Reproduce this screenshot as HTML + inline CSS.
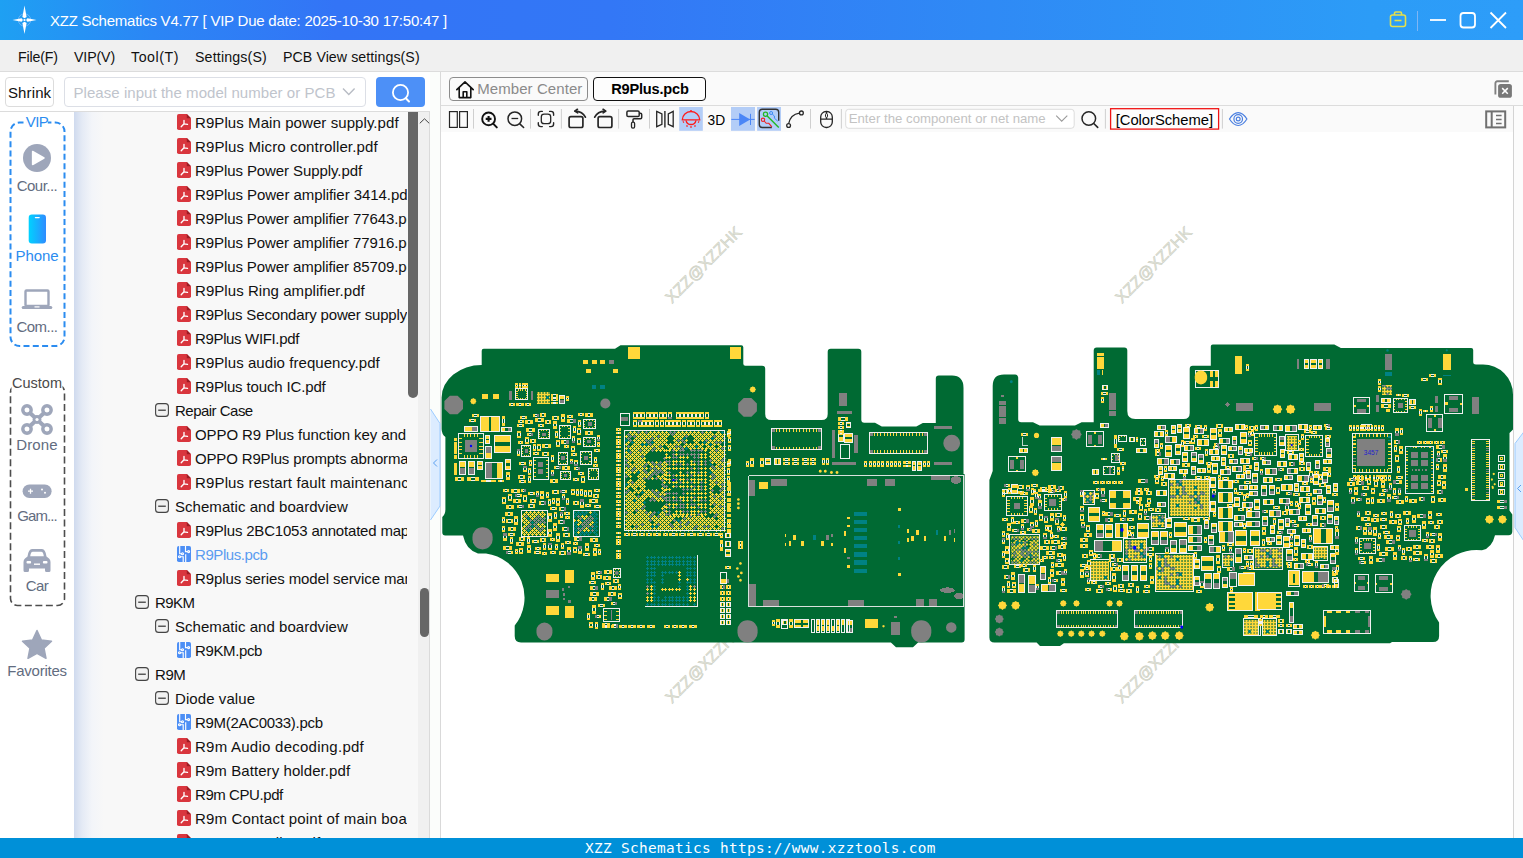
<!DOCTYPE html><html><head><meta charset="utf-8"><title>XZZ Schematics</title><style>
*{box-sizing:border-box;margin:0;padding:0}
html,body{width:1523px;height:858px;overflow:hidden;background:#fff}
body{font-family:"Liberation Sans",sans-serif;font-size:15px;color:#000;position:relative}
.abs{position:absolute}
.t{position:absolute;white-space:pre;line-height:20px;height:20px}
#titlebar{left:0;top:0;width:1523px;height:40px;background:linear-gradient(90deg,#1ea0f3 0%,#2b86f5 10%,#3374f6 22%,#3377f6 40%,#2f8af5 65%,#2c9cf7 90%,#2d9df9 100%)}
#menubar{left:0;top:40px;width:1523px;height:32px;background:#f0f0f0;border-bottom:1px solid #dcdcdc}
#menubar .t{top:7px;color:#111}
#searchrow{left:0;top:72px;width:430px;height:40px;background:#fff;border-bottom:1px solid #dcdcdc}
#sidebar{left:0;top:112px;width:74px;height:726px;background:#fff}
#tree{left:74px;top:112px;width:334px;height:726px;overflow:hidden;background:linear-gradient(90deg,#cfdaee 0px,#e4eaf5 8px,#f3f5f9 18px,#f8f8f8 30px,#f8f8f8 100%)}
#tree .r{position:absolute;left:0;height:24px;width:600px;white-space:pre;line-height:24px;font-size:15px;color:#111}
#tree .r span{position:absolute;top:1px}
#scroll1{left:408px;top:112px;width:10px;height:726px;background:#f8f8f8}
#scroll2{left:418px;top:112px;width:12px;height:726px;background:#f0f0f0;border-right:1px solid #dadada}
#divider{left:430px;top:72px;width:11px;height:766px;background:#fbfdfb;border-right:1px solid #d9d9d9}
#tabrow{left:441px;top:72px;width:1082px;height:34px;background:#fafafa;border-bottom:1px solid #dcdcdc}
#toolbar{left:441px;top:106px;width:1073px;height:26px;background:#fafafa}
#canvas{left:441px;top:132px;width:1073px;height:706px;background:#fff;overflow:hidden}
#rstrip{left:1513px;top:106px;width:10px;height:732px;background:#fcfcfc;border-left:1px solid #d4d4d4}
#status{left:0;top:838px;width:1523px;height:20px;background:#0090d8}
#status .t{left:585px;top:-0.2px;font:14.4px/20px "DejaVu Sans Mono","Liberation Mono",monospace;color:#fff;letter-spacing:.33px}
.side{position:absolute;left:0;width:74px;text-align:center;font-size:15px;color:#626c80;line-height:20px;height:20px;white-space:pre}
</style></head><body><div id="titlebar" class="abs">
<svg class="abs" style="left:10px;top:4px" width="30" height="32" viewBox="0 0 30 32">
<circle cx="14.5" cy="16" r="6.2" fill="none" stroke="#9cc6fb" stroke-width="0.8" opacity=".7"/>
<path d="M14.5 1.5 L16.6 13 L14.5 14.2 L12.4 13 Z M14.5 30 L12.4 19 L14.5 17.8 L16.6 19 Z M2.5 16 L11.6 14.3 L12.9 16 L11.6 17.7 Z M26.5 16 L17.4 17.7 L16.1 16 L17.4 14.3 Z" fill="#fff"/>
<circle cx="14.5" cy="16" r="1.1" fill="#fff"/>
</svg>
<div class="t" style="left:50px;top:10.5px;color:#fff;font-size:15px;letter-spacing:-0.238px">XZZ Schematics V4.77 [ VIP Due date: 2025-10-30 17:50:47 ]</div>
<svg class="abs" style="left:1385px;top:8px" width="130" height="26" viewBox="0 0 130 26">
<g fill="none" stroke="#e6e04a" stroke-width="1.6" stroke-linejoin="round"><rect x="5.5" y="7" width="15" height="11.5" rx="2"/><path d="M9.5 7V5.2Q9.5 4 10.7 4H15.3Q16.5 4 16.5 5.2V7"/><path d="M9.5 12.5H16.5"/></g>
<path d="M32.5 3V23" stroke="#7fb6f5" stroke-width="1"/>
<g fill="none" stroke="#fff" stroke-width="1.8"><path d="M45 12H61"/><rect x="75.5" y="5" width="14.5" height="14.5" rx="3"/><path d="M105.5 4.5L121 20M121 4.5L105.5 20"/></g>
</svg>
</div>
<div id="menubar" class="abs">
<div class="t" style="left:18px;top:7px;font-size:14.2px;letter-spacing:-0.174px">File(F)</div>
<div class="t" style="left:74px;top:7px;font-size:14.2px;letter-spacing:-0.136px">VIP(V)</div>
<div class="t" style="left:131px;top:7px;font-size:14.2px;letter-spacing:0.545px">Tool(T)</div>
<div class="t" style="left:195px;top:7px;font-size:14.2px;letter-spacing:0.16px">Settings(S)</div>
<div class="t" style="left:283px;top:7px;font-size:14.2px;letter-spacing:0.066px">PCB View settings(S)</div>
</div>
<div id="searchrow" class="abs">
<div class="abs" style="left:5px;top:5px;width:49px;height:30px;border:1px solid #dcdcdc;border-radius:4px;background:#fff"></div>
<div class="t" style="left:8px;top:10.5px;font-size:15px;color:#111;letter-spacing:0.113px">Shrink</div>
<div class="abs" style="left:64px;top:5px;width:302px;height:30px;border:1px solid #dcdfe6;border-radius:4px;background:#fff"></div>
<div class="t" style="left:73.5px;top:10.5px;font-size:15px;color:#c0c4cc;letter-spacing:0.051px">Please input the model number or PCB</div>
<svg class="abs" style="left:341px;top:14px" width="16" height="12" viewBox="0 0 16 12"><path d="M2 2.5L7.8 8.5L13.6 2.5" fill="none" stroke="#b8bcc4" stroke-width="1.4"/></svg>
<div class="abs" style="left:376px;top:5px;width:49px;height:30px;border-radius:4px;background:#4d90f7"></div>
<svg class="abs" style="left:388px;top:9px" width="26" height="24" viewBox="0 0 26 24"><circle cx="12.5" cy="11.5" r="7.6" fill="none" stroke="#fff" stroke-width="1.8"/><path d="M17.8 17.2L21 20.5" stroke="#fff" stroke-width="2" stroke-linecap="round"/></svg>
</div>
<div id="sidebar" class="abs">
<svg class="abs" style="left:0;top:0" width="74" height="726" viewBox="0 112 74 726">
<defs><linearGradient id="ph" x1="0" y1="0" x2="1" y2="0"><stop offset="0" stop-color="#00d2ff"/><stop offset="1" stop-color="#2f8cff"/></linearGradient></defs>
<rect x="10.5" y="122.500" width="54" height="223.500" rx="9" fill="none" stroke="#2b8cf0" stroke-width="2" stroke-dasharray="6 3.300" stroke-dashoffset="2"/>
<rect x="26.300" y="114" width="21.500" height="16" fill="#fff"/>
<circle cx="37" cy="158" r="14" fill="#9ea6ba"/><path d="M32.6 151.5L44 158L32.6 164.5Z" fill="#fff" stroke="#fff" stroke-width="1.5" stroke-linejoin="round"/>
<rect x="28.7" y="214.5" width="17.3" height="29" rx="3.2" fill="url(#ph)"/><rect x="34.8" y="217" width="5" height="1.2" rx=".6" fill="#fff"/>
<g fill="none" stroke="#9ea6ba" stroke-width="2.4"><rect x="25.5" y="290.5" width="23" height="15.5" rx="1"/></g><rect x="21.7" y="306" width="30.6" height="3" rx="1.5" fill="#9ea6ba"/><rect x="34.5" y="306.3" width="5" height="1.2" fill="#fff"/>
<rect x="10.500" y="385" width="54" height="220.5" rx="7" fill="none" stroke="#4d4d4d" stroke-width="1.6" stroke-dasharray="7 3.5"/>
<rect x="11.5" y="372" width="51" height="19" fill="#fff"/>
<g fill="none" stroke="#9ea6ba" stroke-width="3.4"><circle cx="27" cy="410" r="4.2"/><circle cx="47" cy="410" r="4.2"/><circle cx="27" cy="429" r="4.2"/><circle cx="47" cy="429" r="4.2"/><path d="M29.5 412.5L44.5 426.5M44.5 412.5L29.5 426.5" stroke-width="4"/></g><circle cx="37" cy="419.5" r="4.4" fill="#9ea6ba"/><circle cx="37" cy="419.5" r="1.6" fill="#fff"/>
<rect x="22.6" y="484.5" width="29" height="13.5" rx="6.7" fill="#9ea6ba"/><path d="M28 491.2h5M30.5 488.7v5" stroke="#fff" stroke-width="1.3"/><circle cx="42" cy="489.6" r="1" fill="#fff"/><circle cx="45" cy="492.8" r="1" fill="#fff"/>
<path d="M27.5 556.5Q28.5 549 32 549H42Q45.500 549 46.500 556.5L49 558.5Q50.500 559.5 50.500 562V570.500Q50.500 572 49 572H46.500Q45 572 45 570.500V568.500H29V570.500Q29 572 27.500 572H25Q23.500 572 23.500 570.500V562Q23.500 559.500 25 558.500Z" fill="#9ea6ba"/><path d="M30.200 556.200Q30.800 551.800 32.800 551.800H41.200Q43.200 551.800 43.800 556.200Z" fill="#fff"/><rect x="26.500" y="561" width="4.6" height="2.600" rx="1" fill="#fff"/><rect x="42.900" y="561" width="4.600" height="2.600" rx="1" fill="#fff"/><rect x="34" y="563.5" width="6" height="1.400" fill="#fff"/>
<path d="M37 630.500L41.400 640L51.500 641.200L44 648.200L46 658.300L37 653.300L28 658.300L30 648.200L22.500 641.200L32.600 640Z" fill="#9ea6ba" stroke="#9ea6ba" stroke-width="1.500" stroke-linejoin="round"/>
</svg>
<div class="side" style="top:0.29999999999999716px;color:#2b8cf0;font-size:15px;letter-spacing:-0.626px">VIP</div>
<div class="side" style="top:63.69999999999999px;color:#626c80;font-size:15px;letter-spacing:-0.527px">Cour...</div>
<div class="side" style="top:134px;color:#2b8cf0;font-size:15px;letter-spacing:-0.075px">Phone</div>
<div class="side" style="top:204.5px;color:#626c80;font-size:15px;letter-spacing:-0.529px">Com...</div>
<div class="side" style="top:261px;color:#4a4a4a;font-size:14.5px">Custom</div>
<div class="side" style="top:323px;color:#626c80;font-size:15px;letter-spacing:0.149px">Drone</div>
<div class="side" style="top:394px;color:#626c80;font-size:15px;letter-spacing:-0.918px">Gam...</div>
<div class="side" style="top:464px;color:#626c80;font-size:15px;letter-spacing:-0.557px">Car</div>
<div class="side" style="top:549px;color:#626c80;font-size:15px;letter-spacing:-0.243px">Favorites</div>
</div>
<div id="tree" class="abs"><div class="abs" style="left:0;top:0;width:332.5px;height:726px;overflow:hidden">
<div class="r" style="top:-2px"><svg class="abs" style="left:103px;top:4px" width="14" height="16" viewBox="0 0 14 16"><path d="M1.800 0H9.800L14 4.200V14.200Q14 16 12.200 16H1.800Q0 16 0 14.200V1.800Q0 0 1.800 0Z" fill="#d9363e"/><path d="M9.800 0L14 4.200H9.800Z" fill="#9c1c24"/><path d="M7 9.800V6.300M7 9.800L4.200 12.700M7 9.800L10.500 10.400" fill="none" stroke="#fff" stroke-width="1.350" stroke-linecap="round"/></svg><span style="left:121px;letter-spacing:0.079px">R9Plus Main power supply.pdf</span></div>
<div class="r" style="top:22px"><svg class="abs" style="left:103px;top:4px" width="14" height="16" viewBox="0 0 14 16"><path d="M1.800 0H9.800L14 4.200V14.200Q14 16 12.200 16H1.800Q0 16 0 14.200V1.800Q0 0 1.800 0Z" fill="#d9363e"/><path d="M9.800 0L14 4.200H9.800Z" fill="#9c1c24"/><path d="M7 9.800V6.300M7 9.800L4.200 12.700M7 9.800L10.500 10.400" fill="none" stroke="#fff" stroke-width="1.350" stroke-linecap="round"/></svg><span style="left:121px;letter-spacing:0.128px">R9Plus Micro controller.pdf</span></div>
<div class="r" style="top:46px"><svg class="abs" style="left:103px;top:4px" width="14" height="16" viewBox="0 0 14 16"><path d="M1.800 0H9.800L14 4.200V14.200Q14 16 12.200 16H1.800Q0 16 0 14.200V1.800Q0 0 1.800 0Z" fill="#d9363e"/><path d="M9.800 0L14 4.200H9.800Z" fill="#9c1c24"/><path d="M7 9.800V6.300M7 9.800L4.200 12.700M7 9.800L10.500 10.400" fill="none" stroke="#fff" stroke-width="1.350" stroke-linecap="round"/></svg><span style="left:121px;letter-spacing:-0.086px">R9Plus Power Supply.pdf</span></div>
<div class="r" style="top:70px"><svg class="abs" style="left:103px;top:4px" width="14" height="16" viewBox="0 0 14 16"><path d="M1.800 0H9.800L14 4.200V14.200Q14 16 12.200 16H1.800Q0 16 0 14.200V1.800Q0 0 1.800 0Z" fill="#d9363e"/><path d="M9.800 0L14 4.200H9.800Z" fill="#9c1c24"/><path d="M7 9.800V6.300M7 9.800L4.200 12.700M7 9.800L10.500 10.400" fill="none" stroke="#fff" stroke-width="1.350" stroke-linecap="round"/></svg><span style="left:121px;letter-spacing:-0.059px">R9Plus Power amplifier 3414.pdf</span></div>
<div class="r" style="top:94px"><svg class="abs" style="left:103px;top:4px" width="14" height="16" viewBox="0 0 14 16"><path d="M1.800 0H9.800L14 4.200V14.200Q14 16 12.200 16H1.800Q0 16 0 14.200V1.800Q0 0 1.800 0Z" fill="#d9363e"/><path d="M9.800 0L14 4.200H9.800Z" fill="#9c1c24"/><path d="M7 9.800V6.300M7 9.800L4.200 12.700M7 9.800L10.500 10.400" fill="none" stroke="#fff" stroke-width="1.350" stroke-linecap="round"/></svg><span style="left:121px;letter-spacing:-0.093px">R9Plus Power amplifier 77643.pdf</span></div>
<div class="r" style="top:118px"><svg class="abs" style="left:103px;top:4px" width="14" height="16" viewBox="0 0 14 16"><path d="M1.800 0H9.800L14 4.200V14.200Q14 16 12.200 16H1.800Q0 16 0 14.200V1.800Q0 0 1.800 0Z" fill="#d9363e"/><path d="M9.800 0L14 4.200H9.800Z" fill="#9c1c24"/><path d="M7 9.800V6.300M7 9.800L4.200 12.700M7 9.800L10.500 10.400" fill="none" stroke="#fff" stroke-width="1.350" stroke-linecap="round"/></svg><span style="left:121px;letter-spacing:-0.093px">R9Plus Power amplifier 77916.pdf</span></div>
<div class="r" style="top:142px"><svg class="abs" style="left:103px;top:4px" width="14" height="16" viewBox="0 0 14 16"><path d="M1.800 0H9.800L14 4.200V14.200Q14 16 12.200 16H1.800Q0 16 0 14.200V1.800Q0 0 1.800 0Z" fill="#d9363e"/><path d="M9.800 0L14 4.200H9.800Z" fill="#9c1c24"/><path d="M7 9.800V6.300M7 9.800L4.200 12.700M7 9.800L10.500 10.400" fill="none" stroke="#fff" stroke-width="1.350" stroke-linecap="round"/></svg><span style="left:121px;letter-spacing:-0.093px">R9Plus Power amplifier 85709.pdf</span></div>
<div class="r" style="top:166px"><svg class="abs" style="left:103px;top:4px" width="14" height="16" viewBox="0 0 14 16"><path d="M1.800 0H9.800L14 4.200V14.200Q14 16 12.200 16H1.800Q0 16 0 14.200V1.800Q0 0 1.800 0Z" fill="#d9363e"/><path d="M9.800 0L14 4.200H9.800Z" fill="#9c1c24"/><path d="M7 9.800V6.300M7 9.800L4.200 12.700M7 9.800L10.500 10.400" fill="none" stroke="#fff" stroke-width="1.350" stroke-linecap="round"/></svg><span style="left:121px;letter-spacing:0.055px">R9Plus Ring amplifier.pdf</span></div>
<div class="r" style="top:190px"><svg class="abs" style="left:103px;top:4px" width="14" height="16" viewBox="0 0 14 16"><path d="M1.800 0H9.800L14 4.200V14.200Q14 16 12.200 16H1.800Q0 16 0 14.200V1.800Q0 0 1.800 0Z" fill="#d9363e"/><path d="M9.800 0L14 4.200H9.800Z" fill="#9c1c24"/><path d="M7 9.800V6.300M7 9.800L4.200 12.700M7 9.800L10.500 10.400" fill="none" stroke="#fff" stroke-width="1.350" stroke-linecap="round"/></svg><span style="left:121px;letter-spacing:-0.165px">R9Plus Secondary power supply.pdf</span></div>
<div class="r" style="top:214px"><svg class="abs" style="left:103px;top:4px" width="14" height="16" viewBox="0 0 14 16"><path d="M1.800 0H9.800L14 4.200V14.200Q14 16 12.200 16H1.800Q0 16 0 14.200V1.800Q0 0 1.800 0Z" fill="#d9363e"/><path d="M9.800 0L14 4.200H9.800Z" fill="#9c1c24"/><path d="M7 9.800V6.300M7 9.800L4.200 12.700M7 9.800L10.500 10.400" fill="none" stroke="#fff" stroke-width="1.350" stroke-linecap="round"/></svg><span style="left:121px;letter-spacing:-0.347px">R9Plus WIFI.pdf</span></div>
<div class="r" style="top:238px"><svg class="abs" style="left:103px;top:4px" width="14" height="16" viewBox="0 0 14 16"><path d="M1.800 0H9.800L14 4.200V14.200Q14 16 12.200 16H1.800Q0 16 0 14.200V1.800Q0 0 1.800 0Z" fill="#d9363e"/><path d="M9.800 0L14 4.200H9.800Z" fill="#9c1c24"/><path d="M7 9.800V6.300M7 9.800L4.200 12.700M7 9.800L10.500 10.400" fill="none" stroke="#fff" stroke-width="1.350" stroke-linecap="round"/></svg><span style="left:121px;letter-spacing:0.062px">R9Plus audio frequency.pdf</span></div>
<div class="r" style="top:262px"><svg class="abs" style="left:103px;top:4px" width="14" height="16" viewBox="0 0 14 16"><path d="M1.800 0H9.800L14 4.200V14.200Q14 16 12.200 16H1.800Q0 16 0 14.200V1.800Q0 0 1.800 0Z" fill="#d9363e"/><path d="M9.800 0L14 4.200H9.800Z" fill="#9c1c24"/><path d="M7 9.800V6.300M7 9.800L4.200 12.700M7 9.800L10.500 10.400" fill="none" stroke="#fff" stroke-width="1.350" stroke-linecap="round"/></svg><span style="left:121px;letter-spacing:-0.148px">R9Plus touch IC.pdf</span></div>
<div class="r" style="top:286px"><svg class="abs" style="left:81px;top:5px" width="14" height="14" viewBox="0 0 14 14"><rect x=".6" y=".6" width="12.800" height="12.800" rx="3" fill="#f1f1f1" stroke="#444" stroke-width="1.100"/><path d="M3.200 7.200H10.800" stroke="#333" stroke-width="1.200"/></svg><span style="left:101px;letter-spacing:-0.516px">Repair Case</span></div>
<div class="r" style="top:310px"><svg class="abs" style="left:103px;top:4px" width="14" height="16" viewBox="0 0 14 16"><path d="M1.800 0H9.800L14 4.200V14.200Q14 16 12.200 16H1.800Q0 16 0 14.200V1.800Q0 0 1.800 0Z" fill="#d9363e"/><path d="M9.800 0L14 4.200H9.800Z" fill="#9c1c24"/><path d="M7 9.800V6.300M7 9.800L4.200 12.700M7 9.800L10.500 10.400" fill="none" stroke="#fff" stroke-width="1.350" stroke-linecap="round"/></svg><span style="left:121px;letter-spacing:-0.084px">OPPO R9 Plus function key and touch failure.pdf</span></div>
<div class="r" style="top:334px"><svg class="abs" style="left:103px;top:4px" width="14" height="16" viewBox="0 0 14 16"><path d="M1.800 0H9.800L14 4.200V14.200Q14 16 12.200 16H1.800Q0 16 0 14.200V1.800Q0 0 1.800 0Z" fill="#d9363e"/><path d="M9.800 0L14 4.200H9.800Z" fill="#9c1c24"/><path d="M7 9.800V6.300M7 9.800L4.200 12.700M7 9.800L10.500 10.400" fill="none" stroke="#fff" stroke-width="1.350" stroke-linecap="round"/></svg><span style="left:121px;letter-spacing:-0.152px">OPPO R9Plus prompts abnormal charging.pdf</span></div>
<div class="r" style="top:358px"><svg class="abs" style="left:103px;top:4px" width="14" height="16" viewBox="0 0 14 16"><path d="M1.800 0H9.800L14 4.200V14.200Q14 16 12.200 16H1.800Q0 16 0 14.200V1.800Q0 0 1.800 0Z" fill="#d9363e"/><path d="M9.800 0L14 4.200H9.800Z" fill="#9c1c24"/><path d="M7 9.800V6.300M7 9.800L4.200 12.700M7 9.800L10.500 10.400" fill="none" stroke="#fff" stroke-width="1.350" stroke-linecap="round"/></svg><span style="left:121px;letter-spacing:0.153px">R9Plus restart fault maintenance.pdf</span></div>
<div class="r" style="top:382px"><svg class="abs" style="left:81px;top:5px" width="14" height="14" viewBox="0 0 14 14"><rect x=".6" y=".6" width="12.800" height="12.800" rx="3" fill="#f1f1f1" stroke="#444" stroke-width="1.100"/><path d="M3.200 7.200H10.800" stroke="#333" stroke-width="1.200"/></svg><span style="left:101px;letter-spacing:0.045px">Schematic and boardview</span></div>
<div class="r" style="top:406px"><svg class="abs" style="left:103px;top:4px" width="14" height="16" viewBox="0 0 14 16"><path d="M1.800 0H9.800L14 4.200V14.200Q14 16 12.200 16H1.800Q0 16 0 14.200V1.800Q0 0 1.800 0Z" fill="#d9363e"/><path d="M9.800 0L14 4.200H9.800Z" fill="#9c1c24"/><path d="M7 9.800V6.300M7 9.800L4.200 12.700M7 9.800L10.500 10.400" fill="none" stroke="#fff" stroke-width="1.350" stroke-linecap="round"/></svg><span style="left:121px;letter-spacing:-0.19px">R9Plus 2BC1053 annotated map.pdf</span></div>
<div class="r" style="top:430px"><svg class="abs" style="left:103px;top:4px" width="14" height="16" viewBox="0 0 14 16"><rect x="0" y="0" width="14" height="16" rx="1.800" fill="#4d8ff5"/><g fill="none" stroke="#fff" stroke-width="1.150"><path d="M2.700 0V7.700H4.500M8.500 0V5.600H10.600M3.500 10.700H6.200V16M8.700 8.300V16"/><circle cx="5.500" cy="7.700" r="1"/><circle cx="11.600" cy="5.600" r="1"/><circle cx="2.500" cy="10.700" r="1"/></g></svg><span style="left:121px;color:#5b9cf0;letter-spacing:-0.431px">R9Plus.pcb</span></div>
<div class="r" style="top:454px"><svg class="abs" style="left:103px;top:4px" width="14" height="16" viewBox="0 0 14 16"><path d="M1.800 0H9.800L14 4.200V14.200Q14 16 12.200 16H1.800Q0 16 0 14.200V1.800Q0 0 1.800 0Z" fill="#d9363e"/><path d="M9.800 0L14 4.200H9.800Z" fill="#9c1c24"/><path d="M7 9.800V6.300M7 9.800L4.200 12.700M7 9.800L10.500 10.400" fill="none" stroke="#fff" stroke-width="1.350" stroke-linecap="round"/></svg><span style="left:121px;letter-spacing:-0.099px">R9plus series model service manual.pdf</span></div>
<div class="r" style="top:478px"><svg class="abs" style="left:61px;top:5px" width="14" height="14" viewBox="0 0 14 14"><rect x=".6" y=".6" width="12.800" height="12.800" rx="3" fill="#f1f1f1" stroke="#444" stroke-width="1.100"/><path d="M3.200 7.200H10.800" stroke="#333" stroke-width="1.200"/></svg><span style="left:81px;letter-spacing:-0.544px">R9KM</span></div>
<div class="r" style="top:502px"><svg class="abs" style="left:81px;top:5px" width="14" height="14" viewBox="0 0 14 14"><rect x=".6" y=".6" width="12.800" height="12.800" rx="3" fill="#f1f1f1" stroke="#444" stroke-width="1.100"/><path d="M3.200 7.200H10.800" stroke="#333" stroke-width="1.200"/></svg><span style="left:101px;letter-spacing:0.045px">Schematic and boardview</span></div>
<div class="r" style="top:526px"><svg class="abs" style="left:103px;top:4px" width="14" height="16" viewBox="0 0 14 16"><rect x="0" y="0" width="14" height="16" rx="1.800" fill="#4d8ff5"/><g fill="none" stroke="#fff" stroke-width="1.150"><path d="M2.700 0V7.700H4.500M8.500 0V5.600H10.600M3.500 10.700H6.200V16M8.700 8.300V16"/><circle cx="5.500" cy="7.700" r="1"/><circle cx="11.600" cy="5.600" r="1"/><circle cx="2.500" cy="10.700" r="1"/></g></svg><span style="left:121px;letter-spacing:-0.366px">R9KM.pcb</span></div>
<div class="r" style="top:550px"><svg class="abs" style="left:61px;top:5px" width="14" height="14" viewBox="0 0 14 14"><rect x=".6" y=".6" width="12.800" height="12.800" rx="3" fill="#f1f1f1" stroke="#444" stroke-width="1.100"/><path d="M3.200 7.200H10.800" stroke="#333" stroke-width="1.200"/></svg><span style="left:81px;letter-spacing:-0.424px">R9M</span></div>
<div class="r" style="top:574px"><svg class="abs" style="left:81px;top:5px" width="14" height="14" viewBox="0 0 14 14"><rect x=".6" y=".6" width="12.800" height="12.800" rx="3" fill="#f1f1f1" stroke="#444" stroke-width="1.100"/><path d="M3.200 7.200H10.800" stroke="#333" stroke-width="1.200"/></svg><span style="left:101px;letter-spacing:0.08px">Diode value</span></div>
<div class="r" style="top:598px"><svg class="abs" style="left:103px;top:4px" width="14" height="16" viewBox="0 0 14 16"><rect x="0" y="0" width="14" height="16" rx="1.800" fill="#4d8ff5"/><g fill="none" stroke="#fff" stroke-width="1.150"><path d="M2.700 0V7.700H4.500M8.500 0V5.600H10.600M3.500 10.700H6.200V16M8.700 8.300V16"/><circle cx="5.500" cy="7.700" r="1"/><circle cx="11.600" cy="5.600" r="1"/><circle cx="2.500" cy="10.700" r="1"/></g></svg><span style="left:121px;letter-spacing:-0.304px">R9M(2AC0033).pcb</span></div>
<div class="r" style="top:622px"><svg class="abs" style="left:103px;top:4px" width="14" height="16" viewBox="0 0 14 16"><path d="M1.800 0H9.800L14 4.200V14.200Q14 16 12.200 16H1.800Q0 16 0 14.200V1.800Q0 0 1.800 0Z" fill="#d9363e"/><path d="M9.800 0L14 4.200H9.800Z" fill="#9c1c24"/><path d="M7 9.800V6.300M7 9.800L4.200 12.700M7 9.800L10.500 10.400" fill="none" stroke="#fff" stroke-width="1.350" stroke-linecap="round"/></svg><span style="left:121px;letter-spacing:0.252px">R9m Audio decoding.pdf</span></div>
<div class="r" style="top:646px"><svg class="abs" style="left:103px;top:4px" width="14" height="16" viewBox="0 0 14 16"><path d="M1.800 0H9.800L14 4.200V14.200Q14 16 12.200 16H1.800Q0 16 0 14.200V1.800Q0 0 1.800 0Z" fill="#d9363e"/><path d="M9.800 0L14 4.200H9.800Z" fill="#9c1c24"/><path d="M7 9.800V6.300M7 9.800L4.200 12.700M7 9.800L10.500 10.400" fill="none" stroke="#fff" stroke-width="1.350" stroke-linecap="round"/></svg><span style="left:121px;letter-spacing:0.081px">R9m Battery holder.pdf</span></div>
<div class="r" style="top:670px"><svg class="abs" style="left:103px;top:4px" width="14" height="16" viewBox="0 0 14 16"><path d="M1.800 0H9.800L14 4.200V14.200Q14 16 12.200 16H1.800Q0 16 0 14.200V1.800Q0 0 1.800 0Z" fill="#d9363e"/><path d="M9.800 0L14 4.200H9.800Z" fill="#9c1c24"/><path d="M7 9.800V6.300M7 9.800L4.200 12.700M7 9.800L10.500 10.400" fill="none" stroke="#fff" stroke-width="1.350" stroke-linecap="round"/></svg><span style="left:121px;letter-spacing:-0.43px">R9m CPU.pdf</span></div>
<div class="r" style="top:694px"><svg class="abs" style="left:103px;top:4px" width="14" height="16" viewBox="0 0 14 16"><path d="M1.800 0H9.800L14 4.200V14.200Q14 16 12.200 16H1.800Q0 16 0 14.200V1.800Q0 0 1.800 0Z" fill="#d9363e"/><path d="M9.800 0L14 4.200H9.800Z" fill="#9c1c24"/><path d="M7 9.800V6.300M7 9.800L4.200 12.700M7 9.800L10.500 10.400" fill="none" stroke="#fff" stroke-width="1.350" stroke-linecap="round"/></svg><span style="left:121px;letter-spacing:0.177px">R9m Contact point of main board.pdf</span></div>
<div class="r" style="top:718px"><svg class="abs" style="left:103px;top:4px" width="14" height="16" viewBox="0 0 14 16"><path d="M1.800 0H9.800L14 4.200V14.200Q14 16 12.200 16H1.800Q0 16 0 14.200V1.800Q0 0 1.800 0Z" fill="#d9363e"/><path d="M9.800 0L14 4.200H9.800Z" fill="#9c1c24"/><path d="M7 9.800V6.300M7 9.800L4.200 12.700M7 9.800L10.500 10.400" fill="none" stroke="#fff" stroke-width="1.350" stroke-linecap="round"/></svg><span style="left:121px">R9m Controller.pdf</span></div>
</div></div>
<div id="scroll1" class="abs"><div class="abs" style="left:0;top:0;width:9.5px;height:286px;background:#666;border-radius:0 0 5px 5px"></div></div>
<div id="scroll2" class="abs"><svg class="abs" style="left:0;top:2px" width="12" height="14" viewBox="0 0 12 14"><path d="M1.800 9.300L6.500 4.800L11.200 9.300" fill="none" stroke="#444" stroke-width="1"/></svg><div class="abs" style="left:1.5px;top:476px;width:9.5px;height:48.5px;background:#666;border-radius:5px"></div></div>
<div id="divider" class="abs"><svg class="abs" style="left:0;top:335px" width="11" height="114" viewBox="430 407 11 114"><path d="M430.500 409L440 423.500V506L430.500 520" fill="#dcecff" stroke="#9cccff" stroke-width="1"/><path d="M437 459.500L433.500 463L437 466.500" fill="none" stroke="#5aa0f0" stroke-width="1"/></svg></div>
<div id="tabrow" class="abs">
<div class="abs" style="left:8px;top:5px;width:139px;height:24px;border:1px solid #8c8c8c;border-radius:4px;background:#fafafa"></div>
<svg class="abs" style="left:13px;top:7px" width="22" height="20" viewBox="0 0 22 20"><path d="M2.800 10.600L11 2.800L19.200 10.600M5.200 8.800V18.600H16.800V8.800M9.200 18.600V12.800H12.800V18.600" fill="none" stroke="#111" stroke-width="1.600" stroke-linejoin="round" stroke-linecap="round"/></svg>
<div class="t" style="left:36.2px;top:7px;font-size:15px;color:#8a8a8a;letter-spacing:0.077px">Member Center</div>
<div class="abs" style="left:152px;top:5px;width:113px;height:24px;border:1.500px solid #111;border-radius:4px;background:#fdfdfd"></div>
<div class="t" style="left:170.2px;top:7px;font-size:14.6px;font-weight:bold;color:#000;letter-spacing:-0.201px">R9Plus.pcb</div>
<svg class="abs" style="left:1052px;top:8px" width="20" height="20" viewBox="0 0 20 20"><path d="M2.400 14.400V3.300Q2.400 1.300 4.400 1.300H15.800" fill="none" stroke="#808080" stroke-width="1.900"/><rect x="5.100" y="4" width="13.800" height="13.800" rx="2.600" fill="#787878"/><path d="M9.200 8.100L14.800 13.700M14.800 8.100L9.200 13.700" stroke="#fff" stroke-width="1.500"/></svg>
</div>
<div id="toolbar" class="abs">
<svg class="abs" style="left:0;top:0" width="1073" height="26" viewBox="441 106 1073 26"><rect x="679.2" y="107" width="23.6" height="23.8" fill="#b3cdf7"/><rect x="731" y="107" width="24.0" height="23.8" fill="#b3cdf7"/><rect x="757.1" y="107" width="23.9" height="23.8" fill="#b3cdf7"/><path d="M473.5 109V128.6M530.5 109V128.6M561.4 109V128.6M618.6 109V128.6M649.5 109V128.6M810.5 109V128.6M841.4 109V128.6M1105.4 109V128.6M1222.4 109V128.6" stroke="#cfcfcf" stroke-width="1" fill="none"/><g fill="none" stroke="#262626" stroke-width="1.2"><rect x="449.5" y="111.6" width="7.8" height="15.8"/><rect x="459.6" y="111.6" width="7.8" height="15.800"/></g><g fill="none" stroke="#111" stroke-linecap="round"><circle cx="488.6" cy="118.9" r="6.4" stroke-width="1.9"/><path d="M493.400 123.900L496.800 127.400" stroke-width="2"/><path d="M485.700 118.900H491.500M488.600 116V121.800" stroke-width="2.100" stroke-linecap="butt"/></g><g fill="none" stroke="#262626" stroke-linecap="round"><circle cx="514.800" cy="118.700" r="6.800" stroke-width="1.500"/><path d="M519.800 123.900L523.600 127.500" stroke-width="1.600"/><path d="M511.500 118.500H518.200" stroke-width="1.300" stroke-linecap="butt"/></g><g fill="none" stroke="#262626" stroke-width="1.400" stroke-linecap="round"><path d="M538.300 115.200V114Q538.300 111.400 541 111.400H542.300M549.600 111.400H551Q553.600 111.400 553.600 114V115.200M553.600 122.800V124Q553.600 126.600 551 126.600H549.600M542.300 126.600H541Q538.300 126.600 538.300 124V122.800"/><rect x="541.300" y="114.200" width="9.400" height="9.500" rx="2.800" stroke-width="1.300"/></g><g fill="none" stroke="#262626" stroke-width="1.700" stroke-linejoin="round" stroke-linecap="round"><rect x="569.100" y="116.700" width="13.800" height="10.800" rx="1.800"/><path d="M585.400 117.200Q582.500 111.400 575.200 111.100"/><path d="M577.400 109.300L574.800 111.100L577.700 112.900"/></g><g fill="none" stroke="#262626" stroke-width="1.700" stroke-linejoin="round" stroke-linecap="round"><rect x="598.100" y="116.700" width="13.800" height="10.800" rx="1.800"/><path d="M594.700 117.200Q597.600 111.400 605 111.100"/><path d="M603.100 109.300L605.800 111.100L603.100 112.900"/></g><g fill="none" stroke="#262626" stroke-width="1.500" stroke-linejoin="round"><rect x="626.900" y="110.900" width="12.300" height="5.700" rx="1.300"/><path d="M639.300 113.300H640.500Q641.700 113.300 641.700 114.500V117.600Q641.700 118.800 640.500 118.800H634Q633 118.800 633 119.800V122"/><rect x="631.500" y="122.200" width="3.100" height="5.900" rx="1.400" stroke-width="1.300"/></g><g fill="none" stroke="#262626" stroke-width="1.300" stroke-linejoin="miter"><path d="M656.700 111.400L661.900 113.800V124.300L656.700 126.700Z"/><path d="M673.200 111.400L668.300 113.800V124.300L673.200 126.700Z"/><path d="M664.900 110.900V127.600" stroke-width="1.400"/></g><g fill="none" stroke="#ff1a1a" stroke-width="1.300"><circle cx="691" cy="110.900" r="0.900" fill="#ff1a1a" stroke="none"/><path d="M682.300 119.800A8.700 8.300 0 0 1 699.700 119.800Z"/><path d="M686 120.300Q686.800 124.400 691 124.500Q695.200 124.400 696 120.300"/><path d="M683 122.400L683.800 121.600M699 122.400L698.200 121.600M686.500 126.600L687.500 125.500M695.500 126.600L694.500 125.500M691 126.300V127.800" stroke-width="1.500"/></g><g stroke="#4a86f7" fill="none" stroke-width="1"><path d="M731.300 119.400H754.700"/><path d="M750.500 113.800V125"/><path d="M739.200 113.100V125.900L750.200 119.500Z" fill="#4a86f7" stroke="none"/></g><g fill="none" stroke-width="1.300"><path d="M771.800 127.500H762.300Q759.300 127.500 759.300 124.500V112.200Q759.300 109.200 762.300 109.200H775.700Q778.700 109.200 778.700 112.200V120.700" stroke="#333" stroke-width="1.400"/><path d="M767.200 116L778.800 127.600" stroke="#22b822" stroke-width="1.400"/><circle cx="765.500" cy="114.300" r="2.100" stroke="#22b822"/><circle cx="771.100" cy="113" r="1.500" stroke="#3b8bf5" stroke-width="1"/><path d="M772.200 114L774.400 116V118.200L777.800 121.200" stroke="#3b8bf5" stroke-width="1"/><circle cx="763" cy="119.800" r="1.700" stroke="#ee2222" stroke-width="1.100"/><path d="M764.200 121L766.200 123.300H768.800L771.900 126.900" stroke="#ee2222" stroke-width="1.100"/></g><g fill="none" stroke="#262626" stroke-width="1.300"><circle cx="788.600" cy="125.500" r="1.900"/><circle cx="801.400" cy="112.900" r="1.900"/><path d="M788.700 123.500Q790.300 114.500 799.500 113.100"/></g><g fill="none" stroke="#262626" stroke-width="1.300"><rect x="820.700" y="111.500" width="11.600" height="16" rx="5.500"/><path d="M820.700 119.100H832.300M826.500 111.500V119"/><rect x="825.500" y="113.600" width="2" height="3.800" rx="1" fill="#fafafa" stroke-width="1"/></g><rect x="845.700" y="109.300" width="228.500" height="19" rx="3" fill="#fff" stroke="#dcdcdc" stroke-width="1"/><text x="848.700" y="123.300" font-family="Liberation Sans, sans-serif" font-size="13.200" fill="#c3c3c3" textLength="197" lengthAdjust="spacing">Enter the component or net name</text><path d="M1056.200 115.700L1061.700 121.200L1067.300 115.700" fill="none" stroke="#9a9a9a" stroke-width="1.100"/><g fill="none" stroke="#262626" stroke-linecap="round"><circle cx="1088.800" cy="118.500" r="6.800" stroke-width="1.500"/><path d="M1094 123.700L1097.700 127.400" stroke-width="1.600"/></g><rect x="1110.600" y="108.700" width="108" height="20.400" fill="#fdfdfd" stroke="#f01414" stroke-width="1.300"/><text x="1115.700" y="125" font-family="Liberation Sans, sans-serif" font-size="14.800" fill="#000" textLength="97.300" lengthAdjust="spacing">[ColorScheme]</text><g fill="none" stroke="#4a7fe0" stroke-width="1.200"><path d="M1229.500 119Q1233.500 112.600 1238.200 112.600Q1242.900 112.600 1246.900 119Q1242.900 125.500 1238.200 125.500Q1233.500 125.500 1229.500 119Z"/><circle cx="1238.200" cy="119" r="4.300"/><circle cx="1238.200" cy="119" r="1.900"/></g><text x="707.600" y="125" font-family="Liberation Sans, sans-serif" font-size="14.800" fill="#000" textLength="17.600" lengthAdjust="spacingAndGlyphs">3D</text><g fill="none" stroke="#707070"><rect x="1486.200" y="111.400" width="19" height="16" stroke-width="2"/><path d="M1491.700 111V128" stroke-width="2"/><path d="M1496 115.500H1501.600M1496 119.500H1501.600M1496 123.500H1501.600" stroke-width="1.300"/></g></svg>
</div>
<div id="canvas" class="abs"><svg class="abs" style="left:0;top:0" width="1073" height="706" viewBox="441 132 1073 706"><defs><pattern id="pDense" width="18" height="18" patternUnits="userSpaceOnUse"><path fill="#ffd83a" d="M0.9 -0.5L2.3 0.9L0.9 2.3L-0.5 0.9zM2.7 1.3L4.1 2.7L2.7 4.1L1.3 2.7zM0.9 3.1L2.3 4.5L0.9 5.9L-0.5 4.5zM2.7 4.9L4.1 6.3L2.7 7.7L1.3 6.3zM0.9 6.7L2.3 8.1L0.9 9.5L-0.5 8.1zM2.7 8.5L4.1 9.9L2.7 11.3L1.3 9.9zM0.9 10.3L2.3 11.7L0.9 13.1L-0.5 11.7zM0.9 13.9L2.3 15.3L0.9 16.7L-0.5 15.3zM2.7 15.7L4.1 17.1L2.7 18.5L1.3 17.1zM6.3 1.3L7.7 2.7L6.3 4.1L4.9 2.7zM6.3 4.9L7.7 6.3L6.3 7.7L4.9 6.3zM4.5 6.7L5.9 8.1L4.5 9.5L3.1 8.1zM6.3 8.5L7.7 9.9L6.3 11.3L4.9 9.9zM4.5 10.3L5.9 11.7L4.5 13.1L3.1 11.7zM4.5 13.9L5.9 15.3L4.5 16.7L3.1 15.3zM8.1 -0.5L9.5 0.9L8.1 2.3L6.7 0.9zM9.9 1.3L11.3 2.7L9.9 4.1L8.5 2.7zM9.9 4.9L11.3 6.3L9.9 7.7L8.5 6.3zM8.1 6.7L9.5 8.1L8.1 9.5L6.7 8.1zM9.9 8.5L11.3 9.9L9.9 11.3L8.5 9.9zM9.9 12.1L11.3 13.5L9.9 14.9L8.5 13.5zM8.1 13.9L9.5 15.3L8.1 16.7L6.7 15.3zM11.7 -0.5L13.1 0.9L11.7 2.3L10.3 0.9zM11.7 3.1L13.1 4.5L11.7 5.9L10.3 4.5zM11.7 6.7L13.1 8.1L11.7 9.5L10.3 8.1zM13.5 12.1L14.9 13.5L13.5 14.9L12.1 13.5zM11.7 13.9L13.1 15.3L11.7 16.7L10.3 15.3zM13.5 15.7L14.9 17.1L13.5 18.5L12.1 17.1zM17.1 1.3L18.5 2.7L17.1 4.1L15.7 2.7zM15.3 3.1L16.7 4.5L15.3 5.9L13.9 4.5zM17.1 4.9L18.5 6.3L17.1 7.7L15.7 6.3zM15.3 6.7L16.7 8.1L15.3 9.5L13.9 8.1zM17.1 8.5L18.5 9.9L17.1 11.3L15.7 9.9zM15.3 10.3L16.7 11.7L15.3 13.1L13.9 11.7zM17.1 12.1L18.5 13.5L17.1 14.9L15.7 13.5zM15.3 13.9L16.7 15.3L15.3 16.7L13.9 15.3z"/><path fill="#8a8a86" d="M2.7 12.1L4.1 13.5L2.7 14.9L1.3 13.5zM4.5 3.1L5.9 4.5L4.5 5.9L3.1 4.5zM6.3 12.1L7.7 13.5L6.3 14.9L4.9 13.5zM6.3 15.7L7.7 17.1L6.3 18.5L4.9 17.1zM8.1 3.1L9.5 4.5L8.1 5.9L6.7 4.5zM8.1 10.3L9.5 11.7L8.1 13.1L6.7 11.7zM9.9 15.7L11.3 17.1L9.9 18.5L8.5 17.1zM13.5 4.9L14.9 6.3L13.5 7.7L12.1 6.3zM11.7 10.3L13.1 11.7L11.7 13.1L10.3 11.7zM17.1 15.7L18.5 17.1L17.1 18.5L15.7 17.1z"/><path fill="#008284" d="M13.5 1.3L14.9 2.7L13.5 4.1L12.1 2.7zM13.5 8.5L14.9 9.9L13.5 11.3L12.1 9.9z"/></pattern><pattern id="pDenseY" width="18" height="18" patternUnits="userSpaceOnUse"><path fill="#ffd83a" d="M0.9 -0.6L2.4 0.9L0.9 2.4L-0.6 0.9zM0.9 3L2.4 4.5L0.9 6L-0.6 4.5zM0.9 6.6L2.4 8.1L0.9 9.6L-0.6 8.1zM2.7 8.4L4.2 9.9L2.7 11.4L1.2 9.9zM0.9 10.2L2.4 11.7L0.9 13.2L-0.6 11.7zM0.9 13.8L2.4 15.3L0.9 16.8L-0.6 15.3zM2.7 15.6L4.2 17.1L2.7 18.6L1.2 17.1zM4.5 -0.6L6 0.9L4.5 2.4L3 0.9zM6.3 1.2L7.8 2.7L6.3 4.2L4.8 2.7zM4.5 3L6 4.5L4.5 6L3 4.5zM6.3 4.8L7.8 6.3L6.3 7.8L4.8 6.3zM4.5 6.6L6 8.1L4.5 9.6L3 8.1zM6.3 8.4L7.8 9.9L6.3 11.4L4.8 9.9zM4.5 10.2L6 11.7L4.5 13.2L3 11.7zM4.5 13.8L6 15.3L4.5 16.8L3 15.3zM6.3 15.6L7.8 17.1L6.3 18.6L4.8 17.1zM8.1 -0.6L9.6 0.9L8.1 2.4L6.6 0.9zM9.9 1.2L11.4 2.7L9.9 4.2L8.4 2.7zM8.1 3L9.6 4.5L8.1 6L6.6 4.5zM9.9 4.8L11.4 6.3L9.9 7.8L8.4 6.3zM8.1 6.6L9.6 8.1L8.1 9.6L6.6 8.1zM9.9 8.4L11.4 9.9L9.9 11.4L8.4 9.9zM8.1 10.2L9.6 11.7L8.1 13.2L6.6 11.7zM9.9 12L11.4 13.5L9.9 15L8.4 13.5zM8.1 13.8L9.6 15.3L8.1 16.8L6.6 15.3zM9.9 15.6L11.4 17.1L9.9 18.6L8.4 17.1zM11.7 -0.6L13.2 0.9L11.7 2.4L10.2 0.9zM11.7 3L13.2 4.5L11.7 6L10.2 4.5zM11.7 6.6L13.2 8.1L11.7 9.6L10.2 8.1zM13.5 8.4L15 9.9L13.5 11.4L12 9.9zM11.7 10.2L13.2 11.7L11.7 13.2L10.2 11.7zM13.5 12L15 13.5L13.5 15L12 13.5zM11.7 13.8L13.2 15.3L11.7 16.8L10.2 15.3zM13.5 15.6L15 17.1L13.5 18.6L12 17.1zM15.3 -0.6L16.8 0.9L15.3 2.4L13.8 0.9zM17.1 1.2L18.6 2.7L17.1 4.2L15.6 2.7zM15.3 3L16.8 4.5L15.3 6L13.8 4.5zM17.1 4.8L18.6 6.3L17.1 7.8L15.6 6.3zM15.3 6.6L16.8 8.1L15.3 9.6L13.8 8.1zM15.3 10.2L16.8 11.7L15.3 13.2L13.8 11.7zM17.1 12L18.6 13.5L17.1 15L15.6 13.5zM15.3 13.8L16.8 15.3L15.3 16.8L13.8 15.3zM17.1 15.6L18.6 17.1L17.1 18.6L15.6 17.1z"/><path fill="#8a8a86" d="M2.7 1.2L4.2 2.7L2.7 4.2L1.2 2.7zM2.7 12L4.2 13.5L2.7 15L1.2 13.5zM17.1 8.4L18.6 9.9L17.1 11.4L15.6 9.9z"/></pattern><pattern id="pSparse" width="21.3" height="21.3" patternUnits="userSpaceOnUse"><path fill="#ffd83a" d="M1.8 0.3L3.3 1.8L1.8 3.3L0.3 1.8zM1.8 3.8L3.3 5.3L1.8 6.8L0.3 5.3zM1.8 7.4L3.3 8.9L1.8 10.4L0.3 8.9zM1.8 10.9L3.3 12.4L1.8 13.9L0.3 12.4zM1.8 18L3.3 19.5L1.8 21L0.3 19.5zM5.3 0.3L6.8 1.8L5.3 3.3L3.8 1.8zM5.3 7.4L6.8 8.9L5.3 10.4L3.8 8.9zM5.3 10.9L6.8 12.4L5.3 13.9L3.8 12.4zM5.3 18L6.8 19.5L5.3 21L3.8 19.5zM8.9 0.3L10.4 1.8L8.9 3.3L7.4 1.8zM8.9 3.8L10.4 5.3L8.9 6.8L7.4 5.3zM8.9 7.4L10.4 8.9L8.9 10.4L7.4 8.9zM8.9 10.9L10.4 12.4L8.9 13.9L7.4 12.4zM8.9 14.5L10.4 16L8.9 17.5L7.4 16zM8.9 18L10.4 19.5L8.9 21L7.4 19.5zM12.4 0.3L13.9 1.8L12.4 3.3L10.9 1.8zM12.4 3.8L13.9 5.3L12.4 6.8L10.9 5.3zM12.4 7.4L13.9 8.9L12.4 10.4L10.9 8.9zM12.4 10.9L13.9 12.4L12.4 13.9L10.9 12.4zM12.4 14.5L13.9 16L12.4 17.5L10.9 16zM12.4 18L13.9 19.5L12.4 21L10.9 19.5zM16 7.4L17.5 8.9L16 10.4L14.5 8.9zM16 10.9L17.5 12.4L16 13.9L14.5 12.4zM16 14.5L17.5 16L16 17.5L14.5 16zM19.5 0.3L21 1.8L19.5 3.3L18 1.8zM19.5 3.8L21 5.3L19.5 6.8L18 5.3zM19.5 7.4L21 8.9L19.5 10.4L18 8.9zM19.5 10.9L21 12.4L19.5 13.9L18 12.4zM19.5 14.5L21 16L19.5 17.5L18 16zM19.5 18L21 19.5L19.5 21L18 19.5z"/><path fill="#8a8a86" d="M1.8 14.5L3.3 16L1.8 17.5L0.3 16zM5.3 3.8L6.8 5.3L5.3 6.8L3.8 5.3zM16 0.3L17.5 1.8L16 3.3L14.5 1.8zM16 3.8L17.5 5.3L16 6.8L14.5 5.3zM16 18L17.5 19.5L16 21L14.5 19.5z"/></pattern><pattern id="pTeal" width="18" height="18" patternUnits="userSpaceOnUse"><path fill="#008284" d="M0.9 -0.1L1.9 0.9L0.9 1.9L-0.1 0.9zM2.7 1.7L3.7 2.7L2.7 3.7L1.7 2.7zM0.9 3.5L1.9 4.5L0.9 5.5L-0.1 4.5zM2.7 5.3L3.7 6.3L2.7 7.3L1.7 6.3zM0.9 7.1L1.9 8.1L0.9 9.1L-0.1 8.1zM2.7 8.9L3.7 9.9L2.7 10.9L1.7 9.9zM0.9 10.7L1.9 11.7L0.9 12.7L-0.1 11.7zM2.7 12.5L3.7 13.5L2.7 14.5L1.7 13.5zM0.9 14.3L1.9 15.3L0.9 16.3L-0.1 15.3zM2.7 16.1L3.7 17.1L2.7 18.1L1.7 17.1zM4.5 -0.1L5.5 0.9L4.5 1.9L3.5 0.9zM6.3 1.7L7.3 2.7L6.3 3.7L5.3 2.7zM4.5 3.5L5.5 4.5L4.5 5.5L3.5 4.5zM6.3 5.3L7.3 6.3L6.3 7.3L5.3 6.3zM4.5 7.1L5.5 8.1L4.5 9.1L3.5 8.1zM6.3 8.9L7.3 9.9L6.3 10.9L5.3 9.9zM4.5 10.7L5.5 11.7L4.5 12.7L3.5 11.7zM6.3 12.5L7.3 13.5L6.3 14.5L5.3 13.5zM4.5 14.3L5.5 15.3L4.5 16.3L3.5 15.3zM6.3 16.1L7.3 17.1L6.3 18.1L5.3 17.1zM8.1 -0.1L9.1 0.9L8.1 1.9L7.1 0.9zM9.9 1.7L10.9 2.7L9.9 3.7L8.9 2.7zM8.1 3.5L9.1 4.5L8.1 5.5L7.1 4.5zM9.9 5.3L10.9 6.3L9.9 7.3L8.9 6.3zM8.1 7.1L9.1 8.1L8.1 9.1L7.1 8.1zM9.9 8.9L10.9 9.9L9.9 10.9L8.9 9.9zM8.1 10.7L9.1 11.7L8.1 12.7L7.1 11.7zM9.9 12.5L10.9 13.5L9.9 14.5L8.9 13.5zM8.1 14.3L9.1 15.3L8.1 16.3L7.1 15.3zM9.9 16.1L10.9 17.1L9.9 18.1L8.9 17.1zM11.7 -0.1L12.7 0.9L11.7 1.9L10.7 0.9zM13.5 1.7L14.5 2.7L13.5 3.7L12.5 2.7zM11.7 3.5L12.7 4.5L11.7 5.5L10.7 4.5zM13.5 5.3L14.5 6.3L13.5 7.3L12.5 6.3zM11.7 7.1L12.7 8.1L11.7 9.1L10.7 8.1zM13.5 8.9L14.5 9.9L13.5 10.9L12.5 9.9zM11.7 10.7L12.7 11.7L11.7 12.7L10.7 11.7zM13.5 12.5L14.5 13.5L13.5 14.5L12.5 13.5zM11.7 14.3L12.7 15.3L11.7 16.3L10.7 15.3zM13.5 16.1L14.5 17.1L13.5 18.1L12.5 17.1zM15.3 -0.1L16.3 0.9L15.3 1.9L14.3 0.9zM17.1 1.7L18.1 2.7L17.1 3.7L16.1 2.7zM15.3 3.5L16.3 4.5L15.3 5.5L14.3 4.5zM17.1 5.3L18.1 6.3L17.1 7.3L16.1 6.3zM15.3 7.1L16.3 8.1L15.3 9.1L14.3 8.1zM17.1 8.9L18.1 9.9L17.1 10.9L16.1 9.9zM15.3 10.7L16.3 11.7L15.3 12.7L14.3 11.7zM17.1 12.5L18.1 13.5L17.1 14.5L16.1 13.5zM15.3 14.3L16.3 15.3L15.3 16.3L14.3 15.3z"/><path fill="#ffd83a" d="M17.1 16.1L18.1 17.1L17.1 18.1L16.1 17.1z"/></pattern><pattern id="pMix" width="18" height="18" patternUnits="userSpaceOnUse"><path fill="#8a8a86" d="M0.9 -0.6L2.4 0.9L0.9 2.4L-0.6 0.9zM0.9 10.2L2.4 11.7L0.9 13.2L-0.6 11.7zM2.7 12L4.2 13.5L2.7 15L1.2 13.5zM0.9 13.8L2.4 15.3L0.9 16.8L-0.6 15.3zM4.5 10.2L6 11.7L4.5 13.2L3 11.7zM6.3 15.6L7.8 17.1L6.3 18.6L4.8 17.1zM9.9 8.4L11.4 9.9L9.9 11.4L8.4 9.9zM8.1 13.8L9.6 15.3L8.1 16.8L6.6 15.3zM13.5 8.4L15 9.9L13.5 11.4L12 9.9zM13.5 12L15 13.5L13.5 15L12 13.5zM17.1 1.2L18.6 2.7L17.1 4.2L15.6 2.7zM17.1 4.8L18.6 6.3L17.1 7.8L15.6 6.3zM17.1 8.4L18.6 9.9L17.1 11.4L15.6 9.9zM15.3 10.2L16.8 11.7L15.3 13.2L13.8 11.7zM15.3 13.8L16.8 15.3L15.3 16.8L13.8 15.3zM17.1 15.6L18.6 17.1L17.1 18.6L15.6 17.1z"/><path fill="#ffd83a" d="M0.9 3L2.4 4.5L0.9 6L-0.6 4.5zM2.7 8.4L4.2 9.9L2.7 11.4L1.2 9.9zM2.7 15.6L4.2 17.1L2.7 18.6L1.2 17.1zM4.5 -0.6L6 0.9L4.5 2.4L3 0.9zM6.3 1.2L7.8 2.7L6.3 4.2L4.8 2.7zM4.5 3L6 4.5L4.5 6L3 4.5zM6.3 4.8L7.8 6.3L6.3 7.8L4.8 6.3zM4.5 6.6L6 8.1L4.5 9.6L3 8.1zM6.3 8.4L7.8 9.9L6.3 11.4L4.8 9.9zM6.3 12L7.8 13.5L6.3 15L4.8 13.5zM9.9 4.8L11.4 6.3L9.9 7.8L8.4 6.3zM8.1 6.6L9.6 8.1L8.1 9.6L6.6 8.1zM8.1 10.2L9.6 11.7L8.1 13.2L6.6 11.7zM9.9 12L11.4 13.5L9.9 15L8.4 13.5zM9.9 15.6L11.4 17.1L9.9 18.6L8.4 17.1zM11.7 -0.6L13.2 0.9L11.7 2.4L10.2 0.9zM11.7 3L13.2 4.5L11.7 6L10.2 4.5zM13.5 4.8L15 6.3L13.5 7.8L12 6.3zM11.7 6.6L13.2 8.1L11.7 9.6L10.2 8.1zM11.7 10.2L13.2 11.7L11.7 13.2L10.2 11.7zM11.7 13.8L13.2 15.3L11.7 16.8L10.2 15.3zM13.5 15.6L15 17.1L13.5 18.6L12 17.1zM15.3 -0.6L16.8 0.9L15.3 2.4L13.8 0.9zM15.3 3L16.8 4.5L15.3 6L13.8 4.5zM17.1 12L18.6 13.5L17.1 15L15.6 13.5z"/><path fill="#008284" d="M0.9 6.6L2.4 8.1L0.9 9.6L-0.6 8.1zM4.5 13.8L6 15.3L4.5 16.8L3 15.3zM8.1 -0.6L9.6 0.9L8.1 2.4L6.6 0.9zM9.9 1.2L11.4 2.7L9.9 4.2L8.4 2.7zM8.1 3L9.6 4.5L8.1 6L6.6 4.5zM13.5 1.2L15 2.7L13.5 4.2L12 2.7zM15.3 6.6L16.8 8.1L15.3 9.6L13.8 8.1z"/></pattern><pattern id="pGrid" width="18" height="18" patternUnits="userSpaceOnUse"><path fill="#ffd83a" d="M0 0.8h3v1.5h-3zM0.8 0h1.5v3h-1.5zM0 3.8h3v1.5h-3zM0.8 3h1.5v3h-1.5zM0 6.8h3v1.5h-3zM0.8 6h1.5v3h-1.5zM0 9.8h3v1.5h-3zM0.8 9h1.5v3h-1.5zM0 12.8h3v1.5h-3zM0.8 12h1.5v3h-1.5zM0 15.8h3v1.5h-3zM0.8 15h1.5v3h-1.5zM3 0.8h3v1.5h-3zM3.8 0h1.5v3h-1.5zM3 3.8h3v1.5h-3zM3.8 3h1.5v3h-1.5zM3 6.8h3v1.5h-3zM3.8 6h1.5v3h-1.5zM3 9.8h3v1.5h-3zM3.8 9h1.5v3h-1.5zM3 12.8h3v1.5h-3zM3.8 12h1.5v3h-1.5zM3 15.8h3v1.5h-3zM3.8 15h1.5v3h-1.5zM6 3.8h3v1.5h-3zM6.8 3h1.5v3h-1.5zM6 6.8h3v1.5h-3zM6.8 6h1.5v3h-1.5zM6 9.8h3v1.5h-3zM6.8 9h1.5v3h-1.5zM6 12.8h3v1.5h-3zM6.8 12h1.5v3h-1.5zM6 15.8h3v1.5h-3zM6.8 15h1.5v3h-1.5zM9 0.8h3v1.5h-3zM9.8 0h1.5v3h-1.5zM9 3.8h3v1.5h-3zM9.8 3h1.5v3h-1.5zM9 6.8h3v1.5h-3zM9.8 6h1.5v3h-1.5zM9 9.8h3v1.5h-3zM9.8 9h1.5v3h-1.5zM9 12.8h3v1.5h-3zM9.8 12h1.5v3h-1.5zM9 15.8h3v1.5h-3zM9.8 15h1.5v3h-1.5zM12 0.8h3v1.5h-3zM12.8 0h1.5v3h-1.5zM12 3.8h3v1.5h-3zM12.8 3h1.5v3h-1.5zM12 6.8h3v1.5h-3zM12.8 6h1.5v3h-1.5zM12 9.8h3v1.5h-3zM12.8 9h1.5v3h-1.5zM12 12.8h3v1.5h-3zM12.8 12h1.5v3h-1.5zM12 15.8h3v1.5h-3zM12.8 15h1.5v3h-1.5zM15 0.8h3v1.5h-3zM15.8 0h1.5v3h-1.5zM15 3.8h3v1.5h-3zM15.8 3h1.5v3h-1.5zM15 6.8h3v1.5h-3zM15.8 6h1.5v3h-1.5zM15 9.8h3v1.5h-3zM15.8 9h1.5v3h-1.5zM15 12.8h3v1.5h-3zM15.8 12h1.5v3h-1.5zM15 15.8h3v1.5h-3zM15.8 15h1.5v3h-1.5z"/><path fill="#008284" d="M6 0.8h3v1.5h-3zM6.8 0h1.5v3h-1.5z"/></pattern><pattern id="pGridM" width="18" height="18" patternUnits="userSpaceOnUse"><path fill="#ffd83a" d="M0 0.8h3v1.5h-3zM0.8 0h1.5v3h-1.5zM0 3.8h3v1.5h-3zM0.8 3h1.5v3h-1.5zM0 6.8h3v1.5h-3zM0.8 6h1.5v3h-1.5zM0 12.8h3v1.5h-3zM0.8 12h1.5v3h-1.5zM3 0.8h3v1.5h-3zM3.8 0h1.5v3h-1.5zM3 3.8h3v1.5h-3zM3.8 3h1.5v3h-1.5zM3 6.8h3v1.5h-3zM3.8 6h1.5v3h-1.5zM3 12.8h3v1.5h-3zM3.8 12h1.5v3h-1.5zM3 15.8h3v1.5h-3zM3.8 15h1.5v3h-1.5zM6 0.8h3v1.5h-3zM6.8 0h1.5v3h-1.5zM6 9.8h3v1.5h-3zM6.8 9h1.5v3h-1.5zM9 0.8h3v1.5h-3zM9.8 0h1.5v3h-1.5zM9 3.8h3v1.5h-3zM9.8 3h1.5v3h-1.5zM9 6.8h3v1.5h-3zM9.8 6h1.5v3h-1.5zM12 9.8h3v1.5h-3zM12.8 9h1.5v3h-1.5zM12 12.8h3v1.5h-3zM12.8 12h1.5v3h-1.5zM12 15.8h3v1.5h-3zM12.8 15h1.5v3h-1.5zM15 0.8h3v1.5h-3zM15.8 0h1.5v3h-1.5zM15 3.8h3v1.5h-3zM15.8 3h1.5v3h-1.5zM15 9.8h3v1.5h-3zM15.8 9h1.5v3h-1.5zM15 12.8h3v1.5h-3zM15.8 12h1.5v3h-1.5zM15 15.8h3v1.5h-3zM15.8 15h1.5v3h-1.5z"/><path fill="#8a8a86" d="M0 9.8h3v1.5h-3zM0.8 9h1.5v3h-1.5zM0 15.8h3v1.5h-3zM0.8 15h1.5v3h-1.5zM3 9.8h3v1.5h-3zM3.8 9h1.5v3h-1.5zM6 15.8h3v1.5h-3zM6.8 15h1.5v3h-1.5zM9 9.8h3v1.5h-3zM9.8 9h1.5v3h-1.5zM9 12.8h3v1.5h-3zM9.8 12h1.5v3h-1.5zM12 0.8h3v1.5h-3zM12.8 0h1.5v3h-1.5zM12 3.8h3v1.5h-3zM12.8 3h1.5v3h-1.5zM12 6.8h3v1.5h-3zM12.8 6h1.5v3h-1.5zM15 6.8h3v1.5h-3zM15.8 6h1.5v3h-1.5z"/><path fill="#008284" d="M6 3.8h3v1.5h-3zM6.8 3h1.5v3h-1.5zM6 6.8h3v1.5h-3zM6.8 6h1.5v3h-1.5zM6 12.8h3v1.5h-3zM6.8 12h1.5v3h-1.5zM9 15.8h3v1.5h-3zM9.8 15h1.5v3h-1.5z"/></pattern></defs><text transform="translate(672 304) rotate(-45)" font-family="Liberation Sans, sans-serif" font-size="16" fill="#e4e6da" stroke="#c9ccc0" stroke-width=".5" textLength="100" lengthAdjust="spacing">XZZ@XZZHK</text><text transform="translate(1122 304) rotate(-45)" font-family="Liberation Sans, sans-serif" font-size="16" fill="#e4e6da" stroke="#c9ccc0" stroke-width=".5" textLength="100" lengthAdjust="spacing">XZZ@XZZHK</text><text transform="translate(672 704) rotate(-45)" font-family="Liberation Sans, sans-serif" font-size="16" fill="#e4e6da" stroke="#c9ccc0" stroke-width=".5" textLength="100" lengthAdjust="spacing">XZZ@XZZHK</text><text transform="translate(1122 704) rotate(-45)" font-family="Liberation Sans, sans-serif" font-size="16" fill="#e4e6da" stroke="#c9ccc0" stroke-width=".5" textLength="100" lengthAdjust="spacing">XZZ@XZZHK</text><path d="M483.7 348.700H615L620.500 345.300H741.300Q743.300 345.300 743.300 347.300V363.800Q743.300 365.800 745.300 365.800H762.200Q765.200 365.800 765.200 368.800V414Q765.200 420 771.200 420H821.700Q827.700 420 827.700 414V351.700Q827.700 348.700 830.700 348.700H858.300Q861.300 348.700 861.300 351.700V419.700Q861.300 422.700 864.300 422.700H875L881.800 426.400H916.300L922.800 423H935.800V378.500Q935.800 375.500 938.800 375.500H952Q963.500 375.500 963.500 388V474H964.600V639.500Q964.600 642.500 961.600 642.500H918.100L913 647.200H896L890.900 642.500H521Q514.700 642.500 514.700 636V625.500A44.500 44.500 0 0 0 486 553.500H478Q466 550 463 535.600H445.300Q442.300 535.600 442.300 532.600V517Q445.400 514 445.400 509.400V437Q441.600 434 441.600 429V397.500A40 32.500 0 0 1 481.700 365V350.700Q481.700 348.700 483.700 348.700Z" fill="#006a33"/><path d="M992.700 386Q992.700 374.600 1004 374.600H1015.200Q1018.200 374.600 1018.200 377.600V419.300Q1018.200 422.300 1021.200 422.300H1033L1039.700 425.500H1075L1081.600 422.300H1093.700V350.600Q1093.700 347.600 1096.700 347.600H1124.300Q1127.300 347.600 1127.300 350.600V411Q1127.300 419 1135.300 419H1183.700Q1189.700 419 1189.700 413V368.800Q1189.700 365.800 1192.700 365.800H1210.800V346.400Q1210.800 344.400 1212.800 344.400H1334.300L1340.900 348.100H1471.200Q1473.200 348.100 1473.200 350.100V362Q1473.200 364.500 1476 364.500H1483A30 30 0 0 1 1513 394.500V429.400L1509.500 433V510.500L1512.300 514.500V531.500Q1512.300 535.200 1508.500 535.200H1495Q1492 548 1482 550.300A46 46 0 0 0 1439.100 622.600V636Q1439.100 642 1433 642H1392L1390 643.200H1063.900L1060 646.100H1040L1036.600 642.600H994.400Q989.400 642.600 989.400 637.600V480L992.700 471Z" fill="#006a33"/><g shape-rendering="crispEdges"><rect x="537.2" y="391.9" width="12.5" height="12.1" fill="url(#pGrid)"/><path fill="#8a8a86" d="M628 433h1v1h1v1h-1v1h-1v-1h-1v-1h1zM628 437h1v1h1v1h-1v1h-1v-1h-1v-1h1zM628 445h1v1h1v1h-1v1h-1v-1h-1v-1h1zM626 459h1v1h1v1h-1v1h-1v-1h-1v-1h1zM626 463h1v1h1v1h-1v1h-1v-1h-1v-1h1zM628 465h1v1h1v1h-1v1h-1v-1h-1v-1h1zM626 475h1v1h1v1h-1v1h-1v-1h-1v-1h1zM628 489h1v1h1v1h-1v1h-1v-1h-1v-1h1zM626 491h1v1h1v1h-1v1h-1v-1h-1v-1h1zM626 511h1v1h1v1h-1v1h-1v-1h-1v-1h1zM630 435h1v1h1v1h-1v1h-1v-1h-1v-1h1zM630 439h1v1h1v1h-1v1h-1v-1h-1v-1h1zM630 451h1v1h1v1h-1v1h-1v-1h-1v-1h1zM632 469h1v1h1v1h-1v1h-1v-1h-1v-1h1zM632 481h1v1h1v1h-1v1h-1v-1h-1v-1h1zM634 435h1v1h1v1h-1v1h-1v-1h-1v-1h1zM634 467h1v1h1v1h-1v1h-1v-1h-1v-1h1zM636 509h1v1h1v1h-1v1h-1v-1h-1v-1h1zM636 525h1v1h1v1h-1v1h-1v-1h-1v-1h1zM638 431h1v1h1v1h-1v1h-1v-1h-1v-1h1zM640 449h1v1h1v1h-1v1h-1v-1h-1v-1h1zM638 495h1v1h1v1h-1v1h-1v-1h-1v-1h1zM642 455h1v1h1v1h-1v1h-1v-1h-1v-1h1zM644 465h1v1h1v1h-1v1h-1v-1h-1v-1h1zM644 469h1v1h1v1h-1v1h-1v-1h-1v-1h1zM644 477h1v1h1v1h-1v1h-1v-1h-1v-1h1zM644 505h1v1h1v1h-1v1h-1v-1h-1v-1h1zM642 507h1v1h1v1h-1v1h-1v-1h-1v-1h1zM642 523h1v1h1v1h-1v1h-1v-1h-1v-1h1zM646 431h1v1h1v1h-1v1h-1v-1h-1v-1h1zM646 439h1v1h1v1h-1v1h-1v-1h-1v-1h1zM648 441h1v1h1v1h-1v1h-1v-1h-1v-1h1zM646 463h1v1h1v1h-1v1h-1v-1h-1v-1h1zM646 471h1v1h1v1h-1v1h-1v-1h-1v-1h1zM648 477h1v1h1v1h-1v1h-1v-1h-1v-1h1zM646 511h1v1h1v1h-1v1h-1v-1h-1v-1h1zM652 437h1v1h1v1h-1v1h-1v-1h-1v-1h1zM650 439h1v1h1v1h-1v1h-1v-1h-1v-1h1zM650 443h1v1h1v1h-1v1h-1v-1h-1v-1h1zM652 449h1v1h1v1h-1v1h-1v-1h-1v-1h1zM652 461h1v1h1v1h-1v1h-1v-1h-1v-1h1zM650 467h1v1h1v1h-1v1h-1v-1h-1v-1h1zM652 473h1v1h1v1h-1v1h-1v-1h-1v-1h1zM650 475h1v1h1v1h-1v1h-1v-1h-1v-1h1zM652 489h1v1h1v1h-1v1h-1v-1h-1v-1h1zM652 497h1v1h1v1h-1v1h-1v-1h-1v-1h1zM650 499h1v1h1v1h-1v1h-1v-1h-1v-1h1zM652 513h1v1h1v1h-1v1h-1v-1h-1v-1h1zM650 515h1v1h1v1h-1v1h-1v-1h-1v-1h1zM650 519h1v1h1v1h-1v1h-1v-1h-1v-1h1zM652 529h1v1h1v1h-1v1h-1v-1h-1v-1h1zM654 447h1v1h1v1h-1v1h-1v-1h-1v-1h1zM654 463h1v1h1v1h-1v1h-1v-1h-1v-1h1zM654 467h1v1h1v1h-1v1h-1v-1h-1v-1h1zM656 469h1v1h1v1h-1v1h-1v-1h-1v-1h1zM654 471h1v1h1v1h-1v1h-1v-1h-1v-1h1zM656 473h1v1h1v1h-1v1h-1v-1h-1v-1h1zM656 477h1v1h1v1h-1v1h-1v-1h-1v-1h1zM654 491h1v1h1v1h-1v1h-1v-1h-1v-1h1zM656 493h1v1h1v1h-1v1h-1v-1h-1v-1h1zM654 499h1v1h1v1h-1v1h-1v-1h-1v-1h1zM654 511h1v1h1v1h-1v1h-1v-1h-1v-1h1zM658 435h1v1h1v1h-1v1h-1v-1h-1v-1h1zM660 445h1v1h1v1h-1v1h-1v-1h-1v-1h1zM660 461h1v1h1v1h-1v1h-1v-1h-1v-1h1zM658 463h1v1h1v1h-1v1h-1v-1h-1v-1h1zM660 465h1v1h1v1h-1v1h-1v-1h-1v-1h1zM660 469h1v1h1v1h-1v1h-1v-1h-1v-1h1zM658 471h1v1h1v1h-1v1h-1v-1h-1v-1h1zM658 491h1v1h1v1h-1v1h-1v-1h-1v-1h1zM658 495h1v1h1v1h-1v1h-1v-1h-1v-1h1zM658 515h1v1h1v1h-1v1h-1v-1h-1v-1h1zM658 523h1v1h1v1h-1v1h-1v-1h-1v-1h1zM664 457h1v1h1v1h-1v1h-1v-1h-1v-1h1zM662 471h1v1h1v1h-1v1h-1v-1h-1v-1h1zM662 479h1v1h1v1h-1v1h-1v-1h-1v-1h1zM662 483h1v1h1v1h-1v1h-1v-1h-1v-1h1zM664 485h1v1h1v1h-1v1h-1v-1h-1v-1h1zM662 495h1v1h1v1h-1v1h-1v-1h-1v-1h1zM664 497h1v1h1v1h-1v1h-1v-1h-1v-1h1zM664 509h1v1h1v1h-1v1h-1v-1h-1v-1h1zM670 431h1v1h1v1h-1v1h-1v-1h-1v-1h1zM672 433h1v1h1v1h-1v1h-1v-1h-1v-1h1zM670 523h1v1h1v1h-1v1h-1v-1h-1v-1h1zM672 525h1v1h1v1h-1v1h-1v-1h-1v-1h1zM674 431h1v1h1v1h-1v1h-1v-1h-1v-1h1zM676 445h1v1h1v1h-1v1h-1v-1h-1v-1h1zM674 519h1v1h1v1h-1v1h-1v-1h-1v-1h1zM678 439h1v1h1v1h-1v1h-1v-1h-1v-1h1zM680 445h1v1h1v1h-1v1h-1v-1h-1v-1h1zM680 521h1v1h1v1h-1v1h-1v-1h-1v-1h1zM680 525h1v1h1v1h-1v1h-1v-1h-1v-1h1zM682 439h1v1h1v1h-1v1h-1v-1h-1v-1h1zM684 441h1v1h1v1h-1v1h-1v-1h-1v-1h1zM682 447h1v1h1v1h-1v1h-1v-1h-1v-1h1zM684 517h1v1h1v1h-1v1h-1v-1h-1v-1h1zM684 529h1v1h1v1h-1v1h-1v-1h-1v-1h1zM686 435h1v1h1v1h-1v1h-1v-1h-1v-1h1zM688 521h1v1h1v1h-1v1h-1v-1h-1v-1h1zM686 523h1v1h1v1h-1v1h-1v-1h-1v-1h1zM690 515h1v1h1v1h-1v1h-1v-1h-1v-1h1zM696 525h1v1h1v1h-1v1h-1v-1h-1v-1h1zM694 527h1v1h1v1h-1v1h-1v-1h-1v-1h1zM702 431h1v1h1v1h-1v1h-1v-1h-1v-1h1zM704 525h1v1h1v1h-1v1h-1v-1h-1v-1h1zM706 439h1v1h1v1h-1v1h-1v-1h-1v-1h1zM708 525h1v1h1v1h-1v1h-1v-1h-1v-1h1zM710 459h1v1h1v1h-1v1h-1v-1h-1v-1h1zM712 465h1v1h1v1h-1v1h-1v-1h-1v-1h1zM712 473h1v1h1v1h-1v1h-1v-1h-1v-1h1zM712 477h1v1h1v1h-1v1h-1v-1h-1v-1h1zM712 489h1v1h1v1h-1v1h-1v-1h-1v-1h1zM714 435h1v1h1v1h-1v1h-1v-1h-1v-1h1zM716 441h1v1h1v1h-1v1h-1v-1h-1v-1h1zM716 449h1v1h1v1h-1v1h-1v-1h-1v-1h1zM714 467h1v1h1v1h-1v1h-1v-1h-1v-1h1zM714 475h1v1h1v1h-1v1h-1v-1h-1v-1h1zM716 481h1v1h1v1h-1v1h-1v-1h-1v-1h1zM714 495h1v1h1v1h-1v1h-1v-1h-1v-1h1zM714 503h1v1h1v1h-1v1h-1v-1h-1v-1h1zM716 513h1v1h1v1h-1v1h-1v-1h-1v-1h1zM714 515h1v1h1v1h-1v1h-1v-1h-1v-1h1zM720 441h1v1h1v1h-1v1h-1v-1h-1v-1h1zM720 465h1v1h1v1h-1v1h-1v-1h-1v-1h1zM720 489h1v1h1v1h-1v1h-1v-1h-1v-1h1zM720 497h1v1h1v1h-1v1h-1v-1h-1v-1h1zM720 505h1v1h1v1h-1v1h-1v-1h-1v-1h1zM724 437h1v1h1v1h-1v1h-1v-1h-1v-1h1zM722 447h1v1h1v1h-1v1h-1v-1h-1v-1h1zM724 457h1v1h1v1h-1v1h-1v-1h-1v-1h1zM722 459h1v1h1v1h-1v1h-1v-1h-1v-1h1zM722 483h1v1h1v1h-1v1h-1v-1h-1v-1h1zM722 487h1v1h1v1h-1v1h-1v-1h-1v-1h1zM724 493h1v1h1v1h-1v1h-1v-1h-1v-1h1zM724 505h1v1h1v1h-1v1h-1v-1h-1v-1h1zM724 513h1v1h1v1h-1v1h-1v-1h-1v-1h1zM722 527h1v1h1v1h-1v1h-1v-1h-1v-1h1z"/><path fill="#ffd83a" d="M626 435h1v1h1v1h-1v1h-1v-1h-1v-1h1zM628 441h1v1h1v1h-1v1h-1v-1h-1v-1h1zM626 443h1v1h1v1h-1v1h-1v-1h-1v-1h1zM626 447h1v1h1v1h-1v1h-1v-1h-1v-1h1zM626 451h1v1h1v1h-1v1h-1v-1h-1v-1h1zM628 453h1v1h1v1h-1v1h-1v-1h-1v-1h1zM626 455h1v1h1v1h-1v1h-1v-1h-1v-1h1zM628 457h1v1h1v1h-1v1h-1v-1h-1v-1h1zM628 461h1v1h1v1h-1v1h-1v-1h-1v-1h1zM626 467h1v1h1v1h-1v1h-1v-1h-1v-1h1zM628 469h1v1h1v1h-1v1h-1v-1h-1v-1h1zM626 471h1v1h1v1h-1v1h-1v-1h-1v-1h1zM628 473h1v1h1v1h-1v1h-1v-1h-1v-1h1zM628 481h1v1h1v1h-1v1h-1v-1h-1v-1h1zM628 485h1v1h1v1h-1v1h-1v-1h-1v-1h1zM626 487h1v1h1v1h-1v1h-1v-1h-1v-1h1zM628 493h1v1h1v1h-1v1h-1v-1h-1v-1h1zM626 495h1v1h1v1h-1v1h-1v-1h-1v-1h1zM628 497h1v1h1v1h-1v1h-1v-1h-1v-1h1zM626 499h1v1h1v1h-1v1h-1v-1h-1v-1h1zM628 501h1v1h1v1h-1v1h-1v-1h-1v-1h1zM626 503h1v1h1v1h-1v1h-1v-1h-1v-1h1zM628 505h1v1h1v1h-1v1h-1v-1h-1v-1h1zM626 507h1v1h1v1h-1v1h-1v-1h-1v-1h1zM628 509h1v1h1v1h-1v1h-1v-1h-1v-1h1zM628 513h1v1h1v1h-1v1h-1v-1h-1v-1h1zM626 515h1v1h1v1h-1v1h-1v-1h-1v-1h1zM628 517h1v1h1v1h-1v1h-1v-1h-1v-1h1zM626 519h1v1h1v1h-1v1h-1v-1h-1v-1h1zM628 521h1v1h1v1h-1v1h-1v-1h-1v-1h1zM626 523h1v1h1v1h-1v1h-1v-1h-1v-1h1zM628 525h1v1h1v1h-1v1h-1v-1h-1v-1h1zM626 527h1v1h1v1h-1v1h-1v-1h-1v-1h1zM628 529h1v1h1v1h-1v1h-1v-1h-1v-1h1zM630 431h1v1h1v1h-1v1h-1v-1h-1v-1h1zM632 433h1v1h1v1h-1v1h-1v-1h-1v-1h1zM632 445h1v1h1v1h-1v1h-1v-1h-1v-1h1zM630 447h1v1h1v1h-1v1h-1v-1h-1v-1h1zM632 449h1v1h1v1h-1v1h-1v-1h-1v-1h1zM632 453h1v1h1v1h-1v1h-1v-1h-1v-1h1zM630 455h1v1h1v1h-1v1h-1v-1h-1v-1h1zM632 457h1v1h1v1h-1v1h-1v-1h-1v-1h1zM630 459h1v1h1v1h-1v1h-1v-1h-1v-1h1zM630 463h1v1h1v1h-1v1h-1v-1h-1v-1h1zM632 465h1v1h1v1h-1v1h-1v-1h-1v-1h1zM630 467h1v1h1v1h-1v1h-1v-1h-1v-1h1zM630 471h1v1h1v1h-1v1h-1v-1h-1v-1h1zM630 475h1v1h1v1h-1v1h-1v-1h-1v-1h1zM630 479h1v1h1v1h-1v1h-1v-1h-1v-1h1zM630 483h1v1h1v1h-1v1h-1v-1h-1v-1h1zM632 485h1v1h1v1h-1v1h-1v-1h-1v-1h1zM630 491h1v1h1v1h-1v1h-1v-1h-1v-1h1zM632 493h1v1h1v1h-1v1h-1v-1h-1v-1h1zM630 495h1v1h1v1h-1v1h-1v-1h-1v-1h1zM632 497h1v1h1v1h-1v1h-1v-1h-1v-1h1zM630 499h1v1h1v1h-1v1h-1v-1h-1v-1h1zM632 501h1v1h1v1h-1v1h-1v-1h-1v-1h1zM630 503h1v1h1v1h-1v1h-1v-1h-1v-1h1zM632 505h1v1h1v1h-1v1h-1v-1h-1v-1h1zM630 507h1v1h1v1h-1v1h-1v-1h-1v-1h1zM632 509h1v1h1v1h-1v1h-1v-1h-1v-1h1zM630 511h1v1h1v1h-1v1h-1v-1h-1v-1h1zM632 513h1v1h1v1h-1v1h-1v-1h-1v-1h1zM630 515h1v1h1v1h-1v1h-1v-1h-1v-1h1zM632 517h1v1h1v1h-1v1h-1v-1h-1v-1h1zM630 519h1v1h1v1h-1v1h-1v-1h-1v-1h1zM632 521h1v1h1v1h-1v1h-1v-1h-1v-1h1zM630 523h1v1h1v1h-1v1h-1v-1h-1v-1h1zM630 527h1v1h1v1h-1v1h-1v-1h-1v-1h1zM632 529h1v1h1v1h-1v1h-1v-1h-1v-1h1zM634 431h1v1h1v1h-1v1h-1v-1h-1v-1h1zM636 433h1v1h1v1h-1v1h-1v-1h-1v-1h1zM636 437h1v1h1v1h-1v1h-1v-1h-1v-1h1zM634 439h1v1h1v1h-1v1h-1v-1h-1v-1h1zM636 441h1v1h1v1h-1v1h-1v-1h-1v-1h1zM634 443h1v1h1v1h-1v1h-1v-1h-1v-1h1zM636 445h1v1h1v1h-1v1h-1v-1h-1v-1h1zM634 447h1v1h1v1h-1v1h-1v-1h-1v-1h1zM636 449h1v1h1v1h-1v1h-1v-1h-1v-1h1zM634 451h1v1h1v1h-1v1h-1v-1h-1v-1h1zM636 453h1v1h1v1h-1v1h-1v-1h-1v-1h1zM634 455h1v1h1v1h-1v1h-1v-1h-1v-1h1zM636 457h1v1h1v1h-1v1h-1v-1h-1v-1h1zM634 459h1v1h1v1h-1v1h-1v-1h-1v-1h1zM636 461h1v1h1v1h-1v1h-1v-1h-1v-1h1zM634 463h1v1h1v1h-1v1h-1v-1h-1v-1h1zM636 465h1v1h1v1h-1v1h-1v-1h-1v-1h1zM636 469h1v1h1v1h-1v1h-1v-1h-1v-1h1zM634 471h1v1h1v1h-1v1h-1v-1h-1v-1h1zM636 481h1v1h1v1h-1v1h-1v-1h-1v-1h1zM634 483h1v1h1v1h-1v1h-1v-1h-1v-1h1zM636 485h1v1h1v1h-1v1h-1v-1h-1v-1h1zM634 487h1v1h1v1h-1v1h-1v-1h-1v-1h1zM636 489h1v1h1v1h-1v1h-1v-1h-1v-1h1zM634 491h1v1h1v1h-1v1h-1v-1h-1v-1h1zM634 495h1v1h1v1h-1v1h-1v-1h-1v-1h1zM636 497h1v1h1v1h-1v1h-1v-1h-1v-1h1zM636 501h1v1h1v1h-1v1h-1v-1h-1v-1h1zM634 503h1v1h1v1h-1v1h-1v-1h-1v-1h1zM636 505h1v1h1v1h-1v1h-1v-1h-1v-1h1zM634 507h1v1h1v1h-1v1h-1v-1h-1v-1h1zM636 513h1v1h1v1h-1v1h-1v-1h-1v-1h1zM634 515h1v1h1v1h-1v1h-1v-1h-1v-1h1zM636 517h1v1h1v1h-1v1h-1v-1h-1v-1h1zM634 519h1v1h1v1h-1v1h-1v-1h-1v-1h1zM636 521h1v1h1v1h-1v1h-1v-1h-1v-1h1zM634 523h1v1h1v1h-1v1h-1v-1h-1v-1h1zM634 527h1v1h1v1h-1v1h-1v-1h-1v-1h1zM636 529h1v1h1v1h-1v1h-1v-1h-1v-1h1zM640 433h1v1h1v1h-1v1h-1v-1h-1v-1h1zM638 435h1v1h1v1h-1v1h-1v-1h-1v-1h1zM640 437h1v1h1v1h-1v1h-1v-1h-1v-1h1zM638 439h1v1h1v1h-1v1h-1v-1h-1v-1h1zM640 441h1v1h1v1h-1v1h-1v-1h-1v-1h1zM638 443h1v1h1v1h-1v1h-1v-1h-1v-1h1zM640 445h1v1h1v1h-1v1h-1v-1h-1v-1h1zM638 447h1v1h1v1h-1v1h-1v-1h-1v-1h1zM638 451h1v1h1v1h-1v1h-1v-1h-1v-1h1zM640 453h1v1h1v1h-1v1h-1v-1h-1v-1h1zM638 455h1v1h1v1h-1v1h-1v-1h-1v-1h1zM640 457h1v1h1v1h-1v1h-1v-1h-1v-1h1zM638 459h1v1h1v1h-1v1h-1v-1h-1v-1h1zM640 461h1v1h1v1h-1v1h-1v-1h-1v-1h1zM638 463h1v1h1v1h-1v1h-1v-1h-1v-1h1zM640 465h1v1h1v1h-1v1h-1v-1h-1v-1h1zM638 467h1v1h1v1h-1v1h-1v-1h-1v-1h1zM640 469h1v1h1v1h-1v1h-1v-1h-1v-1h1zM640 473h1v1h1v1h-1v1h-1v-1h-1v-1h1zM638 475h1v1h1v1h-1v1h-1v-1h-1v-1h1zM640 477h1v1h1v1h-1v1h-1v-1h-1v-1h1zM638 479h1v1h1v1h-1v1h-1v-1h-1v-1h1zM640 481h1v1h1v1h-1v1h-1v-1h-1v-1h1zM638 483h1v1h1v1h-1v1h-1v-1h-1v-1h1zM640 485h1v1h1v1h-1v1h-1v-1h-1v-1h1zM640 489h1v1h1v1h-1v1h-1v-1h-1v-1h1zM638 491h1v1h1v1h-1v1h-1v-1h-1v-1h1zM640 497h1v1h1v1h-1v1h-1v-1h-1v-1h1zM638 499h1v1h1v1h-1v1h-1v-1h-1v-1h1zM640 501h1v1h1v1h-1v1h-1v-1h-1v-1h1zM638 503h1v1h1v1h-1v1h-1v-1h-1v-1h1zM640 505h1v1h1v1h-1v1h-1v-1h-1v-1h1zM638 507h1v1h1v1h-1v1h-1v-1h-1v-1h1zM640 509h1v1h1v1h-1v1h-1v-1h-1v-1h1zM638 511h1v1h1v1h-1v1h-1v-1h-1v-1h1zM640 513h1v1h1v1h-1v1h-1v-1h-1v-1h1zM638 515h1v1h1v1h-1v1h-1v-1h-1v-1h1zM640 517h1v1h1v1h-1v1h-1v-1h-1v-1h1zM638 519h1v1h1v1h-1v1h-1v-1h-1v-1h1zM640 521h1v1h1v1h-1v1h-1v-1h-1v-1h1zM638 523h1v1h1v1h-1v1h-1v-1h-1v-1h1zM640 525h1v1h1v1h-1v1h-1v-1h-1v-1h1zM638 527h1v1h1v1h-1v1h-1v-1h-1v-1h1zM640 529h1v1h1v1h-1v1h-1v-1h-1v-1h1zM642 431h1v1h1v1h-1v1h-1v-1h-1v-1h1zM644 433h1v1h1v1h-1v1h-1v-1h-1v-1h1zM642 435h1v1h1v1h-1v1h-1v-1h-1v-1h1zM644 437h1v1h1v1h-1v1h-1v-1h-1v-1h1zM642 439h1v1h1v1h-1v1h-1v-1h-1v-1h1zM644 441h1v1h1v1h-1v1h-1v-1h-1v-1h1zM644 445h1v1h1v1h-1v1h-1v-1h-1v-1h1zM642 447h1v1h1v1h-1v1h-1v-1h-1v-1h1zM644 449h1v1h1v1h-1v1h-1v-1h-1v-1h1zM642 451h1v1h1v1h-1v1h-1v-1h-1v-1h1zM644 453h1v1h1v1h-1v1h-1v-1h-1v-1h1zM644 457h1v1h1v1h-1v1h-1v-1h-1v-1h1zM642 459h1v1h1v1h-1v1h-1v-1h-1v-1h1zM644 461h1v1h1v1h-1v1h-1v-1h-1v-1h1zM642 463h1v1h1v1h-1v1h-1v-1h-1v-1h1zM642 467h1v1h1v1h-1v1h-1v-1h-1v-1h1zM642 471h1v1h1v1h-1v1h-1v-1h-1v-1h1zM644 473h1v1h1v1h-1v1h-1v-1h-1v-1h1zM642 475h1v1h1v1h-1v1h-1v-1h-1v-1h1zM642 479h1v1h1v1h-1v1h-1v-1h-1v-1h1zM644 481h1v1h1v1h-1v1h-1v-1h-1v-1h1zM642 483h1v1h1v1h-1v1h-1v-1h-1v-1h1zM644 485h1v1h1v1h-1v1h-1v-1h-1v-1h1zM642 487h1v1h1v1h-1v1h-1v-1h-1v-1h1zM644 489h1v1h1v1h-1v1h-1v-1h-1v-1h1zM644 493h1v1h1v1h-1v1h-1v-1h-1v-1h1zM642 495h1v1h1v1h-1v1h-1v-1h-1v-1h1zM644 497h1v1h1v1h-1v1h-1v-1h-1v-1h1zM642 499h1v1h1v1h-1v1h-1v-1h-1v-1h1zM642 503h1v1h1v1h-1v1h-1v-1h-1v-1h1zM644 509h1v1h1v1h-1v1h-1v-1h-1v-1h1zM642 511h1v1h1v1h-1v1h-1v-1h-1v-1h1zM644 513h1v1h1v1h-1v1h-1v-1h-1v-1h1zM642 515h1v1h1v1h-1v1h-1v-1h-1v-1h1zM644 517h1v1h1v1h-1v1h-1v-1h-1v-1h1zM642 519h1v1h1v1h-1v1h-1v-1h-1v-1h1zM644 521h1v1h1v1h-1v1h-1v-1h-1v-1h1zM644 525h1v1h1v1h-1v1h-1v-1h-1v-1h1zM642 527h1v1h1v1h-1v1h-1v-1h-1v-1h1zM644 529h1v1h1v1h-1v1h-1v-1h-1v-1h1zM648 433h1v1h1v1h-1v1h-1v-1h-1v-1h1zM646 435h1v1h1v1h-1v1h-1v-1h-1v-1h1zM648 437h1v1h1v1h-1v1h-1v-1h-1v-1h1zM648 445h1v1h1v1h-1v1h-1v-1h-1v-1h1zM646 447h1v1h1v1h-1v1h-1v-1h-1v-1h1zM648 449h1v1h1v1h-1v1h-1v-1h-1v-1h1zM646 451h1v1h1v1h-1v1h-1v-1h-1v-1h1zM648 461h1v1h1v1h-1v1h-1v-1h-1v-1h1zM646 467h1v1h1v1h-1v1h-1v-1h-1v-1h1zM648 473h1v1h1v1h-1v1h-1v-1h-1v-1h1zM646 475h1v1h1v1h-1v1h-1v-1h-1v-1h1zM648 489h1v1h1v1h-1v1h-1v-1h-1v-1h1zM646 491h1v1h1v1h-1v1h-1v-1h-1v-1h1zM648 493h1v1h1v1h-1v1h-1v-1h-1v-1h1zM646 495h1v1h1v1h-1v1h-1v-1h-1v-1h1zM648 513h1v1h1v1h-1v1h-1v-1h-1v-1h1zM646 515h1v1h1v1h-1v1h-1v-1h-1v-1h1zM648 517h1v1h1v1h-1v1h-1v-1h-1v-1h1zM646 519h1v1h1v1h-1v1h-1v-1h-1v-1h1zM648 521h1v1h1v1h-1v1h-1v-1h-1v-1h1zM646 523h1v1h1v1h-1v1h-1v-1h-1v-1h1zM648 525h1v1h1v1h-1v1h-1v-1h-1v-1h1zM646 527h1v1h1v1h-1v1h-1v-1h-1v-1h1zM648 529h1v1h1v1h-1v1h-1v-1h-1v-1h1zM650 431h1v1h1v1h-1v1h-1v-1h-1v-1h1zM652 433h1v1h1v1h-1v1h-1v-1h-1v-1h1zM650 435h1v1h1v1h-1v1h-1v-1h-1v-1h1zM652 445h1v1h1v1h-1v1h-1v-1h-1v-1h1zM650 447h1v1h1v1h-1v1h-1v-1h-1v-1h1zM650 463h1v1h1v1h-1v1h-1v-1h-1v-1h1zM652 465h1v1h1v1h-1v1h-1v-1h-1v-1h1zM652 469h1v1h1v1h-1v1h-1v-1h-1v-1h1zM650 471h1v1h1v1h-1v1h-1v-1h-1v-1h1zM652 477h1v1h1v1h-1v1h-1v-1h-1v-1h1zM650 491h1v1h1v1h-1v1h-1v-1h-1v-1h1zM652 493h1v1h1v1h-1v1h-1v-1h-1v-1h1zM650 495h1v1h1v1h-1v1h-1v-1h-1v-1h1zM650 511h1v1h1v1h-1v1h-1v-1h-1v-1h1zM652 517h1v1h1v1h-1v1h-1v-1h-1v-1h1zM650 523h1v1h1v1h-1v1h-1v-1h-1v-1h1zM650 527h1v1h1v1h-1v1h-1v-1h-1v-1h1zM654 431h1v1h1v1h-1v1h-1v-1h-1v-1h1zM656 433h1v1h1v1h-1v1h-1v-1h-1v-1h1zM654 435h1v1h1v1h-1v1h-1v-1h-1v-1h1zM656 437h1v1h1v1h-1v1h-1v-1h-1v-1h1zM654 439h1v1h1v1h-1v1h-1v-1h-1v-1h1zM656 441h1v1h1v1h-1v1h-1v-1h-1v-1h1zM654 443h1v1h1v1h-1v1h-1v-1h-1v-1h1zM656 445h1v1h1v1h-1v1h-1v-1h-1v-1h1zM656 449h1v1h1v1h-1v1h-1v-1h-1v-1h1zM656 461h1v1h1v1h-1v1h-1v-1h-1v-1h1zM656 465h1v1h1v1h-1v1h-1v-1h-1v-1h1zM656 489h1v1h1v1h-1v1h-1v-1h-1v-1h1zM654 495h1v1h1v1h-1v1h-1v-1h-1v-1h1zM656 497h1v1h1v1h-1v1h-1v-1h-1v-1h1zM654 515h1v1h1v1h-1v1h-1v-1h-1v-1h1zM656 517h1v1h1v1h-1v1h-1v-1h-1v-1h1zM654 519h1v1h1v1h-1v1h-1v-1h-1v-1h1zM656 521h1v1h1v1h-1v1h-1v-1h-1v-1h1zM654 523h1v1h1v1h-1v1h-1v-1h-1v-1h1zM654 527h1v1h1v1h-1v1h-1v-1h-1v-1h1zM656 529h1v1h1v1h-1v1h-1v-1h-1v-1h1zM658 431h1v1h1v1h-1v1h-1v-1h-1v-1h1zM660 433h1v1h1v1h-1v1h-1v-1h-1v-1h1zM660 437h1v1h1v1h-1v1h-1v-1h-1v-1h1zM658 439h1v1h1v1h-1v1h-1v-1h-1v-1h1zM660 441h1v1h1v1h-1v1h-1v-1h-1v-1h1zM658 443h1v1h1v1h-1v1h-1v-1h-1v-1h1zM658 447h1v1h1v1h-1v1h-1v-1h-1v-1h1zM660 449h1v1h1v1h-1v1h-1v-1h-1v-1h1zM658 467h1v1h1v1h-1v1h-1v-1h-1v-1h1zM658 475h1v1h1v1h-1v1h-1v-1h-1v-1h1zM660 477h1v1h1v1h-1v1h-1v-1h-1v-1h1zM660 493h1v1h1v1h-1v1h-1v-1h-1v-1h1zM660 497h1v1h1v1h-1v1h-1v-1h-1v-1h1zM658 499h1v1h1v1h-1v1h-1v-1h-1v-1h1zM660 513h1v1h1v1h-1v1h-1v-1h-1v-1h1zM660 517h1v1h1v1h-1v1h-1v-1h-1v-1h1zM658 519h1v1h1v1h-1v1h-1v-1h-1v-1h1zM660 521h1v1h1v1h-1v1h-1v-1h-1v-1h1zM660 525h1v1h1v1h-1v1h-1v-1h-1v-1h1zM658 527h1v1h1v1h-1v1h-1v-1h-1v-1h1zM660 529h1v1h1v1h-1v1h-1v-1h-1v-1h1zM662 431h1v1h1v1h-1v1h-1v-1h-1v-1h1zM664 433h1v1h1v1h-1v1h-1v-1h-1v-1h1zM662 435h1v1h1v1h-1v1h-1v-1h-1v-1h1zM664 437h1v1h1v1h-1v1h-1v-1h-1v-1h1zM662 439h1v1h1v1h-1v1h-1v-1h-1v-1h1zM664 441h1v1h1v1h-1v1h-1v-1h-1v-1h1zM662 443h1v1h1v1h-1v1h-1v-1h-1v-1h1zM662 447h1v1h1v1h-1v1h-1v-1h-1v-1h1zM664 449h1v1h1v1h-1v1h-1v-1h-1v-1h1zM664 461h1v1h1v1h-1v1h-1v-1h-1v-1h1zM662 463h1v1h1v1h-1v1h-1v-1h-1v-1h1zM664 465h1v1h1v1h-1v1h-1v-1h-1v-1h1zM662 467h1v1h1v1h-1v1h-1v-1h-1v-1h1zM664 469h1v1h1v1h-1v1h-1v-1h-1v-1h1zM664 473h1v1h1v1h-1v1h-1v-1h-1v-1h1zM662 475h1v1h1v1h-1v1h-1v-1h-1v-1h1zM664 477h1v1h1v1h-1v1h-1v-1h-1v-1h1zM664 481h1v1h1v1h-1v1h-1v-1h-1v-1h1zM662 487h1v1h1v1h-1v1h-1v-1h-1v-1h1zM664 489h1v1h1v1h-1v1h-1v-1h-1v-1h1zM662 491h1v1h1v1h-1v1h-1v-1h-1v-1h1zM664 493h1v1h1v1h-1v1h-1v-1h-1v-1h1zM662 499h1v1h1v1h-1v1h-1v-1h-1v-1h1zM664 505h1v1h1v1h-1v1h-1v-1h-1v-1h1zM662 507h1v1h1v1h-1v1h-1v-1h-1v-1h1zM662 511h1v1h1v1h-1v1h-1v-1h-1v-1h1zM664 513h1v1h1v1h-1v1h-1v-1h-1v-1h1zM662 515h1v1h1v1h-1v1h-1v-1h-1v-1h1zM664 517h1v1h1v1h-1v1h-1v-1h-1v-1h1zM662 519h1v1h1v1h-1v1h-1v-1h-1v-1h1zM664 521h1v1h1v1h-1v1h-1v-1h-1v-1h1zM662 523h1v1h1v1h-1v1h-1v-1h-1v-1h1zM664 525h1v1h1v1h-1v1h-1v-1h-1v-1h1zM662 527h1v1h1v1h-1v1h-1v-1h-1v-1h1zM664 529h1v1h1v1h-1v1h-1v-1h-1v-1h1zM666 431h1v1h1v1h-1v1h-1v-1h-1v-1h1zM668 433h1v1h1v1h-1v1h-1v-1h-1v-1h1zM666 435h1v1h1v1h-1v1h-1v-1h-1v-1h1zM666 439h1v1h1v1h-1v1h-1v-1h-1v-1h1zM666 443h1v1h1v1h-1v1h-1v-1h-1v-1h1zM668 445h1v1h1v1h-1v1h-1v-1h-1v-1h1zM666 515h1v1h1v1h-1v1h-1v-1h-1v-1h1zM668 517h1v1h1v1h-1v1h-1v-1h-1v-1h1zM666 519h1v1h1v1h-1v1h-1v-1h-1v-1h1zM668 521h1v1h1v1h-1v1h-1v-1h-1v-1h1zM666 523h1v1h1v1h-1v1h-1v-1h-1v-1h1zM668 525h1v1h1v1h-1v1h-1v-1h-1v-1h1zM666 527h1v1h1v1h-1v1h-1v-1h-1v-1h1zM668 529h1v1h1v1h-1v1h-1v-1h-1v-1h1zM670 443h1v1h1v1h-1v1h-1v-1h-1v-1h1zM672 445h1v1h1v1h-1v1h-1v-1h-1v-1h1zM670 447h1v1h1v1h-1v1h-1v-1h-1v-1h1zM670 515h1v1h1v1h-1v1h-1v-1h-1v-1h1zM672 517h1v1h1v1h-1v1h-1v-1h-1v-1h1zM670 519h1v1h1v1h-1v1h-1v-1h-1v-1h1zM670 527h1v1h1v1h-1v1h-1v-1h-1v-1h1zM672 529h1v1h1v1h-1v1h-1v-1h-1v-1h1zM676 433h1v1h1v1h-1v1h-1v-1h-1v-1h1zM674 435h1v1h1v1h-1v1h-1v-1h-1v-1h1zM676 437h1v1h1v1h-1v1h-1v-1h-1v-1h1zM674 439h1v1h1v1h-1v1h-1v-1h-1v-1h1zM676 441h1v1h1v1h-1v1h-1v-1h-1v-1h1zM674 443h1v1h1v1h-1v1h-1v-1h-1v-1h1zM674 447h1v1h1v1h-1v1h-1v-1h-1v-1h1zM674 515h1v1h1v1h-1v1h-1v-1h-1v-1h1zM676 521h1v1h1v1h-1v1h-1v-1h-1v-1h1zM674 523h1v1h1v1h-1v1h-1v-1h-1v-1h1zM676 525h1v1h1v1h-1v1h-1v-1h-1v-1h1zM674 527h1v1h1v1h-1v1h-1v-1h-1v-1h1zM676 529h1v1h1v1h-1v1h-1v-1h-1v-1h1zM678 431h1v1h1v1h-1v1h-1v-1h-1v-1h1zM680 433h1v1h1v1h-1v1h-1v-1h-1v-1h1zM678 435h1v1h1v1h-1v1h-1v-1h-1v-1h1zM680 437h1v1h1v1h-1v1h-1v-1h-1v-1h1zM680 441h1v1h1v1h-1v1h-1v-1h-1v-1h1zM678 443h1v1h1v1h-1v1h-1v-1h-1v-1h1zM678 447h1v1h1v1h-1v1h-1v-1h-1v-1h1zM678 515h1v1h1v1h-1v1h-1v-1h-1v-1h1zM678 523h1v1h1v1h-1v1h-1v-1h-1v-1h1zM678 527h1v1h1v1h-1v1h-1v-1h-1v-1h1zM680 529h1v1h1v1h-1v1h-1v-1h-1v-1h1zM682 431h1v1h1v1h-1v1h-1v-1h-1v-1h1zM684 433h1v1h1v1h-1v1h-1v-1h-1v-1h1zM682 435h1v1h1v1h-1v1h-1v-1h-1v-1h1zM684 445h1v1h1v1h-1v1h-1v-1h-1v-1h1zM682 515h1v1h1v1h-1v1h-1v-1h-1v-1h1zM682 519h1v1h1v1h-1v1h-1v-1h-1v-1h1zM684 521h1v1h1v1h-1v1h-1v-1h-1v-1h1zM682 523h1v1h1v1h-1v1h-1v-1h-1v-1h1zM684 525h1v1h1v1h-1v1h-1v-1h-1v-1h1zM682 527h1v1h1v1h-1v1h-1v-1h-1v-1h1zM686 431h1v1h1v1h-1v1h-1v-1h-1v-1h1zM688 433h1v1h1v1h-1v1h-1v-1h-1v-1h1zM686 439h1v1h1v1h-1v1h-1v-1h-1v-1h1zM686 443h1v1h1v1h-1v1h-1v-1h-1v-1h1zM688 445h1v1h1v1h-1v1h-1v-1h-1v-1h1zM686 515h1v1h1v1h-1v1h-1v-1h-1v-1h1zM688 517h1v1h1v1h-1v1h-1v-1h-1v-1h1zM686 519h1v1h1v1h-1v1h-1v-1h-1v-1h1zM688 525h1v1h1v1h-1v1h-1v-1h-1v-1h1zM686 527h1v1h1v1h-1v1h-1v-1h-1v-1h1zM688 529h1v1h1v1h-1v1h-1v-1h-1v-1h1zM690 431h1v1h1v1h-1v1h-1v-1h-1v-1h1zM692 433h1v1h1v1h-1v1h-1v-1h-1v-1h1zM690 443h1v1h1v1h-1v1h-1v-1h-1v-1h1zM692 445h1v1h1v1h-1v1h-1v-1h-1v-1h1zM690 447h1v1h1v1h-1v1h-1v-1h-1v-1h1zM692 517h1v1h1v1h-1v1h-1v-1h-1v-1h1zM690 519h1v1h1v1h-1v1h-1v-1h-1v-1h1zM692 521h1v1h1v1h-1v1h-1v-1h-1v-1h1zM690 523h1v1h1v1h-1v1h-1v-1h-1v-1h1zM692 525h1v1h1v1h-1v1h-1v-1h-1v-1h1zM690 527h1v1h1v1h-1v1h-1v-1h-1v-1h1zM692 529h1v1h1v1h-1v1h-1v-1h-1v-1h1zM694 431h1v1h1v1h-1v1h-1v-1h-1v-1h1zM696 433h1v1h1v1h-1v1h-1v-1h-1v-1h1zM694 435h1v1h1v1h-1v1h-1v-1h-1v-1h1zM696 437h1v1h1v1h-1v1h-1v-1h-1v-1h1zM694 439h1v1h1v1h-1v1h-1v-1h-1v-1h1zM696 441h1v1h1v1h-1v1h-1v-1h-1v-1h1zM694 443h1v1h1v1h-1v1h-1v-1h-1v-1h1zM694 447h1v1h1v1h-1v1h-1v-1h-1v-1h1zM694 515h1v1h1v1h-1v1h-1v-1h-1v-1h1zM696 517h1v1h1v1h-1v1h-1v-1h-1v-1h1zM694 519h1v1h1v1h-1v1h-1v-1h-1v-1h1zM696 521h1v1h1v1h-1v1h-1v-1h-1v-1h1zM694 523h1v1h1v1h-1v1h-1v-1h-1v-1h1zM698 431h1v1h1v1h-1v1h-1v-1h-1v-1h1zM700 433h1v1h1v1h-1v1h-1v-1h-1v-1h1zM698 435h1v1h1v1h-1v1h-1v-1h-1v-1h1zM700 437h1v1h1v1h-1v1h-1v-1h-1v-1h1zM698 439h1v1h1v1h-1v1h-1v-1h-1v-1h1zM698 443h1v1h1v1h-1v1h-1v-1h-1v-1h1zM700 445h1v1h1v1h-1v1h-1v-1h-1v-1h1zM698 447h1v1h1v1h-1v1h-1v-1h-1v-1h1zM698 515h1v1h1v1h-1v1h-1v-1h-1v-1h1zM700 517h1v1h1v1h-1v1h-1v-1h-1v-1h1zM698 519h1v1h1v1h-1v1h-1v-1h-1v-1h1zM700 521h1v1h1v1h-1v1h-1v-1h-1v-1h1zM698 523h1v1h1v1h-1v1h-1v-1h-1v-1h1zM700 525h1v1h1v1h-1v1h-1v-1h-1v-1h1zM698 527h1v1h1v1h-1v1h-1v-1h-1v-1h1zM700 529h1v1h1v1h-1v1h-1v-1h-1v-1h1zM704 433h1v1h1v1h-1v1h-1v-1h-1v-1h1zM702 435h1v1h1v1h-1v1h-1v-1h-1v-1h1zM704 437h1v1h1v1h-1v1h-1v-1h-1v-1h1zM702 439h1v1h1v1h-1v1h-1v-1h-1v-1h1zM702 443h1v1h1v1h-1v1h-1v-1h-1v-1h1zM702 447h1v1h1v1h-1v1h-1v-1h-1v-1h1zM702 515h1v1h1v1h-1v1h-1v-1h-1v-1h1zM704 517h1v1h1v1h-1v1h-1v-1h-1v-1h1zM702 519h1v1h1v1h-1v1h-1v-1h-1v-1h1zM704 521h1v1h1v1h-1v1h-1v-1h-1v-1h1zM702 523h1v1h1v1h-1v1h-1v-1h-1v-1h1zM702 527h1v1h1v1h-1v1h-1v-1h-1v-1h1zM704 529h1v1h1v1h-1v1h-1v-1h-1v-1h1zM706 431h1v1h1v1h-1v1h-1v-1h-1v-1h1zM708 433h1v1h1v1h-1v1h-1v-1h-1v-1h1zM706 435h1v1h1v1h-1v1h-1v-1h-1v-1h1zM708 437h1v1h1v1h-1v1h-1v-1h-1v-1h1zM708 441h1v1h1v1h-1v1h-1v-1h-1v-1h1zM706 443h1v1h1v1h-1v1h-1v-1h-1v-1h1zM708 445h1v1h1v1h-1v1h-1v-1h-1v-1h1zM706 447h1v1h1v1h-1v1h-1v-1h-1v-1h1zM708 517h1v1h1v1h-1v1h-1v-1h-1v-1h1zM706 519h1v1h1v1h-1v1h-1v-1h-1v-1h1zM708 521h1v1h1v1h-1v1h-1v-1h-1v-1h1zM706 523h1v1h1v1h-1v1h-1v-1h-1v-1h1zM706 527h1v1h1v1h-1v1h-1v-1h-1v-1h1zM708 529h1v1h1v1h-1v1h-1v-1h-1v-1h1zM710 431h1v1h1v1h-1v1h-1v-1h-1v-1h1zM712 433h1v1h1v1h-1v1h-1v-1h-1v-1h1zM710 435h1v1h1v1h-1v1h-1v-1h-1v-1h1zM710 439h1v1h1v1h-1v1h-1v-1h-1v-1h1zM712 441h1v1h1v1h-1v1h-1v-1h-1v-1h1zM712 445h1v1h1v1h-1v1h-1v-1h-1v-1h1zM710 447h1v1h1v1h-1v1h-1v-1h-1v-1h1zM712 449h1v1h1v1h-1v1h-1v-1h-1v-1h1zM710 451h1v1h1v1h-1v1h-1v-1h-1v-1h1zM712 453h1v1h1v1h-1v1h-1v-1h-1v-1h1zM710 455h1v1h1v1h-1v1h-1v-1h-1v-1h1zM712 457h1v1h1v1h-1v1h-1v-1h-1v-1h1zM712 461h1v1h1v1h-1v1h-1v-1h-1v-1h1zM710 467h1v1h1v1h-1v1h-1v-1h-1v-1h1zM712 469h1v1h1v1h-1v1h-1v-1h-1v-1h1zM710 475h1v1h1v1h-1v1h-1v-1h-1v-1h1zM710 479h1v1h1v1h-1v1h-1v-1h-1v-1h1zM712 481h1v1h1v1h-1v1h-1v-1h-1v-1h1zM710 483h1v1h1v1h-1v1h-1v-1h-1v-1h1zM712 485h1v1h1v1h-1v1h-1v-1h-1v-1h1zM710 487h1v1h1v1h-1v1h-1v-1h-1v-1h1zM710 491h1v1h1v1h-1v1h-1v-1h-1v-1h1zM712 493h1v1h1v1h-1v1h-1v-1h-1v-1h1zM710 495h1v1h1v1h-1v1h-1v-1h-1v-1h1zM712 497h1v1h1v1h-1v1h-1v-1h-1v-1h1zM710 499h1v1h1v1h-1v1h-1v-1h-1v-1h1zM712 501h1v1h1v1h-1v1h-1v-1h-1v-1h1zM710 503h1v1h1v1h-1v1h-1v-1h-1v-1h1zM710 507h1v1h1v1h-1v1h-1v-1h-1v-1h1zM712 509h1v1h1v1h-1v1h-1v-1h-1v-1h1zM710 511h1v1h1v1h-1v1h-1v-1h-1v-1h1zM712 517h1v1h1v1h-1v1h-1v-1h-1v-1h1zM710 519h1v1h1v1h-1v1h-1v-1h-1v-1h1zM712 521h1v1h1v1h-1v1h-1v-1h-1v-1h1zM710 523h1v1h1v1h-1v1h-1v-1h-1v-1h1zM712 525h1v1h1v1h-1v1h-1v-1h-1v-1h1zM710 527h1v1h1v1h-1v1h-1v-1h-1v-1h1zM716 433h1v1h1v1h-1v1h-1v-1h-1v-1h1zM716 437h1v1h1v1h-1v1h-1v-1h-1v-1h1zM714 439h1v1h1v1h-1v1h-1v-1h-1v-1h1zM714 443h1v1h1v1h-1v1h-1v-1h-1v-1h1zM714 447h1v1h1v1h-1v1h-1v-1h-1v-1h1zM714 451h1v1h1v1h-1v1h-1v-1h-1v-1h1zM716 453h1v1h1v1h-1v1h-1v-1h-1v-1h1zM714 455h1v1h1v1h-1v1h-1v-1h-1v-1h1zM716 457h1v1h1v1h-1v1h-1v-1h-1v-1h1zM714 459h1v1h1v1h-1v1h-1v-1h-1v-1h1zM716 461h1v1h1v1h-1v1h-1v-1h-1v-1h1zM716 465h1v1h1v1h-1v1h-1v-1h-1v-1h1zM716 469h1v1h1v1h-1v1h-1v-1h-1v-1h1zM714 471h1v1h1v1h-1v1h-1v-1h-1v-1h1zM716 473h1v1h1v1h-1v1h-1v-1h-1v-1h1zM716 477h1v1h1v1h-1v1h-1v-1h-1v-1h1zM714 479h1v1h1v1h-1v1h-1v-1h-1v-1h1zM714 483h1v1h1v1h-1v1h-1v-1h-1v-1h1zM716 493h1v1h1v1h-1v1h-1v-1h-1v-1h1zM716 497h1v1h1v1h-1v1h-1v-1h-1v-1h1zM714 499h1v1h1v1h-1v1h-1v-1h-1v-1h1zM716 501h1v1h1v1h-1v1h-1v-1h-1v-1h1zM716 505h1v1h1v1h-1v1h-1v-1h-1v-1h1zM714 507h1v1h1v1h-1v1h-1v-1h-1v-1h1zM716 509h1v1h1v1h-1v1h-1v-1h-1v-1h1zM714 511h1v1h1v1h-1v1h-1v-1h-1v-1h1zM714 519h1v1h1v1h-1v1h-1v-1h-1v-1h1zM716 521h1v1h1v1h-1v1h-1v-1h-1v-1h1zM714 523h1v1h1v1h-1v1h-1v-1h-1v-1h1zM714 527h1v1h1v1h-1v1h-1v-1h-1v-1h1zM716 529h1v1h1v1h-1v1h-1v-1h-1v-1h1zM718 431h1v1h1v1h-1v1h-1v-1h-1v-1h1zM720 433h1v1h1v1h-1v1h-1v-1h-1v-1h1zM718 435h1v1h1v1h-1v1h-1v-1h-1v-1h1zM720 437h1v1h1v1h-1v1h-1v-1h-1v-1h1zM718 439h1v1h1v1h-1v1h-1v-1h-1v-1h1zM718 443h1v1h1v1h-1v1h-1v-1h-1v-1h1zM720 445h1v1h1v1h-1v1h-1v-1h-1v-1h1zM718 447h1v1h1v1h-1v1h-1v-1h-1v-1h1zM720 449h1v1h1v1h-1v1h-1v-1h-1v-1h1zM718 451h1v1h1v1h-1v1h-1v-1h-1v-1h1zM720 453h1v1h1v1h-1v1h-1v-1h-1v-1h1zM718 455h1v1h1v1h-1v1h-1v-1h-1v-1h1zM720 457h1v1h1v1h-1v1h-1v-1h-1v-1h1zM718 459h1v1h1v1h-1v1h-1v-1h-1v-1h1zM720 461h1v1h1v1h-1v1h-1v-1h-1v-1h1zM718 463h1v1h1v1h-1v1h-1v-1h-1v-1h1zM718 467h1v1h1v1h-1v1h-1v-1h-1v-1h1zM720 469h1v1h1v1h-1v1h-1v-1h-1v-1h1zM718 471h1v1h1v1h-1v1h-1v-1h-1v-1h1zM720 473h1v1h1v1h-1v1h-1v-1h-1v-1h1zM718 475h1v1h1v1h-1v1h-1v-1h-1v-1h1zM720 477h1v1h1v1h-1v1h-1v-1h-1v-1h1zM718 479h1v1h1v1h-1v1h-1v-1h-1v-1h1zM720 481h1v1h1v1h-1v1h-1v-1h-1v-1h1zM718 483h1v1h1v1h-1v1h-1v-1h-1v-1h1zM720 485h1v1h1v1h-1v1h-1v-1h-1v-1h1zM720 493h1v1h1v1h-1v1h-1v-1h-1v-1h1zM718 495h1v1h1v1h-1v1h-1v-1h-1v-1h1zM718 499h1v1h1v1h-1v1h-1v-1h-1v-1h1zM720 501h1v1h1v1h-1v1h-1v-1h-1v-1h1zM718 503h1v1h1v1h-1v1h-1v-1h-1v-1h1zM718 507h1v1h1v1h-1v1h-1v-1h-1v-1h1zM720 509h1v1h1v1h-1v1h-1v-1h-1v-1h1zM718 511h1v1h1v1h-1v1h-1v-1h-1v-1h1zM720 513h1v1h1v1h-1v1h-1v-1h-1v-1h1zM718 515h1v1h1v1h-1v1h-1v-1h-1v-1h1zM720 517h1v1h1v1h-1v1h-1v-1h-1v-1h1zM718 519h1v1h1v1h-1v1h-1v-1h-1v-1h1zM720 521h1v1h1v1h-1v1h-1v-1h-1v-1h1zM718 523h1v1h1v1h-1v1h-1v-1h-1v-1h1zM720 525h1v1h1v1h-1v1h-1v-1h-1v-1h1zM718 527h1v1h1v1h-1v1h-1v-1h-1v-1h1zM720 529h1v1h1v1h-1v1h-1v-1h-1v-1h1zM724 433h1v1h1v1h-1v1h-1v-1h-1v-1h1zM722 435h1v1h1v1h-1v1h-1v-1h-1v-1h1zM722 439h1v1h1v1h-1v1h-1v-1h-1v-1h1zM724 445h1v1h1v1h-1v1h-1v-1h-1v-1h1zM724 449h1v1h1v1h-1v1h-1v-1h-1v-1h1zM722 451h1v1h1v1h-1v1h-1v-1h-1v-1h1zM724 453h1v1h1v1h-1v1h-1v-1h-1v-1h1zM722 455h1v1h1v1h-1v1h-1v-1h-1v-1h1zM724 461h1v1h1v1h-1v1h-1v-1h-1v-1h1zM722 463h1v1h1v1h-1v1h-1v-1h-1v-1h1zM724 465h1v1h1v1h-1v1h-1v-1h-1v-1h1zM722 467h1v1h1v1h-1v1h-1v-1h-1v-1h1zM724 469h1v1h1v1h-1v1h-1v-1h-1v-1h1zM722 471h1v1h1v1h-1v1h-1v-1h-1v-1h1zM724 473h1v1h1v1h-1v1h-1v-1h-1v-1h1zM722 475h1v1h1v1h-1v1h-1v-1h-1v-1h1zM724 477h1v1h1v1h-1v1h-1v-1h-1v-1h1zM722 479h1v1h1v1h-1v1h-1v-1h-1v-1h1zM724 481h1v1h1v1h-1v1h-1v-1h-1v-1h1zM724 485h1v1h1v1h-1v1h-1v-1h-1v-1h1zM724 489h1v1h1v1h-1v1h-1v-1h-1v-1h1zM722 491h1v1h1v1h-1v1h-1v-1h-1v-1h1zM722 495h1v1h1v1h-1v1h-1v-1h-1v-1h1zM724 497h1v1h1v1h-1v1h-1v-1h-1v-1h1zM722 499h1v1h1v1h-1v1h-1v-1h-1v-1h1zM724 501h1v1h1v1h-1v1h-1v-1h-1v-1h1zM722 503h1v1h1v1h-1v1h-1v-1h-1v-1h1zM722 507h1v1h1v1h-1v1h-1v-1h-1v-1h1zM724 509h1v1h1v1h-1v1h-1v-1h-1v-1h1zM722 511h1v1h1v1h-1v1h-1v-1h-1v-1h1zM722 515h1v1h1v1h-1v1h-1v-1h-1v-1h1zM724 517h1v1h1v1h-1v1h-1v-1h-1v-1h1zM722 519h1v1h1v1h-1v1h-1v-1h-1v-1h1zM724 521h1v1h1v1h-1v1h-1v-1h-1v-1h1zM722 523h1v1h1v1h-1v1h-1v-1h-1v-1h1zM724 525h1v1h1v1h-1v1h-1v-1h-1v-1h1zM724 529h1v1h1v1h-1v1h-1v-1h-1v-1h1z"/><path fill="#008284" d="M626 439h1v1h1v1h-1v1h-1v-1h-1v-1h1zM628 449h1v1h1v1h-1v1h-1v-1h-1v-1h1zM626 483h1v1h1v1h-1v1h-1v-1h-1v-1h1zM632 441h1v1h1v1h-1v1h-1v-1h-1v-1h1zM634 499h1v1h1v1h-1v1h-1v-1h-1v-1h1zM638 471h1v1h1v1h-1v1h-1v-1h-1v-1h1zM642 443h1v1h1v1h-1v1h-1v-1h-1v-1h1zM642 491h1v1h1v1h-1v1h-1v-1h-1v-1h1zM644 501h1v1h1v1h-1v1h-1v-1h-1v-1h1zM646 443h1v1h1v1h-1v1h-1v-1h-1v-1h1zM652 441h1v1h1v1h-1v1h-1v-1h-1v-1h1zM652 525h1v1h1v1h-1v1h-1v-1h-1v-1h1zM656 525h1v1h1v1h-1v1h-1v-1h-1v-1h1zM658 511h1v1h1v1h-1v1h-1v-1h-1v-1h1zM678 519h1v1h1v1h-1v1h-1v-1h-1v-1h1zM684 437h1v1h1v1h-1v1h-1v-1h-1v-1h1zM686 447h1v1h1v1h-1v1h-1v-1h-1v-1h1zM696 445h1v1h1v1h-1v1h-1v-1h-1v-1h1zM704 441h1v1h1v1h-1v1h-1v-1h-1v-1h1zM712 437h1v1h1v1h-1v1h-1v-1h-1v-1h1zM710 443h1v1h1v1h-1v1h-1v-1h-1v-1h1zM710 463h1v1h1v1h-1v1h-1v-1h-1v-1h1zM710 471h1v1h1v1h-1v1h-1v-1h-1v-1h1zM722 431h1v1h1v1h-1v1h-1v-1h-1v-1h1zM724 441h1v1h1v1h-1v1h-1v-1h-1v-1h1z"/><rect x="624.5" y="430.5" width="100" height="100" fill="none" stroke="#f0f0f0" stroke-width="1"/><path fill="#ffd83a" d="M666 449h1v1h1v1h-1v1h-1v-1h-1v-1h1zM666 453h1v1h1v1h-1v1h-1v-1h-1v-1h1zM666 456h1v1h1v1h-1v1h-1v-1h-1v-1h1zM666 463h1v1h1v1h-1v1h-1v-1h-1v-1h1zM666 467h1v1h1v1h-1v1h-1v-1h-1v-1h1zM666 471h1v1h1v1h-1v1h-1v-1h-1v-1h1zM666 474h1v1h1v1h-1v1h-1v-1h-1v-1h1zM666 478h1v1h1v1h-1v1h-1v-1h-1v-1h1zM666 488h1v1h1v1h-1v1h-1v-1h-1v-1h1zM666 506h1v1h1v1h-1v1h-1v-1h-1v-1h1zM666 510h1v1h1v1h-1v1h-1v-1h-1v-1h1zM669 449h1v1h1v1h-1v1h-1v-1h-1v-1h1zM669 456h1v1h1v1h-1v1h-1v-1h-1v-1h1zM669 467h1v1h1v1h-1v1h-1v-1h-1v-1h1zM669 474h1v1h1v1h-1v1h-1v-1h-1v-1h1zM669 478h1v1h1v1h-1v1h-1v-1h-1v-1h1zM669 481h1v1h1v1h-1v1h-1v-1h-1v-1h1zM669 488h1v1h1v1h-1v1h-1v-1h-1v-1h1zM669 503h1v1h1v1h-1v1h-1v-1h-1v-1h1zM673 460h1v1h1v1h-1v1h-1v-1h-1v-1h1zM673 463h1v1h1v1h-1v1h-1v-1h-1v-1h1zM673 467h1v1h1v1h-1v1h-1v-1h-1v-1h1zM673 478h1v1h1v1h-1v1h-1v-1h-1v-1h1zM673 481h1v1h1v1h-1v1h-1v-1h-1v-1h1zM673 485h1v1h1v1h-1v1h-1v-1h-1v-1h1zM673 496h1v1h1v1h-1v1h-1v-1h-1v-1h1zM673 503h1v1h1v1h-1v1h-1v-1h-1v-1h1zM673 506h1v1h1v1h-1v1h-1v-1h-1v-1h1zM673 513h1v1h1v1h-1v1h-1v-1h-1v-1h1zM676 449h1v1h1v1h-1v1h-1v-1h-1v-1h1zM676 453h1v1h1v1h-1v1h-1v-1h-1v-1h1zM676 460h1v1h1v1h-1v1h-1v-1h-1v-1h1zM676 467h1v1h1v1h-1v1h-1v-1h-1v-1h1zM676 474h1v1h1v1h-1v1h-1v-1h-1v-1h1zM676 481h1v1h1v1h-1v1h-1v-1h-1v-1h1zM676 503h1v1h1v1h-1v1h-1v-1h-1v-1h1zM676 510h1v1h1v1h-1v1h-1v-1h-1v-1h1zM676 513h1v1h1v1h-1v1h-1v-1h-1v-1h1zM680 456h1v1h1v1h-1v1h-1v-1h-1v-1h1zM680 460h1v1h1v1h-1v1h-1v-1h-1v-1h1zM680 467h1v1h1v1h-1v1h-1v-1h-1v-1h1zM680 471h1v1h1v1h-1v1h-1v-1h-1v-1h1zM680 474h1v1h1v1h-1v1h-1v-1h-1v-1h1zM680 478h1v1h1v1h-1v1h-1v-1h-1v-1h1zM680 485h1v1h1v1h-1v1h-1v-1h-1v-1h1zM680 496h1v1h1v1h-1v1h-1v-1h-1v-1h1zM680 510h1v1h1v1h-1v1h-1v-1h-1v-1h1zM680 513h1v1h1v1h-1v1h-1v-1h-1v-1h1zM683 456h1v1h1v1h-1v1h-1v-1h-1v-1h1zM683 460h1v1h1v1h-1v1h-1v-1h-1v-1h1zM683 463h1v1h1v1h-1v1h-1v-1h-1v-1h1zM683 467h1v1h1v1h-1v1h-1v-1h-1v-1h1zM683 474h1v1h1v1h-1v1h-1v-1h-1v-1h1zM683 478h1v1h1v1h-1v1h-1v-1h-1v-1h1zM683 481h1v1h1v1h-1v1h-1v-1h-1v-1h1zM683 485h1v1h1v1h-1v1h-1v-1h-1v-1h1zM683 496h1v1h1v1h-1v1h-1v-1h-1v-1h1zM683 499h1v1h1v1h-1v1h-1v-1h-1v-1h1zM683 513h1v1h1v1h-1v1h-1v-1h-1v-1h1zM687 456h1v1h1v1h-1v1h-1v-1h-1v-1h1zM687 467h1v1h1v1h-1v1h-1v-1h-1v-1h1zM687 474h1v1h1v1h-1v1h-1v-1h-1v-1h1zM687 481h1v1h1v1h-1v1h-1v-1h-1v-1h1zM687 485h1v1h1v1h-1v1h-1v-1h-1v-1h1zM687 492h1v1h1v1h-1v1h-1v-1h-1v-1h1zM687 496h1v1h1v1h-1v1h-1v-1h-1v-1h1zM687 499h1v1h1v1h-1v1h-1v-1h-1v-1h1zM687 503h1v1h1v1h-1v1h-1v-1h-1v-1h1zM687 506h1v1h1v1h-1v1h-1v-1h-1v-1h1zM687 513h1v1h1v1h-1v1h-1v-1h-1v-1h1zM691 460h1v1h1v1h-1v1h-1v-1h-1v-1h1zM691 463h1v1h1v1h-1v1h-1v-1h-1v-1h1zM691 471h1v1h1v1h-1v1h-1v-1h-1v-1h1zM691 478h1v1h1v1h-1v1h-1v-1h-1v-1h1zM691 485h1v1h1v1h-1v1h-1v-1h-1v-1h1zM691 492h1v1h1v1h-1v1h-1v-1h-1v-1h1zM691 496h1v1h1v1h-1v1h-1v-1h-1v-1h1zM691 506h1v1h1v1h-1v1h-1v-1h-1v-1h1zM691 510h1v1h1v1h-1v1h-1v-1h-1v-1h1zM691 513h1v1h1v1h-1v1h-1v-1h-1v-1h1zM694 463h1v1h1v1h-1v1h-1v-1h-1v-1h1zM694 467h1v1h1v1h-1v1h-1v-1h-1v-1h1zM694 471h1v1h1v1h-1v1h-1v-1h-1v-1h1zM694 474h1v1h1v1h-1v1h-1v-1h-1v-1h1zM694 478h1v1h1v1h-1v1h-1v-1h-1v-1h1zM694 481h1v1h1v1h-1v1h-1v-1h-1v-1h1zM694 488h1v1h1v1h-1v1h-1v-1h-1v-1h1zM694 492h1v1h1v1h-1v1h-1v-1h-1v-1h1zM694 499h1v1h1v1h-1v1h-1v-1h-1v-1h1zM694 506h1v1h1v1h-1v1h-1v-1h-1v-1h1zM694 510h1v1h1v1h-1v1h-1v-1h-1v-1h1zM694 513h1v1h1v1h-1v1h-1v-1h-1v-1h1zM698 474h1v1h1v1h-1v1h-1v-1h-1v-1h1zM698 478h1v1h1v1h-1v1h-1v-1h-1v-1h1zM698 481h1v1h1v1h-1v1h-1v-1h-1v-1h1zM698 485h1v1h1v1h-1v1h-1v-1h-1v-1h1zM698 488h1v1h1v1h-1v1h-1v-1h-1v-1h1zM698 492h1v1h1v1h-1v1h-1v-1h-1v-1h1zM698 496h1v1h1v1h-1v1h-1v-1h-1v-1h1zM698 499h1v1h1v1h-1v1h-1v-1h-1v-1h1zM698 503h1v1h1v1h-1v1h-1v-1h-1v-1h1zM698 510h1v1h1v1h-1v1h-1v-1h-1v-1h1zM701 453h1v1h1v1h-1v1h-1v-1h-1v-1h1zM701 456h1v1h1v1h-1v1h-1v-1h-1v-1h1zM701 460h1v1h1v1h-1v1h-1v-1h-1v-1h1zM701 463h1v1h1v1h-1v1h-1v-1h-1v-1h1zM701 467h1v1h1v1h-1v1h-1v-1h-1v-1h1zM701 471h1v1h1v1h-1v1h-1v-1h-1v-1h1zM701 474h1v1h1v1h-1v1h-1v-1h-1v-1h1zM701 478h1v1h1v1h-1v1h-1v-1h-1v-1h1zM701 492h1v1h1v1h-1v1h-1v-1h-1v-1h1zM701 496h1v1h1v1h-1v1h-1v-1h-1v-1h1zM701 503h1v1h1v1h-1v1h-1v-1h-1v-1h1zM701 506h1v1h1v1h-1v1h-1v-1h-1v-1h1zM701 513h1v1h1v1h-1v1h-1v-1h-1v-1h1zM705 449h1v1h1v1h-1v1h-1v-1h-1v-1h1zM705 453h1v1h1v1h-1v1h-1v-1h-1v-1h1zM705 456h1v1h1v1h-1v1h-1v-1h-1v-1h1zM705 467h1v1h1v1h-1v1h-1v-1h-1v-1h1zM705 471h1v1h1v1h-1v1h-1v-1h-1v-1h1zM705 474h1v1h1v1h-1v1h-1v-1h-1v-1h1zM705 478h1v1h1v1h-1v1h-1v-1h-1v-1h1zM705 481h1v1h1v1h-1v1h-1v-1h-1v-1h1zM705 485h1v1h1v1h-1v1h-1v-1h-1v-1h1zM705 488h1v1h1v1h-1v1h-1v-1h-1v-1h1zM705 492h1v1h1v1h-1v1h-1v-1h-1v-1h1zM705 496h1v1h1v1h-1v1h-1v-1h-1v-1h1zM705 503h1v1h1v1h-1v1h-1v-1h-1v-1h1zM705 506h1v1h1v1h-1v1h-1v-1h-1v-1h1zM705 513h1v1h1v1h-1v1h-1v-1h-1v-1h1z"/><path fill="#8a8a86" d="M666 460h1v1h1v1h-1v1h-1v-1h-1v-1h1zM666 485h1v1h1v1h-1v1h-1v-1h-1v-1h1zM666 492h1v1h1v1h-1v1h-1v-1h-1v-1h1zM666 496h1v1h1v1h-1v1h-1v-1h-1v-1h1zM666 499h1v1h1v1h-1v1h-1v-1h-1v-1h1zM666 503h1v1h1v1h-1v1h-1v-1h-1v-1h1zM666 513h1v1h1v1h-1v1h-1v-1h-1v-1h1zM669 460h1v1h1v1h-1v1h-1v-1h-1v-1h1zM669 463h1v1h1v1h-1v1h-1v-1h-1v-1h1zM669 471h1v1h1v1h-1v1h-1v-1h-1v-1h1zM669 492h1v1h1v1h-1v1h-1v-1h-1v-1h1zM669 496h1v1h1v1h-1v1h-1v-1h-1v-1h1zM669 499h1v1h1v1h-1v1h-1v-1h-1v-1h1zM669 506h1v1h1v1h-1v1h-1v-1h-1v-1h1zM669 510h1v1h1v1h-1v1h-1v-1h-1v-1h1zM669 513h1v1h1v1h-1v1h-1v-1h-1v-1h1zM673 449h1v1h1v1h-1v1h-1v-1h-1v-1h1zM673 453h1v1h1v1h-1v1h-1v-1h-1v-1h1zM673 456h1v1h1v1h-1v1h-1v-1h-1v-1h1zM673 474h1v1h1v1h-1v1h-1v-1h-1v-1h1zM673 492h1v1h1v1h-1v1h-1v-1h-1v-1h1zM673 499h1v1h1v1h-1v1h-1v-1h-1v-1h1zM676 456h1v1h1v1h-1v1h-1v-1h-1v-1h1zM676 463h1v1h1v1h-1v1h-1v-1h-1v-1h1zM676 478h1v1h1v1h-1v1h-1v-1h-1v-1h1zM676 485h1v1h1v1h-1v1h-1v-1h-1v-1h1zM676 492h1v1h1v1h-1v1h-1v-1h-1v-1h1zM676 496h1v1h1v1h-1v1h-1v-1h-1v-1h1zM676 499h1v1h1v1h-1v1h-1v-1h-1v-1h1zM676 506h1v1h1v1h-1v1h-1v-1h-1v-1h1zM680 449h1v1h1v1h-1v1h-1v-1h-1v-1h1zM680 453h1v1h1v1h-1v1h-1v-1h-1v-1h1zM680 463h1v1h1v1h-1v1h-1v-1h-1v-1h1zM680 481h1v1h1v1h-1v1h-1v-1h-1v-1h1zM680 499h1v1h1v1h-1v1h-1v-1h-1v-1h1zM680 503h1v1h1v1h-1v1h-1v-1h-1v-1h1zM680 506h1v1h1v1h-1v1h-1v-1h-1v-1h1zM683 449h1v1h1v1h-1v1h-1v-1h-1v-1h1zM683 453h1v1h1v1h-1v1h-1v-1h-1v-1h1zM683 488h1v1h1v1h-1v1h-1v-1h-1v-1h1zM683 492h1v1h1v1h-1v1h-1v-1h-1v-1h1zM683 503h1v1h1v1h-1v1h-1v-1h-1v-1h1zM683 506h1v1h1v1h-1v1h-1v-1h-1v-1h1zM683 510h1v1h1v1h-1v1h-1v-1h-1v-1h1zM687 453h1v1h1v1h-1v1h-1v-1h-1v-1h1zM687 463h1v1h1v1h-1v1h-1v-1h-1v-1h1zM687 471h1v1h1v1h-1v1h-1v-1h-1v-1h1zM687 478h1v1h1v1h-1v1h-1v-1h-1v-1h1zM687 488h1v1h1v1h-1v1h-1v-1h-1v-1h1zM687 510h1v1h1v1h-1v1h-1v-1h-1v-1h1zM691 449h1v1h1v1h-1v1h-1v-1h-1v-1h1zM691 453h1v1h1v1h-1v1h-1v-1h-1v-1h1zM691 467h1v1h1v1h-1v1h-1v-1h-1v-1h1zM691 474h1v1h1v1h-1v1h-1v-1h-1v-1h1zM691 481h1v1h1v1h-1v1h-1v-1h-1v-1h1zM691 488h1v1h1v1h-1v1h-1v-1h-1v-1h1zM691 499h1v1h1v1h-1v1h-1v-1h-1v-1h1zM691 503h1v1h1v1h-1v1h-1v-1h-1v-1h1zM694 449h1v1h1v1h-1v1h-1v-1h-1v-1h1zM694 453h1v1h1v1h-1v1h-1v-1h-1v-1h1zM694 456h1v1h1v1h-1v1h-1v-1h-1v-1h1zM694 460h1v1h1v1h-1v1h-1v-1h-1v-1h1zM694 485h1v1h1v1h-1v1h-1v-1h-1v-1h1zM694 496h1v1h1v1h-1v1h-1v-1h-1v-1h1zM694 503h1v1h1v1h-1v1h-1v-1h-1v-1h1zM698 449h1v1h1v1h-1v1h-1v-1h-1v-1h1zM698 453h1v1h1v1h-1v1h-1v-1h-1v-1h1zM698 456h1v1h1v1h-1v1h-1v-1h-1v-1h1zM698 460h1v1h1v1h-1v1h-1v-1h-1v-1h1zM698 463h1v1h1v1h-1v1h-1v-1h-1v-1h1zM698 467h1v1h1v1h-1v1h-1v-1h-1v-1h1zM698 471h1v1h1v1h-1v1h-1v-1h-1v-1h1zM698 506h1v1h1v1h-1v1h-1v-1h-1v-1h1zM698 513h1v1h1v1h-1v1h-1v-1h-1v-1h1zM701 449h1v1h1v1h-1v1h-1v-1h-1v-1h1zM701 481h1v1h1v1h-1v1h-1v-1h-1v-1h1zM701 485h1v1h1v1h-1v1h-1v-1h-1v-1h1zM701 488h1v1h1v1h-1v1h-1v-1h-1v-1h1zM701 499h1v1h1v1h-1v1h-1v-1h-1v-1h1zM701 510h1v1h1v1h-1v1h-1v-1h-1v-1h1zM705 460h1v1h1v1h-1v1h-1v-1h-1v-1h1zM705 463h1v1h1v1h-1v1h-1v-1h-1v-1h1zM705 499h1v1h1v1h-1v1h-1v-1h-1v-1h1zM705 510h1v1h1v1h-1v1h-1v-1h-1v-1h1z"/><path fill="#ffd83a" d="M524 513h1v1h1v1h-1v1h-1v-1h-1v-1h1zM522 515h1v1h1v1h-1v1h-1v-1h-1v-1h1zM524 517h1v1h1v1h-1v1h-1v-1h-1v-1h1zM522 519h1v1h1v1h-1v1h-1v-1h-1v-1h1zM524 521h1v1h1v1h-1v1h-1v-1h-1v-1h1zM524 525h1v1h1v1h-1v1h-1v-1h-1v-1h1zM522 527h1v1h1v1h-1v1h-1v-1h-1v-1h1zM524 529h1v1h1v1h-1v1h-1v-1h-1v-1h1zM522 531h1v1h1v1h-1v1h-1v-1h-1v-1h1zM524 533h1v1h1v1h-1v1h-1v-1h-1v-1h1zM526 511h1v1h1v1h-1v1h-1v-1h-1v-1h1zM528 513h1v1h1v1h-1v1h-1v-1h-1v-1h1zM526 519h1v1h1v1h-1v1h-1v-1h-1v-1h1zM528 521h1v1h1v1h-1v1h-1v-1h-1v-1h1zM526 523h1v1h1v1h-1v1h-1v-1h-1v-1h1zM526 531h1v1h1v1h-1v1h-1v-1h-1v-1h1zM528 533h1v1h1v1h-1v1h-1v-1h-1v-1h1zM530 511h1v1h1v1h-1v1h-1v-1h-1v-1h1zM532 513h1v1h1v1h-1v1h-1v-1h-1v-1h1zM530 515h1v1h1v1h-1v1h-1v-1h-1v-1h1zM532 517h1v1h1v1h-1v1h-1v-1h-1v-1h1zM532 529h1v1h1v1h-1v1h-1v-1h-1v-1h1zM530 531h1v1h1v1h-1v1h-1v-1h-1v-1h1zM532 533h1v1h1v1h-1v1h-1v-1h-1v-1h1zM534 511h1v1h1v1h-1v1h-1v-1h-1v-1h1zM536 513h1v1h1v1h-1v1h-1v-1h-1v-1h1zM534 515h1v1h1v1h-1v1h-1v-1h-1v-1h1zM534 527h1v1h1v1h-1v1h-1v-1h-1v-1h1zM536 529h1v1h1v1h-1v1h-1v-1h-1v-1h1zM534 531h1v1h1v1h-1v1h-1v-1h-1v-1h1zM536 533h1v1h1v1h-1v1h-1v-1h-1v-1h1zM538 511h1v1h1v1h-1v1h-1v-1h-1v-1h1zM540 513h1v1h1v1h-1v1h-1v-1h-1v-1h1zM538 523h1v1h1v1h-1v1h-1v-1h-1v-1h1zM540 525h1v1h1v1h-1v1h-1v-1h-1v-1h1zM538 531h1v1h1v1h-1v1h-1v-1h-1v-1h1zM540 533h1v1h1v1h-1v1h-1v-1h-1v-1h1zM542 511h1v1h1v1h-1v1h-1v-1h-1v-1h1zM544 513h1v1h1v1h-1v1h-1v-1h-1v-1h1zM542 515h1v1h1v1h-1v1h-1v-1h-1v-1h1zM542 523h1v1h1v1h-1v1h-1v-1h-1v-1h1zM544 525h1v1h1v1h-1v1h-1v-1h-1v-1h1zM544 529h1v1h1v1h-1v1h-1v-1h-1v-1h1zM542 531h1v1h1v1h-1v1h-1v-1h-1v-1h1zM544 533h1v1h1v1h-1v1h-1v-1h-1v-1h1z"/><path fill="#8a8a86" d="M526 515h1v1h1v1h-1v1h-1v-1h-1v-1h1zM528 525h1v1h1v1h-1v1h-1v-1h-1v-1h1zM526 527h1v1h1v1h-1v1h-1v-1h-1v-1h1zM530 519h1v1h1v1h-1v1h-1v-1h-1v-1h1zM530 523h1v1h1v1h-1v1h-1v-1h-1v-1h1zM530 527h1v1h1v1h-1v1h-1v-1h-1v-1h1zM536 517h1v1h1v1h-1v1h-1v-1h-1v-1h1zM534 519h1v1h1v1h-1v1h-1v-1h-1v-1h1zM536 521h1v1h1v1h-1v1h-1v-1h-1v-1h1zM534 523h1v1h1v1h-1v1h-1v-1h-1v-1h1zM536 525h1v1h1v1h-1v1h-1v-1h-1v-1h1zM538 515h1v1h1v1h-1v1h-1v-1h-1v-1h1zM540 517h1v1h1v1h-1v1h-1v-1h-1v-1h1zM538 519h1v1h1v1h-1v1h-1v-1h-1v-1h1zM540 521h1v1h1v1h-1v1h-1v-1h-1v-1h1zM538 527h1v1h1v1h-1v1h-1v-1h-1v-1h1zM540 529h1v1h1v1h-1v1h-1v-1h-1v-1h1zM544 517h1v1h1v1h-1v1h-1v-1h-1v-1h1zM542 519h1v1h1v1h-1v1h-1v-1h-1v-1h1zM544 521h1v1h1v1h-1v1h-1v-1h-1v-1h1zM542 527h1v1h1v1h-1v1h-1v-1h-1v-1h1z"/><path fill="#008284" d="M528 517h1v1h1v1h-1v1h-1v-1h-1v-1h1zM528 529h1v1h1v1h-1v1h-1v-1h-1v-1h1zM532 521h1v1h1v1h-1v1h-1v-1h-1v-1h1zM532 525h1v1h1v1h-1v1h-1v-1h-1v-1h1z"/><rect x="521.5" y="510.5" width="26" height="26" fill="none" stroke="#f0f0f0" stroke-width="1"/><path fill="#008284" d="M574 511h1v1h1v1h-1v1h-1v-1h-1v-1h1zM576 513h1v1h1v1h-1v1h-1v-1h-1v-1h1zM574 515h1v1h1v1h-1v1h-1v-1h-1v-1h1zM576 521h1v1h1v1h-1v1h-1v-1h-1v-1h1zM574 523h1v1h1v1h-1v1h-1v-1h-1v-1h1zM576 525h1v1h1v1h-1v1h-1v-1h-1v-1h1zM574 527h1v1h1v1h-1v1h-1v-1h-1v-1h1zM576 529h1v1h1v1h-1v1h-1v-1h-1v-1h1zM574 531h1v1h1v1h-1v1h-1v-1h-1v-1h1zM576 533h1v1h1v1h-1v1h-1v-1h-1v-1h1zM578 511h1v1h1v1h-1v1h-1v-1h-1v-1h1zM580 513h1v1h1v1h-1v1h-1v-1h-1v-1h1zM580 525h1v1h1v1h-1v1h-1v-1h-1v-1h1zM580 533h1v1h1v1h-1v1h-1v-1h-1v-1h1zM582 511h1v1h1v1h-1v1h-1v-1h-1v-1h1zM584 513h1v1h1v1h-1v1h-1v-1h-1v-1h1zM582 519h1v1h1v1h-1v1h-1v-1h-1v-1h1zM582 531h1v1h1v1h-1v1h-1v-1h-1v-1h1zM584 533h1v1h1v1h-1v1h-1v-1h-1v-1h1zM586 511h1v1h1v1h-1v1h-1v-1h-1v-1h1zM586 531h1v1h1v1h-1v1h-1v-1h-1v-1h1zM588 533h1v1h1v1h-1v1h-1v-1h-1v-1h1zM592 513h1v1h1v1h-1v1h-1v-1h-1v-1h1zM590 527h1v1h1v1h-1v1h-1v-1h-1v-1h1zM590 531h1v1h1v1h-1v1h-1v-1h-1v-1h1zM594 511h1v1h1v1h-1v1h-1v-1h-1v-1h1zM596 513h1v1h1v1h-1v1h-1v-1h-1v-1h1zM594 515h1v1h1v1h-1v1h-1v-1h-1v-1h1zM596 517h1v1h1v1h-1v1h-1v-1h-1v-1h1zM594 519h1v1h1v1h-1v1h-1v-1h-1v-1h1zM596 521h1v1h1v1h-1v1h-1v-1h-1v-1h1zM594 523h1v1h1v1h-1v1h-1v-1h-1v-1h1zM596 525h1v1h1v1h-1v1h-1v-1h-1v-1h1zM594 527h1v1h1v1h-1v1h-1v-1h-1v-1h1zM596 529h1v1h1v1h-1v1h-1v-1h-1v-1h1zM594 531h1v1h1v1h-1v1h-1v-1h-1v-1h1zM596 533h1v1h1v1h-1v1h-1v-1h-1v-1h1z"/><path fill="#ffd83a" d="M574 519h1v1h1v1h-1v1h-1v-1h-1v-1h1zM578 519h1v1h1v1h-1v1h-1v-1h-1v-1h1zM580 521h1v1h1v1h-1v1h-1v-1h-1v-1h1zM578 523h1v1h1v1h-1v1h-1v-1h-1v-1h1zM578 531h1v1h1v1h-1v1h-1v-1h-1v-1h1zM582 515h1v1h1v1h-1v1h-1v-1h-1v-1h1zM584 517h1v1h1v1h-1v1h-1v-1h-1v-1h1zM584 529h1v1h1v1h-1v1h-1v-1h-1v-1h1zM586 515h1v1h1v1h-1v1h-1v-1h-1v-1h1zM586 527h1v1h1v1h-1v1h-1v-1h-1v-1h1zM588 529h1v1h1v1h-1v1h-1v-1h-1v-1h1zM590 511h1v1h1v1h-1v1h-1v-1h-1v-1h1zM592 521h1v1h1v1h-1v1h-1v-1h-1v-1h1zM590 523h1v1h1v1h-1v1h-1v-1h-1v-1h1z"/><path fill="#8a8a86" d="M578 515h1v1h1v1h-1v1h-1v-1h-1v-1h1zM580 517h1v1h1v1h-1v1h-1v-1h-1v-1h1zM578 527h1v1h1v1h-1v1h-1v-1h-1v-1h1zM580 529h1v1h1v1h-1v1h-1v-1h-1v-1h1zM584 521h1v1h1v1h-1v1h-1v-1h-1v-1h1zM582 523h1v1h1v1h-1v1h-1v-1h-1v-1h1zM584 525h1v1h1v1h-1v1h-1v-1h-1v-1h1zM582 527h1v1h1v1h-1v1h-1v-1h-1v-1h1zM588 517h1v1h1v1h-1v1h-1v-1h-1v-1h1zM586 519h1v1h1v1h-1v1h-1v-1h-1v-1h1zM588 521h1v1h1v1h-1v1h-1v-1h-1v-1h1zM586 523h1v1h1v1h-1v1h-1v-1h-1v-1h1zM588 525h1v1h1v1h-1v1h-1v-1h-1v-1h1zM590 515h1v1h1v1h-1v1h-1v-1h-1v-1h1zM592 517h1v1h1v1h-1v1h-1v-1h-1v-1h1zM590 519h1v1h1v1h-1v1h-1v-1h-1v-1h1zM592 525h1v1h1v1h-1v1h-1v-1h-1v-1h1zM592 529h1v1h1v1h-1v1h-1v-1h-1v-1h1z"/><rect x="573.5" y="510.5" width="26" height="26" fill="none" stroke="#f0f0f0" stroke-width="1"/><path fill="#008284" d="M647 556h1v1h1v1h-1v1h-1v-1h-1v-1h1zM647 560h1v1h1v1h-1v1h-1v-1h-1v-1h1zM647 563h1v1h1v1h-1v1h-1v-1h-1v-1h1zM647 567h1v1h1v1h-1v1h-1v-1h-1v-1h1zM647 571h1v1h1v1h-1v1h-1v-1h-1v-1h1zM647 574h1v1h1v1h-1v1h-1v-1h-1v-1h1zM647 578h1v1h1v1h-1v1h-1v-1h-1v-1h1zM647 581h1v1h1v1h-1v1h-1v-1h-1v-1h1zM647 603h1v1h1v1h-1v1h-1v-1h-1v-1h1zM651 556h1v1h1v1h-1v1h-1v-1h-1v-1h1zM651 560h1v1h1v1h-1v1h-1v-1h-1v-1h1zM651 563h1v1h1v1h-1v1h-1v-1h-1v-1h1zM651 567h1v1h1v1h-1v1h-1v-1h-1v-1h1zM651 571h1v1h1v1h-1v1h-1v-1h-1v-1h1zM651 574h1v1h1v1h-1v1h-1v-1h-1v-1h1zM651 578h1v1h1v1h-1v1h-1v-1h-1v-1h1zM651 581h1v1h1v1h-1v1h-1v-1h-1v-1h1zM651 603h1v1h1v1h-1v1h-1v-1h-1v-1h1zM654 556h1v1h1v1h-1v1h-1v-1h-1v-1h1zM654 560h1v1h1v1h-1v1h-1v-1h-1v-1h1zM654 563h1v1h1v1h-1v1h-1v-1h-1v-1h1zM654 567h1v1h1v1h-1v1h-1v-1h-1v-1h1zM654 571h1v1h1v1h-1v1h-1v-1h-1v-1h1zM654 574h1v1h1v1h-1v1h-1v-1h-1v-1h1zM654 581h1v1h1v1h-1v1h-1v-1h-1v-1h1zM654 585h1v1h1v1h-1v1h-1v-1h-1v-1h1zM654 588h1v1h1v1h-1v1h-1v-1h-1v-1h1zM654 592h1v1h1v1h-1v1h-1v-1h-1v-1h1zM654 596h1v1h1v1h-1v1h-1v-1h-1v-1h1zM654 599h1v1h1v1h-1v1h-1v-1h-1v-1h1zM654 603h1v1h1v1h-1v1h-1v-1h-1v-1h1zM658 556h1v1h1v1h-1v1h-1v-1h-1v-1h1zM658 560h1v1h1v1h-1v1h-1v-1h-1v-1h1zM658 563h1v1h1v1h-1v1h-1v-1h-1v-1h1zM658 596h1v1h1v1h-1v1h-1v-1h-1v-1h1zM658 599h1v1h1v1h-1v1h-1v-1h-1v-1h1zM658 603h1v1h1v1h-1v1h-1v-1h-1v-1h1zM662 556h1v1h1v1h-1v1h-1v-1h-1v-1h1zM662 560h1v1h1v1h-1v1h-1v-1h-1v-1h1zM662 563h1v1h1v1h-1v1h-1v-1h-1v-1h1zM662 571h1v1h1v1h-1v1h-1v-1h-1v-1h1zM662 574h1v1h1v1h-1v1h-1v-1h-1v-1h1zM662 578h1v1h1v1h-1v1h-1v-1h-1v-1h1zM662 581h1v1h1v1h-1v1h-1v-1h-1v-1h1zM662 599h1v1h1v1h-1v1h-1v-1h-1v-1h1zM662 603h1v1h1v1h-1v1h-1v-1h-1v-1h1zM665 556h1v1h1v1h-1v1h-1v-1h-1v-1h1zM665 560h1v1h1v1h-1v1h-1v-1h-1v-1h1zM665 563h1v1h1v1h-1v1h-1v-1h-1v-1h1zM665 571h1v1h1v1h-1v1h-1v-1h-1v-1h1zM665 596h1v1h1v1h-1v1h-1v-1h-1v-1h1zM665 599h1v1h1v1h-1v1h-1v-1h-1v-1h1zM665 603h1v1h1v1h-1v1h-1v-1h-1v-1h1zM669 556h1v1h1v1h-1v1h-1v-1h-1v-1h1zM669 560h1v1h1v1h-1v1h-1v-1h-1v-1h1zM669 563h1v1h1v1h-1v1h-1v-1h-1v-1h1zM669 571h1v1h1v1h-1v1h-1v-1h-1v-1h1zM669 596h1v1h1v1h-1v1h-1v-1h-1v-1h1zM669 599h1v1h1v1h-1v1h-1v-1h-1v-1h1zM669 603h1v1h1v1h-1v1h-1v-1h-1v-1h1zM672 556h1v1h1v1h-1v1h-1v-1h-1v-1h1zM672 560h1v1h1v1h-1v1h-1v-1h-1v-1h1zM672 563h1v1h1v1h-1v1h-1v-1h-1v-1h1zM672 571h1v1h1v1h-1v1h-1v-1h-1v-1h1zM672 596h1v1h1v1h-1v1h-1v-1h-1v-1h1zM672 599h1v1h1v1h-1v1h-1v-1h-1v-1h1zM672 603h1v1h1v1h-1v1h-1v-1h-1v-1h1zM676 556h1v1h1v1h-1v1h-1v-1h-1v-1h1zM676 560h1v1h1v1h-1v1h-1v-1h-1v-1h1zM676 563h1v1h1v1h-1v1h-1v-1h-1v-1h1zM676 571h1v1h1v1h-1v1h-1v-1h-1v-1h1zM676 596h1v1h1v1h-1v1h-1v-1h-1v-1h1zM676 599h1v1h1v1h-1v1h-1v-1h-1v-1h1zM676 603h1v1h1v1h-1v1h-1v-1h-1v-1h1zM679 556h1v1h1v1h-1v1h-1v-1h-1v-1h1zM679 560h1v1h1v1h-1v1h-1v-1h-1v-1h1zM679 563h1v1h1v1h-1v1h-1v-1h-1v-1h1zM679 581h1v1h1v1h-1v1h-1v-1h-1v-1h1zM679 585h1v1h1v1h-1v1h-1v-1h-1v-1h1zM679 596h1v1h1v1h-1v1h-1v-1h-1v-1h1zM679 599h1v1h1v1h-1v1h-1v-1h-1v-1h1zM679 603h1v1h1v1h-1v1h-1v-1h-1v-1h1zM683 556h1v1h1v1h-1v1h-1v-1h-1v-1h1zM683 560h1v1h1v1h-1v1h-1v-1h-1v-1h1zM683 563h1v1h1v1h-1v1h-1v-1h-1v-1h1zM683 596h1v1h1v1h-1v1h-1v-1h-1v-1h1zM683 599h1v1h1v1h-1v1h-1v-1h-1v-1h1zM683 603h1v1h1v1h-1v1h-1v-1h-1v-1h1zM687 556h1v1h1v1h-1v1h-1v-1h-1v-1h1zM687 560h1v1h1v1h-1v1h-1v-1h-1v-1h1zM687 563h1v1h1v1h-1v1h-1v-1h-1v-1h1zM687 567h1v1h1v1h-1v1h-1v-1h-1v-1h1zM687 571h1v1h1v1h-1v1h-1v-1h-1v-1h1zM687 574h1v1h1v1h-1v1h-1v-1h-1v-1h1zM687 581h1v1h1v1h-1v1h-1v-1h-1v-1h1zM687 585h1v1h1v1h-1v1h-1v-1h-1v-1h1zM687 588h1v1h1v1h-1v1h-1v-1h-1v-1h1zM687 592h1v1h1v1h-1v1h-1v-1h-1v-1h1zM687 596h1v1h1v1h-1v1h-1v-1h-1v-1h1zM687 599h1v1h1v1h-1v1h-1v-1h-1v-1h1zM687 603h1v1h1v1h-1v1h-1v-1h-1v-1h1zM690 556h1v1h1v1h-1v1h-1v-1h-1v-1h1zM690 560h1v1h1v1h-1v1h-1v-1h-1v-1h1zM690 563h1v1h1v1h-1v1h-1v-1h-1v-1h1zM690 567h1v1h1v1h-1v1h-1v-1h-1v-1h1zM690 571h1v1h1v1h-1v1h-1v-1h-1v-1h1zM690 574h1v1h1v1h-1v1h-1v-1h-1v-1h1zM690 578h1v1h1v1h-1v1h-1v-1h-1v-1h1zM690 581h1v1h1v1h-1v1h-1v-1h-1v-1h1zM694 556h1v1h1v1h-1v1h-1v-1h-1v-1h1zM694 560h1v1h1v1h-1v1h-1v-1h-1v-1h1zM694 563h1v1h1v1h-1v1h-1v-1h-1v-1h1zM694 567h1v1h1v1h-1v1h-1v-1h-1v-1h1zM694 571h1v1h1v1h-1v1h-1v-1h-1v-1h1zM694 574h1v1h1v1h-1v1h-1v-1h-1v-1h1zM694 578h1v1h1v1h-1v1h-1v-1h-1v-1h1zM694 581h1v1h1v1h-1v1h-1v-1h-1v-1h1zM694 603h1v1h1v1h-1v1h-1v-1h-1v-1h1z"/><path fill="#8a8a86" d="M647 585h1v1h1v1h-1v1h-1v-1h-1v-1h1zM647 592h1v1h1v1h-1v1h-1v-1h-1v-1h1zM694 585h1v1h1v1h-1v1h-1v-1h-1v-1h1z"/><path fill="#ffd83a" d="M647 588h1v1h1v1h-1v1h-1v-1h-1v-1h1zM647 596h1v1h1v1h-1v1h-1v-1h-1v-1h1zM647 599h1v1h1v1h-1v1h-1v-1h-1v-1h1zM651 585h1v1h1v1h-1v1h-1v-1h-1v-1h1zM651 588h1v1h1v1h-1v1h-1v-1h-1v-1h1zM651 592h1v1h1v1h-1v1h-1v-1h-1v-1h1zM651 596h1v1h1v1h-1v1h-1v-1h-1v-1h1zM651 599h1v1h1v1h-1v1h-1v-1h-1v-1h1zM662 588h1v1h1v1h-1v1h-1v-1h-1v-1h1zM665 588h1v1h1v1h-1v1h-1v-1h-1v-1h1zM669 588h1v1h1v1h-1v1h-1v-1h-1v-1h1zM672 588h1v1h1v1h-1v1h-1v-1h-1v-1h1zM676 588h1v1h1v1h-1v1h-1v-1h-1v-1h1zM679 571h1v1h1v1h-1v1h-1v-1h-1v-1h1zM679 574h1v1h1v1h-1v1h-1v-1h-1v-1h1zM679 578h1v1h1v1h-1v1h-1v-1h-1v-1h1zM679 588h1v1h1v1h-1v1h-1v-1h-1v-1h1zM687 578h1v1h1v1h-1v1h-1v-1h-1v-1h1zM690 585h1v1h1v1h-1v1h-1v-1h-1v-1h1zM690 588h1v1h1v1h-1v1h-1v-1h-1v-1h1zM690 592h1v1h1v1h-1v1h-1v-1h-1v-1h1zM690 596h1v1h1v1h-1v1h-1v-1h-1v-1h1zM690 599h1v1h1v1h-1v1h-1v-1h-1v-1h1zM694 588h1v1h1v1h-1v1h-1v-1h-1v-1h1zM694 592h1v1h1v1h-1v1h-1v-1h-1v-1h1zM694 596h1v1h1v1h-1v1h-1v-1h-1v-1h1zM694 599h1v1h1v1h-1v1h-1v-1h-1v-1h1z"/><path d="M644.8 606.9H697.1V554.5" fill="none" stroke="#f0f0f0" stroke-width="1"/><path fill="#ffd83a" d="M482 394h6v5h-6zM493 394h6v5h-6zM518 389h1v2h-1zM518 398h1v2h-1zM516 391h2v1h-2zM526 391h2v1h-2zM520 389h1v2h-1zM520 398h1v2h-1zM516 393h2v1h-2zM526 393h2v1h-2zM522 389h1v2h-1zM522 398h1v2h-1zM516 395h2v1h-2zM526 395h2v1h-2zM525 389h1v2h-1zM525 398h1v2h-1zM516 397h2v1h-2zM526 397h2v1h-2zM560 396h4v3h-4zM583 360h5v4h-5zM592 360h5v4h-5zM600 360h5v4h-5zM586 369h5v4h-5zM613 369h5v4h-5zM628 347h12v12h-12zM481 417h8v15h-8zM491 417h8v15h-8zM464 426h8v6h-8zM502 428h3v3h-3zM464 434h1v3h-1zM464 455h1v3h-1zM459 438h3v1h-3zM479 438h4v1h-4zM467 434h1v3h-1zM467 455h1v3h-1zM459 442h3v1h-3zM479 442h4v1h-4zM470 434h1v3h-1zM470 455h1v3h-1zM459 446h3v1h-3zM479 446h4v1h-4zM474 434h1v3h-1zM474 455h1v3h-1zM459 449h3v1h-3zM479 449h4v1h-4zM477 434h1v3h-1zM477 455h1v3h-1zM459 453h3v1h-3zM479 453h4v1h-4zM486 436h3v3h-3zM486 440h3v3h-3zM485 453h7v6h-7zM495 435h15v7h-15zM495 446h15v7h-15zM459 461h6v6h-6zM468 461h6v6h-6zM478 462h4v3h-4zM478 466h4v3h-4zM497 462h6v16h-6zM506 460h4v3h-4zM506 466h4v3h-4zM562 425h1v2h-1zM562 437h1v1h-1zM560 428h1v1h-1zM568 428h2v1h-2zM564 425h1v2h-1zM564 437h1v1h-1zM560 431h1v1h-1zM568 431h2v1h-2zM567 425h1v2h-1zM567 437h1v1h-1zM560 435h1v1h-1zM568 435h2v1h-2zM541 430h1v1h-1zM541 437h1v2h-1zM538 432h2v1h-2zM548 432h2v1h-2zM543 430h1v1h-1zM543 437h1v2h-1zM538 434h2v1h-2zM548 434h2v1h-2zM546 430h1v1h-1zM546 437h1v2h-1zM538 436h2v1h-2zM548 436h2v1h-2zM586 420h1v1h-1zM586 427h1v2h-1zM584 421h1v1h-1zM594 421h2v1h-2zM589 420h1v1h-1zM589 427h1v2h-1zM584 424h1v1h-1zM594 424h2v1h-2zM592 420h1v1h-1zM592 427h1v2h-1zM584 426h1v1h-1zM594 426h2v1h-2zM586 437h1v2h-1zM586 445h1v1h-1zM583 439h2v1h-2zM594 439h1v1h-1zM589 437h1v2h-1zM589 445h1v1h-1zM583 441h2v1h-2zM594 441h1v1h-1zM592 437h1v2h-1zM592 445h1v1h-1zM583 444h2v1h-2zM594 444h1v1h-1zM582 451h1v2h-1zM582 463h1v1h-1zM580 454h2v1h-2zM589 454h2v1h-2zM585 451h1v2h-1zM585 463h1v1h-1zM580 457h2v1h-2zM589 457h2v1h-2zM588 451h1v2h-1zM588 463h1v1h-1zM580 461h2v1h-2zM589 461h2v1h-2zM560 452h1v2h-1zM560 463h1v1h-1zM559 455h1v1h-1zM566 455h1v1h-1zM563 452h1v2h-1zM563 463h1v1h-1zM559 458h1v1h-1zM566 458h1v1h-1zM565 452h1v2h-1zM565 463h1v1h-1zM559 461h1v1h-1zM566 461h1v1h-1zM524 446h1v1h-1zM524 455h1v2h-1zM522 448h1v1h-1zM529 448h1v1h-1zM526 446h1v1h-1zM526 455h1v2h-1zM522 451h1v1h-1zM529 451h1v1h-1zM528 446h1v1h-1zM528 455h1v2h-1zM522 453h1v1h-1zM529 453h1v1h-1zM563 472h1v1h-1zM563 478h1v1h-1zM561 473h1v1h-1zM569 473h2v1h-2zM565 472h1v1h-1zM565 478h1v1h-1zM561 475h1v1h-1zM569 475h2v1h-2zM568 472h1v1h-1zM568 478h1v1h-1zM561 477h1v1h-1zM569 477h2v1h-2zM591 469h1v2h-1zM591 477h1v2h-1zM589 471h1v1h-1zM597 471h2v1h-2zM593 469h1v2h-1zM593 477h1v2h-1zM589 473h1v1h-1zM597 473h2v1h-2zM596 469h1v2h-1zM596 477h1v2h-1zM589 476h1v1h-1zM597 476h2v1h-2zM534 460h2v1h-2zM546 460h2v1h-2zM534 464h2v1h-2zM546 464h2v1h-2zM534 468h2v1h-2zM546 468h2v1h-2zM534 472h2v1h-2zM546 472h2v1h-2zM534 476h2v1h-2zM546 476h2v1h-2zM546 574h13v8h-13zM565 570h9v13h-9zM546 606h13v9h-13zM565 606h9v12h-9zM615 569h1v1h-1zM615 576h1v1h-1zM614 571h1v1h-1zM619 571h1v1h-1zM618 569h1v1h-1zM618 576h1v1h-1zM614 574h1v1h-1zM619 574h1v1h-1zM604 611h3v1h-3zM616 611h3v1h-3zM604 615h3v1h-3zM616 615h3v1h-3zM604 619h3v1h-3zM616 619h3v1h-3zM730 347h11v12h-11zM776 429h1v3h-1zM776 447h1v3h-1zM779 429h1v3h-1zM779 447h1v3h-1zM783 429h1v3h-1zM783 447h1v3h-1zM786 429h1v3h-1zM786 447h1v3h-1zM789 429h1v3h-1zM789 447h1v3h-1zM793 429h1v3h-1zM793 447h1v3h-1zM796 429h1v3h-1zM796 447h1v3h-1zM799 429h1v3h-1zM799 447h1v3h-1zM803 429h1v3h-1zM803 447h1v3h-1zM806 429h1v3h-1zM806 447h1v3h-1zM809 429h1v3h-1zM809 447h1v3h-1zM813 429h1v3h-1zM813 447h1v3h-1zM816 429h1v3h-1zM816 447h1v3h-1zM847 423h3v1h-3zM847 426h3v1h-3zM839 431h4v4h-4zM839 437h4v4h-4zM845 434h7v3h-7zM845 439h7v3h-7zM874 433h1v3h-1zM874 450h1v3h-1zM877 433h1v3h-1zM877 450h1v3h-1zM880 433h1v3h-1zM880 450h1v3h-1zM884 433h1v3h-1zM884 450h1v3h-1zM887 433h1v3h-1zM887 450h1v3h-1zM890 433h1v3h-1zM890 450h1v3h-1zM893 433h1v3h-1zM893 450h1v3h-1zM896 433h1v3h-1zM896 450h1v3h-1zM900 433h1v3h-1zM900 450h1v3h-1zM903 433h1v3h-1zM903 450h1v3h-1zM906 433h1v3h-1zM906 450h1v3h-1zM909 433h1v3h-1zM909 450h1v3h-1zM912 433h1v3h-1zM912 450h1v3h-1zM916 433h1v3h-1zM916 450h1v3h-1zM919 433h1v3h-1zM919 450h1v3h-1zM922 433h1v3h-1zM922 450h1v3h-1zM766 459h4v2h-4zM766 462h4v2h-4zM775 459h2v5h-2zM778 459h2v5h-2zM912 461h4v4h-4zM912 466h4v4h-4zM918 461h3v4h-3zM918 466h3v4h-3zM759 482h9v7h-9zM847 517h3v2h-3zM847 525h3v2h-3zM844 531h2v5h-2zM844 548h2v5h-2zM847 565h3v3h-3zM898 508h3v3h-3zM898 573h3v3h-3zM785 534h1v3h-1zM793 535h3v5h-3zM789 541h2v5h-2zM801 541h3v5h-3zM821 541h3v5h-3zM831 543h2v3h-2zM785 543h1v3h-1zM907 529h2v4h-2zM916 530h3v5h-3zM907 538h2v4h-2zM911 536h3v5h-3zM924 536h2v5h-2zM944 536h2v5h-2zM954 538h1v4h-1zM726 534h1v3h-1zM729 534h1v3h-1zM726 542h1v4h-1zM729 542h1v4h-1zM726 550h4v2h-4zM726 554h4v2h-4zM721 579h6v4h-6zM721 603h1v3h-1zM723 603h1v3h-1zM727 603h1v3h-1zM729 603h1v3h-1zM721 609h1v3h-1zM723 609h1v3h-1zM727 609h1v3h-1zM729 609h1v3h-1zM721 615h1v3h-1zM723 615h1v3h-1zM727 615h1v3h-1zM729 615h1v3h-1zM721 621h1v3h-1zM723 621h1v3h-1zM727 621h1v3h-1zM729 621h1v3h-1zM783 621h1v3h-1zM786 621h1v3h-1zM795 619h14v9h-14zM817 620h2v5h-2zM817 626h2v5h-2zM822 620h2v5h-2zM822 626h2v5h-2zM827 620h2v5h-2zM827 626h2v5h-2zM832 626h2v5h-2zM837 620h2v5h-2zM837 626h2v5h-2zM842 620h2v5h-2zM847 620h2v5h-2zM847 621h5v4h-5zM865 619h13v9h-13z"/><path fill="#808080" d="M509 391h3v9h-3zM531 391h2v9h-2zM560 400h4v3h-4zM609 360h5v4h-5zM472 426h6v6h-6zM508 428h3v3h-3zM465 440h12v12h-12zM485 446h7v7h-7zM459 468h6v7h-6zM468 468h6v7h-6zM486 462h6v16h-6zM542 433h4v3h-4zM588 422h4v4h-4zM587 440h4v3h-4zM584 456h4v4h-4zM561 456h4v4h-4zM525 449h3v4h-3zM564 474h3v3h-3zM538 462h5v5h-5zM538 469h5v5h-5zM621 417h7v4h-7zM546 590h13v8h-13zM562 588h2v3h-2zM568 586h2v2h-2zM563 593h2v3h-2zM563 598h2v2h-2zM568 600h3v3h-3zM611 610h1v10h-1zM772 429h3v3h-3zM818 429h3v3h-3zM772 446h3v4h-3zM818 446h3v4h-3zM839 393h8v13h-8zM837 411h15v3h-15zM832 430h3v28h-3zM854 435h4v18h-4zM832 462h24v3h-24zM870 433h3v3h-3zM924 433h3v3h-3zM870 450h3v3h-3zM924 450h3v3h-3zM934 426h18v3h-18zM934 462h18v3h-18zM749 480h5v16h-5zM771 479h16v7h-16zM867 479h10v7h-10zM885 479h10v7h-10zM931 475h19v5h-19zM749 584h7v22h-7zM763 600h16v7h-16zM848 600h16v7h-16zM916 599h8v8h-8zM929 599h8v8h-8zM749 480h6v16h-6zM847 557h3v2h-3zM826 535h3v5h-3zM831 534h2v3h-2zM949 530h2v5h-2zM954 529h1v4h-1zM726 579h3v4h-3zM847 628h5v4h-5zM891 622h9v13h-9zM894 616h3v2h-3z"/><path fill="#008284" d="M592 385h4v4h-4zM600 385h5v4h-5zM854 512h13v4h-13zM854 520h13v4h-13zM854 528h13v4h-13zM854 536h13v4h-13zM854 544h13v4h-13zM854 552h13v5h-13zM854 560h13v5h-13zM854 569h13v4h-13zM898 525h2v3h-2zM898 541h2v3h-2zM898 557h2v3h-2zM813 535h3v5h-3zM936 530h2v5h-2z"/><path fill="#006a33" d="M801 619h2v9h-2zM795 623h14v2h-14zM812 620h2v5h-2zM812 626h2v5h-2zM832 620h2v5h-2zM842 626h2v5h-2zM847 626h2v5h-2z"/><path fill="none" stroke="#f0f0f0" stroke-width="1" d="M515.5 388.5h12v11h-12zM515.5 383.5h2v4h-2zM519.5 383.5h1v4h-1zM522.5 383.5h2v4h-2zM525.5 383.5h2v4h-2zM509.5 403.5h5v2h-5zM516.5 403.5h7v2h-7zM525.5 403.5h5v2h-5zM551.5 394.5h6v3h-6zM551.5 398.5h6v2h-6zM551.5 402.5h6v1h-6zM559.5 395.5h5v8h-5zM566.5 396.5h2v4h-2zM480.5 416.5h19v15h-19zM472.5 414.5h6v2h-6zM469.5 419.5h6v2h-6zM464.5 426.5h13v5h-13zM502.5 416.5h2v9h-2zM501.5 427.5h10v4h-10zM458.5 433.5h25v25h-25zM454.5 438.5h2v2h-2zM454.5 442.5h2v3h-2zM454.5 446.5h2v3h-2zM454.5 450.5h2v3h-2zM454.5 455.5h2v3h-2zM485.5 435.5h4v8h-4zM485.5 446.5h6v12h-6zM494.5 435.5h16v17h-16zM459.5 461.5h6v13h-6zM468.5 461.5h6v13h-6zM477.5 461.5h5v8h-5zM485.5 462.5h17v16h-17zM505.5 459.5h5v10h-5zM506.5 472.5h3v7h-3zM455.5 477.5h8v3h-8zM467.5 477.5h11v3h-11zM481.5 480.5h14v1h-14zM498.5 480.5h5v1h-5zM454.5 463.5h2v3h-2zM454.5 467.5h2v3h-2zM454.5 471.5h2v3h-2zM559.5 425.5h11v13h-11zM538.5 429.5h11v9h-11zM583.5 419.5h12v9h-12zM583.5 437.5h12v9h-12zM580.5 451.5h11v13h-11zM558.5 452.5h9v12h-9zM521.5 445.5h9v11h-9zM560.5 471.5h10v8h-10zM588.5 468.5h10v11h-10zM533.5 457.5h15v22h-15zM567.5 419.5h8v3h-8zM528.5 468.5h2v6h-2zM545.5 420.5h5v3h-5zM554.5 466.5h6v2h-6zM525.5 420.5h7v3h-7zM571.5 453.5h5v2h-5zM526.5 428.5h8v3h-8zM561.5 414.5h3v7h-3zM553.5 421.5h3v7h-3zM518.5 475.5h6v3h-6zM517.5 431.5h3v6h-3zM550.5 479.5h7v3h-7zM520.5 416.5h6v2h-6zM594.5 457.5h2v5h-2zM577.5 438.5h3v6h-3zM527.5 433.5h5v2h-5zM540.5 413.5h5v3h-5zM577.5 428.5h3v6h-3zM519.5 462.5h6v2h-6zM571.5 446.5h3v5h-3zM551.5 470.5h2v5h-2zM556.5 440.5h3v6h-3zM542.5 444.5h8v3h-8zM567.5 415.5h5v2h-5zM535.5 418.5h8v3h-8zM578.5 420.5h2v6h-2zM581.5 476.5h3v6h-3zM574.5 467.5h5v2h-5zM542.5 452.5h6v3h-6zM551.5 455.5h2v6h-2zM537.5 444.5h3v6h-3zM574.5 460.5h3v5h-3zM561.5 440.5h7v3h-7zM562.5 466.5h7v3h-7zM533.5 414.5h5v2h-5zM518.5 420.5h5v2h-5zM585.5 413.5h7v3h-7zM525.5 437.5h3v6h-3zM578.5 413.5h5v2h-5zM538.5 424.5h5v2h-5zM578.5 472.5h5v2h-5zM517.5 449.5h2v6h-2zM528.5 476.5h2v6h-2zM573.5 426.5h2v6h-2zM585.5 431.5h7v3h-7zM552.5 416.5h6v3h-6zM594.5 449.5h5v2h-5zM523.5 466.5h3v5h-3zM530.5 439.5h5v3h-5zM517.5 424.5h6v2h-6zM529.5 460.5h2v5h-2zM564.5 445.5h4v2h-4zM572.5 436.5h2v6h-2zM573.5 478.5h5v2h-5zM570.5 459.5h2v4h-2zM533.5 444.5h2v6h-2zM518.5 441.5h4v2h-4zM533.5 452.5h5v2h-5zM519.5 480.5h6v2h-6zM597.5 435.5h2v5h-2zM555.5 431.5h2v6h-2zM593.5 464.5h4v2h-4zM597.5 442.5h2v4h-2zM620.5 413.5h9v12h-9zM633.5 412.5h3v6h-3zM637.5 412.5h3v6h-3zM641.5 412.5h3v6h-3zM646.5 412.5h3v6h-3zM650.5 412.5h3v6h-3zM654.5 412.5h3v6h-3zM659.5 412.5h3v6h-3zM663.5 412.5h3v6h-3zM668.5 412.5h3v6h-3zM676.5 412.5h3v6h-3zM680.5 412.5h3v6h-3zM684.5 412.5h3v6h-3zM688.5 412.5h3v6h-3zM692.5 412.5h3v6h-3zM696.5 412.5h3v6h-3zM700.5 412.5h3v6h-3zM705.5 412.5h3v6h-3zM633.5 420.5h3v6h-3zM638.5 420.5h3v6h-3zM642.5 420.5h3v6h-3zM646.5 420.5h3v6h-3zM650.5 420.5h3v6h-3zM655.5 420.5h3v6h-3zM660.5 420.5h3v6h-3zM665.5 420.5h3v6h-3zM669.5 420.5h3v6h-3zM673.5 420.5h3v6h-3zM677.5 420.5h3v6h-3zM682.5 420.5h3v6h-3zM687.5 420.5h3v6h-3zM691.5 420.5h3v6h-3zM696.5 420.5h3v6h-3zM701.5 420.5h3v6h-3zM705.5 420.5h3v6h-3zM709.5 420.5h3v6h-3zM714.5 420.5h3v6h-3zM718.5 420.5h3v6h-3zM616.5 428.5h4v2h-4zM616.5 432.5h4v1h-4zM616.5 436.5h4v1h-4zM616.5 439.5h4v2h-4zM616.5 442.5h4v2h-4zM616.5 446.5h4v1h-4zM616.5 450.5h4v1h-4zM616.5 453.5h4v2h-4zM616.5 456.5h4v2h-4zM616.5 460.5h4v1h-4zM616.5 464.5h4v1h-4zM616.5 467.5h4v2h-4zM616.5 470.5h4v2h-4zM616.5 474.5h4v1h-4zM616.5 478.5h4v1h-4zM616.5 481.5h4v2h-4zM616.5 484.5h4v2h-4zM616.5 488.5h4v1h-4zM616.5 492.5h4v1h-4zM616.5 495.5h4v2h-4zM616.5 500.5h4v2h-4zM616.5 504.5h4v1h-4zM616.5 508.5h4v1h-4zM616.5 511.5h4v2h-4zM616.5 514.5h4v2h-4zM616.5 518.5h4v1h-4zM616.5 522.5h4v1h-4zM616.5 525.5h4v2h-4zM616.5 532.5h4v1h-4zM616.5 536.5h4v1h-4zM616.5 539.5h4v2h-4zM616.5 542.5h4v2h-4zM616.5 550.5h4v1h-4zM616.5 553.5h4v2h-4zM616.5 556.5h4v2h-4zM727.5 431.5h2v5h-2zM727.5 461.5h2v5h-2zM727.5 468.5h2v6h-2zM727.5 476.5h2v5h-2zM727.5 506.5h2v5h-2zM727.5 521.5h2v5h-2zM624.5 533.5h5v2h-5zM631.5 533.5h6v2h-6zM639.5 533.5h5v2h-5zM646.5 533.5h5v2h-5zM653.5 533.5h7v2h-7zM663.5 533.5h4v2h-4zM669.5 533.5h8v2h-8zM679.5 533.5h6v2h-6zM687.5 533.5h8v2h-8zM697.5 533.5h6v2h-6zM705.5 533.5h6v2h-6zM713.5 533.5h6v2h-6zM543.5 543.5h2v6h-2zM562.5 494.5h2v5h-2zM574.5 537.5h7v3h-7zM519.5 548.5h3v5h-3zM590.5 538.5h7v3h-7zM506.5 519.5h6v3h-6zM546.5 492.5h2v5h-2zM527.5 545.5h3v7h-3zM553.5 523.5h3v7h-3zM580.5 499.5h3v8h-3zM536.5 491.5h2v5h-2zM578.5 546.5h3v7h-3zM558.5 520.5h6v3h-6zM555.5 544.5h2v5h-2zM532.5 540.5h6v2h-6zM550.5 551.5h5v2h-5zM571.5 489.5h3v5h-3zM530.5 499.5h5v3h-5zM503.5 546.5h8v3h-8zM539.5 501.5h6v3h-6zM593.5 548.5h3v7h-3zM550.5 507.5h6v2h-6zM505.5 512.5h7v3h-7zM528.5 504.5h6v3h-6zM510.5 537.5h2v6h-2zM559.5 551.5h6v3h-6zM508.5 494.5h3v6h-3zM573.5 501.5h5v3h-5zM508.5 527.5h7v3h-7zM576.5 489.5h2v6h-2zM585.5 543.5h3v7h-3zM584.5 490.5h2v6h-2zM523.5 495.5h3v6h-3zM517.5 505.5h6v2h-6zM556.5 498.5h3v7h-3zM589.5 499.5h8v3h-8zM565.5 541.5h5v2h-5zM560.5 512.5h2v5h-2zM560.5 490.5h6v2h-6zM562.5 527.5h6v3h-6zM534.5 551.5h6v2h-6zM540.5 538.5h5v3h-5zM514.5 516.5h3v8h-3zM566.5 498.5h2v6h-2zM548.5 513.5h3v8h-3zM511.5 489.5h8v3h-8zM563.5 533.5h6v3h-6zM503.5 533.5h3v7h-3zM519.5 537.5h5v3h-5zM548.5 529.5h3v7h-3zM506.5 505.5h7v3h-7zM567.5 547.5h3v7h-3zM548.5 543.5h3v6h-3zM540.5 491.5h3v7h-3zM573.5 547.5h3v5h-3zM552.5 490.5h6v3h-6zM508.5 533.5h6v2h-6zM593.5 494.5h5v3h-5zM528.5 492.5h6v2h-6zM561.5 543.5h2v5h-2zM559.5 507.5h6v3h-6zM556.5 533.5h3v8h-3zM506.5 551.5h6v2h-6zM564.5 512.5h5v2h-5zM502.5 497.5h3v6h-3zM513.5 499.5h7v3h-7zM594.5 505.5h6v2h-6zM594.5 489.5h5v2h-5zM552.5 498.5h2v5h-2zM554.5 512.5h2v6h-2zM515.5 494.5h6v2h-6zM535.5 547.5h5v2h-5zM516.5 542.5h7v3h-7zM502.5 526.5h2v5h-2zM588.5 490.5h3v6h-3zM594.5 544.5h5v2h-5zM573.5 542.5h4v2h-4zM521.5 489.5h4v2h-4zM565.5 516.5h4v2h-4zM583.5 553.5h6v2h-6zM550.5 538.5h4v2h-4zM580.5 489.5h2v6h-2zM527.5 537.5h2v6h-2zM542.5 552.5h4v2h-4zM585.5 504.5h5v2h-5zM503.5 489.5h5v2h-5zM548.5 499.5h2v6h-2zM515.5 549.5h2v4h-2zM502.5 517.5h2v5h-2zM598.5 549.5h2v5h-2zM613.5 568.5h7v9h-7zM603.5 608.5h16v13h-16zM595.5 615.5h5v2h-5zM604.5 597.5h7v3h-7zM591.5 572.5h3v7h-3zM603.5 576.5h7v3h-7zM592.5 605.5h3v8h-3zM609.5 586.5h7v3h-7zM601.5 583.5h2v6h-2zM618.5 593.5h3v5h-3zM595.5 622.5h2v6h-2zM596.5 571.5h5v2h-5zM590.5 586.5h7v3h-7zM589.5 597.5h7v3h-7zM618.5 584.5h2v5h-2zM602.5 623.5h7v3h-7zM598.5 604.5h6v2h-6zM587.5 613.5h2v6h-2zM613.5 579.5h5v3h-5zM608.5 592.5h7v3h-7zM611.5 602.5h5v2h-5zM589.5 581.5h6v2h-6zM612.5 624.5h5v3h-5zM590.5 592.5h8v3h-8zM604.5 570.5h7v3h-7zM605.5 582.5h5v2h-5zM596.5 575.5h5v3h-5zM589.5 622.5h3v5h-3zM602.5 625.5h7v2h-7zM611.5 625.5h6v2h-6zM619.5 625.5h7v2h-7zM628.5 625.5h7v2h-7zM637.5 625.5h7v2h-7zM647.5 625.5h7v2h-7zM664.5 625.5h5v2h-5zM672.5 625.5h5v2h-5zM679.5 625.5h7v2h-7zM689.5 625.5h7v2h-7zM728.5 429.5h2v6h-2zM728.5 437.5h2v5h-2zM728.5 445.5h2v5h-2zM728.5 459.5h2v6h-2zM728.5 482.5h2v5h-2zM728.5 489.5h2v6h-2zM771.5 428.5h50v21h-50zM838.5 417.5h9v3h-9zM838.5 422.5h5v2h-5zM846.5 422.5h4v5h-4zM838.5 426.5h5v2h-5zM838.5 430.5h5v11h-5zM844.5 433.5h8v9h-8zM838.5 430.5h5v3h-5zM840.5 444.5h9v14h-9zM869.5 432.5h58v21h-58zM746.5 461.5h2v5h-2zM750.5 458.5h3v8h-3zM760.5 458.5h3v8h-3zM765.5 458.5h5v6h-5zM774.5 458.5h6v6h-6zM783.5 458.5h6v2h-6zM783.5 462.5h6v2h-6zM792.5 458.5h6v2h-6zM792.5 462.5h6v2h-6zM802.5 458.5h6v2h-6zM802.5 462.5h6v2h-6zM810.5 458.5h5v2h-5zM810.5 462.5h5v2h-5zM822.5 458.5h2v6h-2zM826.5 458.5h2v6h-2zM864.5 461.5h2v5h-2zM869.5 461.5h2v5h-2zM873.5 461.5h2v5h-2zM877.5 461.5h2v5h-2zM881.5 461.5h2v5h-2zM886.5 461.5h2v5h-2zM890.5 461.5h2v5h-2zM894.5 461.5h2v5h-2zM898.5 461.5h2v5h-2zM903.5 461.5h7v2h-7zM903.5 465.5h7v1h-7zM912.5 461.5h3v9h-3zM917.5 461.5h4v9h-4zM923.5 461.5h2v5h-2zM927.5 461.5h2v5h-2zM727.5 482.5h3v3h-3zM727.5 487.5h3v3h-3zM727.5 493.5h3v2h-3zM727.5 498.5h3v3h-3zM727.5 503.5h3v3h-3zM727.5 508.5h3v3h-3zM727.5 514.5h3v2h-3zM727.5 519.5h3v3h-3zM727.5 524.5h3v3h-3zM727.5 529.5h3v3h-3zM720.5 533.5h2v4h-2zM725.5 533.5h5v4h-5zM720.5 540.5h2v10h-2zM725.5 541.5h5v5h-5zM725.5 549.5h5v7h-5zM725.5 566.5h5v2h-5zM720.5 572.5h6v11h-6zM720.5 585.5h4v3h-4zM726.5 585.5h4v3h-4zM720.5 591.5h4v3h-4zM726.5 591.5h4v3h-4zM720.5 597.5h4v3h-4zM726.5 597.5h4v3h-4zM720.5 602.5h4v4h-4zM726.5 602.5h4v4h-4zM720.5 608.5h4v4h-4zM726.5 608.5h4v4h-4zM720.5 614.5h4v4h-4zM726.5 614.5h4v4h-4zM720.5 620.5h4v4h-4zM726.5 620.5h4v4h-4zM738.5 541.5h4v3h-4zM738.5 545.5h4v3h-4zM772.5 620.5h2v5h-2zM776.5 619.5h3v8h-3zM781.5 619.5h6v9h-6zM782.5 620.5h5v4h-5zM789.5 619.5h3v8h-3zM794.5 619.5h14v8h-14zM811.5 619.5h3v13h-3zM816.5 619.5h3v13h-3zM821.5 619.5h3v13h-3zM826.5 619.5h3v13h-3zM831.5 619.5h3v13h-3zM836.5 619.5h3v13h-3zM841.5 619.5h3v13h-3zM846.5 619.5h3v13h-3zM847.5 620.5h5v12h-5z"/><path fill="none" stroke="#f0f0f0" stroke-width="0.9" d="M748.5 475.5h215v131h-215z"/><path fill="#ffd83a" d="M515 383h3v2h-3zM515 386h3v2h-3zM519 383h2v2h-2zM519 386h2v2h-2zM522 383h3v2h-3zM522 386h3v2h-3zM525 383h3v2h-3zM525 386h3v2h-3zM509 403h2v3h-2zM513 403h2v3h-2zM516 403h3v3h-3zM521 403h3v3h-3zM525 403h2v3h-2zM529 403h2v3h-2zM551 394h2v4h-2zM556 394h2v4h-2zM551 398h2v3h-2zM556 398h2v3h-2zM551 402h2v2h-2zM556 402h2v2h-2zM566 396h3v2h-3zM566 399h3v2h-3zM472 414h2v3h-2zM477 414h2v3h-2zM469 419h2v3h-2zM474 419h2v3h-2zM502 416h3v3h-3zM502 423h3v3h-3zM454 438h2v3h-2zM455 438h2v3h-2zM454 442h3v2h-3zM454 444h3v2h-3zM454 446h3v2h-3zM454 448h3v2h-3zM454 450h3v2h-3zM454 452h3v2h-3zM454 455h3v2h-3zM454 457h3v2h-3zM506 472h4v3h-4zM506 477h4v3h-4zM455 477h3v4h-3zM461 477h3v4h-3zM467 477h4v4h-4zM475 477h4v4h-4zM481 480h5v2h-5zM491 480h5v2h-5zM498 480h2v2h-2zM502 480h2v2h-2zM454 463h3v2h-3zM454 465h3v2h-3zM454 467h3v2h-3zM454 469h3v2h-3zM454 471h3v2h-3zM454 473h3v2h-3zM567 419h3v4h-3zM528 468h3v2h-3zM528 473h3v2h-3zM545 420h2v4h-2zM549 420h2v4h-2zM554 466h2v3h-2zM525 420h3v4h-3zM530 420h3v4h-3zM571 453h2v3h-2zM575 453h2v3h-2zM526 428h3v4h-3zM532 428h3v4h-3zM561 414h4v3h-4zM561 419h4v3h-4zM553 421h4v3h-4zM553 426h4v3h-4zM518 475h2v4h-2zM523 475h2v4h-2zM517 431h4v2h-4zM517 436h4v2h-4zM550 479h3v4h-3zM555 479h3v4h-3zM520 416h2v3h-2zM525 416h2v3h-2zM594 457h3v2h-3zM594 461h3v2h-3zM577 438h4v2h-4zM577 443h4v2h-4zM527 433h2v3h-2zM540 413h2v4h-2zM544 413h2v4h-2zM577 428h4v2h-4zM577 433h4v2h-4zM519 462h2v3h-2zM524 462h2v3h-2zM571 446h4v2h-4zM571 450h4v2h-4zM551 470h3v2h-3zM556 440h4v2h-4zM556 445h4v2h-4zM542 444h3v4h-3zM548 444h3v4h-3zM567 415h2v3h-2zM571 415h2v3h-2zM535 418h3v4h-3zM541 418h3v4h-3zM578 420h3v2h-3zM578 425h3v2h-3zM581 476h4v2h-4zM581 481h4v2h-4zM574 467h2v3h-2zM542 452h2v4h-2zM547 452h2v4h-2zM551 455h3v2h-3zM551 460h3v2h-3zM537 444h4v2h-4zM537 449h4v2h-4zM574 460h4v2h-4zM561 440h3v4h-3zM562 466h3v4h-3zM567 466h3v4h-3zM533 414h2v3h-2zM518 420h2v3h-2zM522 420h2v3h-2zM585 413h3v4h-3zM590 413h3v4h-3zM525 437h4v2h-4zM525 442h4v2h-4zM578 413h2v3h-2zM582 413h2v3h-2zM538 424h2v3h-2zM542 424h2v3h-2zM578 472h2v3h-2zM582 472h2v3h-2zM517 454h3v2h-3zM528 476h3v2h-3zM528 481h3v2h-3zM573 426h3v2h-3zM573 431h3v2h-3zM585 431h3v4h-3zM590 431h3v4h-3zM552 416h2v4h-2zM557 416h2v4h-2zM594 449h2v3h-2zM598 449h2v3h-2zM523 470h4v2h-4zM530 439h2v4h-2zM534 439h2v4h-2zM517 424h2v3h-2zM522 424h2v3h-2zM529 460h3v2h-3zM529 464h3v2h-3zM564 445h2v3h-2zM567 445h2v3h-2zM572 436h3v2h-3zM573 478h2v3h-2zM577 478h2v3h-2zM570 459h3v2h-3zM533 444h3v2h-3zM533 449h3v2h-3zM518 441h2v3h-2zM521 441h2v3h-2zM533 452h2v3h-2zM537 452h2v3h-2zM519 480h2v3h-2zM524 480h2v3h-2zM597 435h3v2h-3zM555 431h3v2h-3zM555 436h3v2h-3zM593 464h2v3h-2zM596 464h2v3h-2zM597 442h3v2h-3zM597 445h3v2h-3zM633 412h4v2h-4zM633 417h4v2h-4zM637 412h4v2h-4zM637 417h4v2h-4zM641 412h4v2h-4zM641 417h4v2h-4zM646 412h4v2h-4zM646 417h4v2h-4zM650 412h4v2h-4zM650 417h4v2h-4zM654 412h4v2h-4zM654 417h4v2h-4zM659 412h4v2h-4zM659 417h4v2h-4zM663 412h4v2h-4zM663 417h4v2h-4zM668 412h4v2h-4zM676 412h4v2h-4zM676 417h4v2h-4zM680 412h4v2h-4zM680 417h4v2h-4zM684 412h4v2h-4zM684 417h4v2h-4zM688 412h4v2h-4zM688 417h4v2h-4zM692 412h4v2h-4zM692 417h4v2h-4zM696 412h4v2h-4zM696 417h4v2h-4zM700 412h4v2h-4zM700 417h4v2h-4zM705 412h4v2h-4zM705 417h4v2h-4zM633 420h4v2h-4zM633 425h4v2h-4zM638 425h4v2h-4zM642 420h4v2h-4zM642 425h4v2h-4zM646 420h4v2h-4zM646 425h4v2h-4zM650 420h4v2h-4zM650 425h4v2h-4zM655 420h4v2h-4zM655 425h4v2h-4zM660 420h4v2h-4zM660 425h4v2h-4zM665 420h4v2h-4zM665 425h4v2h-4zM669 420h4v2h-4zM669 425h4v2h-4zM673 420h4v2h-4zM673 425h4v2h-4zM677 420h4v2h-4zM677 425h4v2h-4zM682 420h4v2h-4zM682 425h4v2h-4zM687 420h4v2h-4zM687 425h4v2h-4zM691 420h4v2h-4zM691 425h4v2h-4zM696 420h4v2h-4zM696 425h4v2h-4zM701 420h4v2h-4zM701 425h4v2h-4zM705 420h4v2h-4zM705 425h4v2h-4zM709 420h4v2h-4zM709 425h4v2h-4zM714 420h4v2h-4zM714 425h4v2h-4zM718 420h4v2h-4zM718 425h4v2h-4zM616 428h2v3h-2zM619 428h2v3h-2zM616 432h2v2h-2zM619 432h2v2h-2zM616 436h2v2h-2zM619 436h2v2h-2zM616 439h2v3h-2zM619 439h2v3h-2zM616 442h2v3h-2zM619 442h2v3h-2zM616 446h2v2h-2zM619 446h2v2h-2zM616 450h2v2h-2zM619 450h2v2h-2zM616 453h2v3h-2zM619 453h2v3h-2zM616 456h2v3h-2zM619 456h2v3h-2zM616 460h2v2h-2zM619 460h2v2h-2zM616 464h2v2h-2zM619 464h2v2h-2zM616 467h2v3h-2zM619 467h2v3h-2zM616 470h2v3h-2zM619 470h2v3h-2zM616 474h2v2h-2zM619 474h2v2h-2zM616 478h2v2h-2zM619 478h2v2h-2zM616 481h2v3h-2zM619 481h2v3h-2zM616 484h2v3h-2zM619 484h2v3h-2zM616 488h2v2h-2zM619 488h2v2h-2zM616 492h2v2h-2zM619 492h2v2h-2zM616 495h2v3h-2zM619 495h2v3h-2zM616 500h2v3h-2zM619 500h2v3h-2zM616 504h2v2h-2zM619 504h2v2h-2zM616 508h2v2h-2zM619 508h2v2h-2zM616 511h2v3h-2zM619 511h2v3h-2zM616 514h2v3h-2zM619 514h2v3h-2zM616 518h2v2h-2zM619 518h2v2h-2zM616 522h2v2h-2zM619 522h2v2h-2zM616 525h2v3h-2zM619 525h2v3h-2zM616 532h2v2h-2zM619 532h2v2h-2zM616 536h2v2h-2zM619 536h2v2h-2zM616 539h2v3h-2zM619 539h2v3h-2zM616 542h2v3h-2zM619 542h2v3h-2zM616 550h2v2h-2zM619 550h2v2h-2zM616 553h2v3h-2zM619 553h2v3h-2zM616 556h2v3h-2zM619 556h2v3h-2zM727 431h3v2h-3zM727 435h3v2h-3zM727 461h3v2h-3zM727 465h3v2h-3zM727 468h3v2h-3zM727 473h3v2h-3zM727 476h3v2h-3zM727 480h3v2h-3zM727 506h3v2h-3zM727 510h3v2h-3zM727 521h3v2h-3zM727 525h3v2h-3zM624 533h2v3h-2zM628 533h2v3h-2zM631 533h2v3h-2zM636 533h2v3h-2zM639 533h2v3h-2zM643 533h2v3h-2zM646 533h2v3h-2zM650 533h2v3h-2zM653 533h3v3h-3zM658 533h3v3h-3zM663 533h2v3h-2zM666 533h2v3h-2zM669 533h3v3h-3zM675 533h3v3h-3zM679 533h2v3h-2zM684 533h2v3h-2zM687 533h3v3h-3zM693 533h3v3h-3zM697 533h2v3h-2zM702 533h2v3h-2zM705 533h2v3h-2zM710 533h2v3h-2zM713 533h2v3h-2zM718 533h2v3h-2zM543 543h3v2h-3zM543 548h3v2h-3zM562 494h3v2h-3zM574 537h3v4h-3zM519 548h4v2h-4zM519 552h4v2h-4zM590 538h3v4h-3zM595 538h3v4h-3zM506 519h2v4h-2zM511 519h2v4h-2zM546 492h3v2h-3zM546 496h3v2h-3zM527 545h4v3h-4zM527 550h4v3h-4zM553 523h4v3h-4zM553 528h4v3h-4zM580 505h4v3h-4zM536 491h3v2h-3zM578 551h4v3h-4zM558 520h2v4h-2zM555 544h3v2h-3zM555 548h3v2h-3zM532 540h2v3h-2zM537 540h2v3h-2zM550 551h2v3h-2zM554 551h2v3h-2zM571 489h4v2h-4zM571 493h4v2h-4zM530 499h2v4h-2zM534 499h2v4h-2zM503 546h3v4h-3zM509 546h3v4h-3zM539 501h2v4h-2zM593 548h4v3h-4zM593 553h4v3h-4zM550 507h2v3h-2zM555 507h2v3h-2zM505 512h3v4h-3zM510 512h3v4h-3zM528 504h2v4h-2zM533 504h2v4h-2zM510 537h3v2h-3zM510 542h3v2h-3zM559 551h2v4h-2zM564 551h2v4h-2zM508 494h4v2h-4zM508 499h4v2h-4zM573 501h2v4h-2zM577 501h2v4h-2zM508 527h3v4h-3zM513 527h3v4h-3zM576 489h3v2h-3zM576 494h3v2h-3zM585 543h4v3h-4zM585 548h4v3h-4zM584 490h3v2h-3zM584 495h3v2h-3zM523 495h4v2h-4zM523 500h4v2h-4zM517 505h2v3h-2zM556 498h4v3h-4zM556 503h4v3h-4zM589 499h3v4h-3zM595 499h3v4h-3zM565 541h2v3h-2zM569 541h2v3h-2zM560 516h3v2h-3zM565 490h2v3h-2zM562 527h2v4h-2zM534 551h2v3h-2zM539 551h2v3h-2zM540 538h2v4h-2zM544 538h2v4h-2zM514 516h4v3h-4zM514 522h4v3h-4zM566 498h3v2h-3zM566 503h3v2h-3zM548 513h4v3h-4zM548 519h4v3h-4zM511 489h3v4h-3zM517 489h3v4h-3zM563 533h2v4h-2zM568 533h2v4h-2zM503 538h4v3h-4zM519 537h2v4h-2zM523 537h2v4h-2zM548 529h4v3h-4zM548 534h4v3h-4zM506 505h3v4h-3zM511 505h3v4h-3zM567 547h4v3h-4zM548 548h4v2h-4zM540 491h4v3h-4zM540 496h4v3h-4zM573 547h4v2h-4zM573 551h4v2h-4zM552 490h2v4h-2zM557 490h2v4h-2zM508 533h2v3h-2zM513 533h2v3h-2zM593 494h2v4h-2zM597 494h2v4h-2zM528 492h2v3h-2zM533 492h2v3h-2zM561 543h3v2h-3zM561 547h3v2h-3zM559 507h2v4h-2zM556 533h4v3h-4zM556 539h4v3h-4zM511 551h2v3h-2zM564 512h2v3h-2zM568 512h2v3h-2zM502 497h4v2h-4zM502 502h4v2h-4zM513 499h3v4h-3zM518 499h3v4h-3zM594 505h2v3h-2zM599 505h2v3h-2zM594 489h2v3h-2zM598 489h2v3h-2zM552 498h3v2h-3zM552 502h3v2h-3zM554 512h3v2h-3zM554 517h3v2h-3zM520 494h2v3h-2zM535 547h2v3h-2zM539 547h2v3h-2zM516 542h3v4h-3zM521 542h3v4h-3zM502 526h3v2h-3zM502 530h3v2h-3zM588 490h4v2h-4zM588 495h4v2h-4zM594 544h2v3h-2zM598 544h2v3h-2zM573 542h2v3h-2zM576 542h2v3h-2zM521 489h2v3h-2zM565 516h2v3h-2zM568 516h2v3h-2zM583 553h2v3h-2zM588 553h2v3h-2zM550 538h2v3h-2zM553 538h2v3h-2zM580 489h3v2h-3zM580 494h3v2h-3zM527 537h3v2h-3zM527 542h3v2h-3zM542 552h2v3h-2zM545 552h2v3h-2zM585 504h2v3h-2zM589 504h2v3h-2zM503 489h2v3h-2zM507 489h2v3h-2zM548 499h3v2h-3zM548 504h3v2h-3zM515 549h3v2h-3zM515 552h3v2h-3zM502 517h3v2h-3zM502 521h3v2h-3zM598 549h3v2h-3zM598 553h3v2h-3zM599 615h2v3h-2zM604 597h3v4h-3zM591 572h4v3h-4zM591 577h4v3h-4zM603 576h3v4h-3zM608 576h3v4h-3zM592 605h4v3h-4zM592 611h4v3h-4zM609 586h3v4h-3zM614 586h3v4h-3zM601 583h3v2h-3zM601 588h3v2h-3zM618 593h4v2h-4zM618 597h4v2h-4zM595 622h3v2h-3zM595 627h3v2h-3zM596 571h2v3h-2zM590 586h3v4h-3zM589 597h3v4h-3zM594 597h3v4h-3zM618 584h3v2h-3zM618 588h3v2h-3zM602 623h3v4h-3zM607 623h3v4h-3zM598 604h2v3h-2zM603 604h2v3h-2zM587 613h3v2h-3zM587 618h3v2h-3zM613 579h2v4h-2zM617 579h2v4h-2zM608 592h3v4h-3zM613 592h3v4h-3zM611 602h2v3h-2zM589 581h2v3h-2zM594 581h2v3h-2zM612 624h2v4h-2zM590 592h3v4h-3zM596 592h3v4h-3zM604 570h3v4h-3zM609 570h3v4h-3zM605 582h2v3h-2zM609 582h2v3h-2zM596 575h2v4h-2zM600 575h2v4h-2zM589 622h4v2h-4zM589 626h4v2h-4zM602 625h3v3h-3zM607 625h3v3h-3zM611 625h2v3h-2zM616 625h2v3h-2zM619 625h3v3h-3zM624 625h3v3h-3zM628 625h3v3h-3zM633 625h3v3h-3zM637 625h3v3h-3zM642 625h3v3h-3zM647 625h3v3h-3zM652 625h3v3h-3zM664 625h2v3h-2zM668 625h2v3h-2zM672 625h2v3h-2zM676 625h2v3h-2zM679 625h3v3h-3zM684 625h3v3h-3zM689 625h3v3h-3zM694 625h3v3h-3zM728 429h3v2h-3zM728 434h3v2h-3zM728 437h3v2h-3zM728 441h3v2h-3zM728 445h3v2h-3zM728 449h3v2h-3zM728 459h3v2h-3zM728 464h3v2h-3zM728 482h3v2h-3zM728 486h3v2h-3zM728 489h3v2h-3zM728 494h3v2h-3zM838 417h3v4h-3zM845 417h3v4h-3zM838 422h2v3h-2zM842 422h2v3h-2zM838 426h2v3h-2zM842 426h2v3h-2zM838 430h2v4h-2zM842 430h2v4h-2zM746 461h3v2h-3zM746 465h3v2h-3zM750 458h4v3h-4zM750 464h4v3h-4zM760 458h4v3h-4zM760 464h4v3h-4zM783 458h2v3h-2zM788 458h2v3h-2zM783 462h2v3h-2zM788 462h2v3h-2zM792 458h2v3h-2zM797 458h2v3h-2zM792 462h2v3h-2zM797 462h2v3h-2zM802 458h2v3h-2zM807 458h2v3h-2zM802 462h2v3h-2zM807 462h2v3h-2zM810 458h2v3h-2zM814 458h2v3h-2zM810 462h2v3h-2zM814 462h2v3h-2zM822 458h3v2h-3zM822 463h3v2h-3zM826 458h3v2h-3zM826 463h3v2h-3zM864 461h3v2h-3zM864 465h3v2h-3zM869 461h3v2h-3zM869 465h3v2h-3zM873 461h3v2h-3zM873 465h3v2h-3zM877 461h3v2h-3zM877 465h3v2h-3zM881 461h3v2h-3zM881 465h3v2h-3zM886 461h3v2h-3zM886 465h3v2h-3zM890 461h3v2h-3zM890 465h3v2h-3zM894 461h3v2h-3zM894 465h3v2h-3zM898 461h3v2h-3zM898 465h3v2h-3zM903 461h3v3h-3zM908 461h3v3h-3zM903 465h3v2h-3zM908 465h3v2h-3zM923 461h3v2h-3zM923 465h3v2h-3zM927 461h3v2h-3zM927 465h3v2h-3zM727 482h2v4h-2zM729 482h2v4h-2zM727 487h2v4h-2zM729 487h2v4h-2zM727 493h2v3h-2zM729 493h2v3h-2zM727 498h2v4h-2zM729 498h2v4h-2zM727 503h2v4h-2zM729 503h2v4h-2zM727 508h2v4h-2zM729 508h2v4h-2zM727 514h2v3h-2zM729 514h2v3h-2zM727 519h2v4h-2zM729 519h2v4h-2zM727 524h2v4h-2zM729 524h2v4h-2zM727 529h2v4h-2zM729 529h2v4h-2zM720 533h3v2h-3zM720 536h3v2h-3zM720 540h3v4h-3zM720 547h3v4h-3zM725 566h2v3h-2zM729 566h2v3h-2zM720 585h2v4h-2zM726 585h2v4h-2zM729 585h2v4h-2zM720 591h2v4h-2zM723 591h2v4h-2zM726 591h2v4h-2zM729 591h2v4h-2zM720 597h2v4h-2zM723 597h2v4h-2zM726 597h2v4h-2zM729 597h2v4h-2zM738 541h2v4h-2zM741 541h2v4h-2zM738 545h2v4h-2zM741 545h2v4h-2zM772 620h3v2h-3zM772 624h3v2h-3zM776 619h4v3h-4zM776 625h4v3h-4zM789 619h4v3h-4zM789 625h4v3h-4z"/><path fill="#808080" d="M573 419h3v4h-3zM559 466h2v3h-2zM531 433h2v3h-2zM551 474h3v2h-3zM578 467h2v3h-2zM574 464h4v2h-4zM566 440h3v4h-3zM537 414h2v3h-2zM517 449h3v2h-3zM523 466h4v2h-4zM572 441h3v2h-3zM570 462h3v2h-3zM597 439h3v2h-3zM668 417h4v2h-4zM638 420h4v2h-4zM562 498h3v2h-3zM579 537h3v4h-3zM580 499h4v3h-4zM536 495h3v2h-3zM578 546h4v3h-4zM563 520h2v4h-2zM544 501h2v4h-2zM522 505h2v3h-2zM560 512h3v2h-3zM560 490h2v3h-2zM567 527h2v4h-2zM503 533h4v3h-4zM567 552h4v3h-4zM548 543h4v2h-4zM564 507h2v4h-2zM506 551h2v3h-2zM515 494h2v3h-2zM524 489h2v3h-2zM595 615h2v3h-2zM609 597h3v4h-3zM600 571h2v3h-2zM595 586h3v4h-3zM615 602h2v3h-2zM616 624h2v4h-2zM723 585h2v4h-2z"/><g shape-rendering="geometricPrecision"><path fill="#808080" d="M449.9 395.7L457.6 395.7L463 401.1L463 408.9L457.6 414.3L449.9 414.3L444.4 408.9L444.4 401.1zM600.3 403.5a5 5 0 1 0 10.1 0a5 5 0 1 0 -10.1 0zM472.5 538.3a10.1 10.1 0 1 0 20.1 0a10.1 10.1 0 1 0 -20.1 0zM536.5 631.5a8 8 0 1 0 15.9 0a8 8 0 1 0 -15.9 0zM614.9 572.9a1.9 1.9 0 1 0 3.8 0a1.9 1.9 0 1 0 -3.8 0zM743.7 398.1L751.4 398.1L756.9 403.5L756.9 411.3L751.4 416.7L743.7 416.7L738.2 411.3L738.2 403.5zM943.3 443.2a8.4 8.4 0 1 0 16.8 0a8.4 8.4 0 1 0 -16.8 0zM737.5 631.4a10.1 10.1 0 1 0 20.1 0a10.1 10.1 0 1 0 -20.1 0zM911.2 631.4a10.1 10.1 0 1 0 20.1 0a10.1 10.1 0 1 0 -20.1 0zM946 627.4a5.2 5.2 0 1 0 10.5 0a5.2 5.2 0 1 0 -10.5 0z"/><path fill="#ffd83a" d="M476.5 401.3L475.7 402.3L475.6 403.5L474.3 403.7L473.3 404.5L472.3 403.7L471 403.5L470.9 402.3L470.1 401.3L470.9 400.3L471 399L472.3 398.8L473.3 398L474.3 398.8L475.6 399L475.7 400.3zM756 389.5L755.2 390.5L755 391.8L753.8 391.9L752.8 392.7L751.8 391.9L750.5 391.8L750.3 390.5L749.5 389.5L750.3 388.5L750.5 387.2L751.8 387.1L752.8 386.3L753.8 387.1L755 387.2L755.2 388.5zM821.9 471.2L821.5 471.7L821.4 472.3L820.8 472.4L820.2 472.8L819.7 472.4L819.1 472.3L819 471.7L818.6 471.2L819 470.7L819.1 470L819.7 469.9L820.2 469.5L820.8 469.9L821.4 470L821.5 470.7zM826.9 471.2L826.5 471.7L826.4 472.3L825.8 472.4L825.3 472.8L824.8 472.4L824.1 472.3L824.1 471.7L823.7 471.2L824.1 470.7L824.1 470L824.8 469.9L825.3 469.5L825.8 469.9L826.4 470L826.5 470.7zM833.1 472.5L832.7 473L832.6 473.6L831.9 473.7L831.4 474.1L830.9 473.7L830.3 473.6L830.2 473L829.8 472.5L830.2 472L830.3 471.3L830.9 471.2L831.4 470.8L831.9 471.2L832.6 471.3L832.7 472zM838.6 472.5L838.2 473L838.2 473.6L837.5 473.7L837 474.1L836.5 473.7L835.9 473.6L835.8 473L835.4 472.5L835.8 472L835.9 471.3L836.5 471.2L837 470.8L837.5 471.2L838.2 471.3L838.2 472zM739.9 499.5L739.5 500L739.5 500.6L738.9 500.6L738.4 501L737.9 500.6L737.3 500.6L737.2 500L736.9 499.5L737.2 499L737.3 498.4L737.9 498.4L738.4 498L738.9 498.4L739.5 498.4L739.5 499zM739.9 503.7L739.5 504.2L739.5 504.8L738.9 504.8L738.4 505.2L737.9 504.8L737.3 504.8L737.2 504.2L736.9 503.7L737.2 503.2L737.3 502.6L737.9 502.6L738.4 502.2L738.9 502.6L739.5 502.6L739.5 503.2zM739.9 507.9L739.5 508.4L739.5 509L738.9 509L738.4 509.4L737.9 509L737.3 509L737.2 508.4L736.9 507.9L737.2 507.4L737.3 506.8L737.9 506.8L738.4 506.4L738.9 506.8L739.5 506.8L739.5 507.4zM742 563.5L741.6 563.9L741.5 564.5L740.9 564.6L740.5 565L740 564.6L739.4 564.5L739.3 563.9L739 563.5L739.3 563L739.4 562.4L740 562.3L740.5 562L740.9 562.3L741.5 562.4L741.6 563zM738.8 568.5L738.5 569L738.4 569.6L737.8 569.6L737.3 570L736.9 569.6L736.3 569.6L736.2 569L735.8 568.5L736.2 568L736.3 567.4L736.9 567.4L737.3 567L737.8 567.4L738.4 567.4L738.5 568zM742.8 572.9L742.5 573.4L742.4 574L741.8 574L741.3 574.4L740.8 574L740.2 574L740.2 573.4L739.8 572.9L740.2 572.4L740.2 571.8L740.8 571.8L741.3 571.4L741.8 571.8L742.4 571.8L742.5 572.4zM739.9 576.5L739.5 576.9L739.5 577.5L738.9 577.6L738.4 578L737.9 577.6L737.3 577.5L737.2 576.9L736.9 576.5L737.2 576L737.3 575.4L737.9 575.3L738.4 575L738.9 575.3L739.5 575.4L739.5 576zM742 580.3L741.6 580.7L741.5 581.3L740.9 581.4L740.5 581.8L740 581.4L739.4 581.3L739.3 580.7L739 580.3L739.3 579.8L739.4 579.2L740 579.1L740.5 578.7L740.9 579.1L741.5 579.2L741.6 579.8zM884.8 626.2L884.5 626.6L884.4 627.1L883.9 627.2L883.5 627.5L883.1 627.2L882.6 627.1L882.5 626.6L882.2 626.2L882.5 625.8L882.6 625.3L883.1 625.2L883.5 624.9L883.9 625.2L884.4 625.3L884.5 625.8z"/><path fill="#0000ff" d="M469.8 446a1.2 1.2 0 1 0 2.4 0a1.2 1.2 0 1 0 -2.4 0zM672.2 480a1.3 1.3 0 1 0 2.6 0a1.3 1.3 0 1 0 -2.6 0z"/></g><ellipse cx="955.8" cy="480.1" rx="4.7" ry="3.2" fill="#808080"/><ellipse cx="947.5" cy="590.1" rx="7.3" ry="2.7" fill="#808080"/><ellipse cx="959.0" cy="596.0" rx="4.6" ry="3.1" fill="#808080"/><ellipse cx="955.9" cy="480.0" rx="5.2" ry="3.8" fill="#808080"/><rect x="1382.4" y="385.4" width="9.1" height="9.3" fill="url(#pGridM)"/><rect x="1286.8" y="435.7" width="10.3" height="14" fill="url(#pGrid)"/><rect x="1285.8" y="434.7" width="12.3" height="16" fill="none" stroke="#f0f0f0" stroke-width="1"/><rect x="1010.8" y="535.6" width="27.9" height="27.9" fill="url(#pDense)"/><rect x="1016.4" y="541.2" width="16.7" height="16.7" fill="#006a33"/><rect x="1016.4" y="541.2" width="16.7" height="16.7" fill="url(#pMix)"/><rect x="1009.8" y="534.6" width="29.9" height="29.9" fill="none" stroke="#f0f0f0" stroke-width="1"/><rect x="1084.2" y="491.5" width="9.6" height="11.5" fill="url(#pGridM)"/><rect x="1083.2" y="490.5" width="11.6" height="13.5" fill="none" stroke="#f0f0f0" stroke-width="1"/><rect x="1124.7" y="539.8" width="21" height="21.6" fill="url(#pGridM)"/><rect x="1123.7" y="538.8" width="23" height="23.6" fill="none" stroke="#f0f0f0" stroke-width="1"/><rect x="1091.2" y="560.7" width="17.8" height="18.9" fill="url(#pGrid)"/><rect x="1090.2" y="559.7" width="19.8" height="20.9" fill="none" stroke="#f0f0f0" stroke-width="1"/><rect x="1169.8" y="480" width="38.8" height="36.1" fill="url(#pGrid)"/><rect x="1169.8" y="480" width="17.5" height="18" fill="#006a33"/><rect x="1169.8" y="480" width="17.5" height="18" fill="url(#pGridM)"/><rect x="1189.2" y="490.8" width="15.5" height="18" fill="#006a33"/><rect x="1189.2" y="490.8" width="15.5" height="18" fill="url(#pGridM)"/><rect x="1168.8" y="479" width="40.8" height="38.1" fill="none" stroke="#f0f0f0" stroke-width="1"/><rect x="1156.2" y="554.5" width="36.7" height="35.7" fill="url(#pGrid)"/><rect x="1156.2" y="554.5" width="18.4" height="17.8" fill="#006a33"/><rect x="1156.2" y="554.5" width="18.4" height="17.8" fill="url(#pGridM)"/><rect x="1163.5" y="572.3" width="18.4" height="16" fill="#006a33"/><rect x="1163.5" y="572.3" width="18.4" height="16" fill="url(#pGridM)"/><rect x="1155.2" y="553.5" width="38.7" height="37.7" fill="none" stroke="#f0f0f0" stroke-width="1"/><rect x="1152.4" y="514.6" width="12.2" height="12.6" fill="url(#pGridM)"/><rect x="1151.4" y="513.6" width="14.2" height="14.6" fill="none" stroke="#f0f0f0" stroke-width="1"/><rect x="1223.3" y="554.5" width="9.4" height="11.5" fill="url(#pGridM)"/><rect x="1222.3" y="553.5" width="11.4" height="13.5" fill="none" stroke="#f0f0f0" stroke-width="1"/><rect x="1244.7" y="619.5" width="14.3" height="14.7" fill="url(#pGridM)"/><rect x="1243.7" y="618.5" width="16.3" height="16.7" fill="none" stroke="#f0f0f0" stroke-width="1"/><rect x="1254.5" y="548.2" width="27.3" height="19.9" fill="url(#pGridM)"/><rect x="1253.5" y="547.2" width="29.3" height="21.9" fill="none" stroke="#f0f0f0" stroke-width="1"/><rect x="1314.3" y="547.1" width="12.6" height="12.2" fill="url(#pGrid)"/><rect x="1313.3" y="546.1" width="14.6" height="14.2" fill="none" stroke="#f0f0f0" stroke-width="1"/><rect x="1244" y="619.5" width="13.6" height="15.1" fill="url(#pGrid)"/><rect x="1243" y="618.5" width="15.6" height="17.1" fill="none" stroke="#f0f0f0" stroke-width="1"/><rect x="1263.3" y="619.5" width="12.2" height="15.1" fill="url(#pGrid)"/><rect x="1262.3" y="618.5" width="14.2" height="17.1" fill="none" stroke="#f0f0f0" stroke-width="1"/><path fill="#808080" d="M1001 395h3v2h-3zM999 401h7v4h-7zM999 406h7v11h-7zM999 418h7v6h-7zM1109 393h7v5h-7zM1109 398h7v12h-7zM1109 411h7v5h-7zM1105 424h3v3h-3zM1227.4 402.0l2.4 2.4l-2.4 2.4l-2.4 -2.4zM1236 403h17v8h-17zM1052 446h9v5h-9zM1052 457h9v5h-9zM1088 435h4v9h-4zM1098 435h4v9h-4zM1010 460h4v9h-4zM1020 460h4v9h-4zM1115 455h4v6h-4zM1109 467h2v7h-2zM1297 359h2v10h-2zM1326 359h4v10h-4zM1385 354h7v16h-7zM1357 399h9v3h-9zM1357 409h9v4h-9zM1376 395h3v7h-3zM1376 405h3v7h-3zM1398 403h5v5h-5zM1435 396h3v7h-3zM1435 406h3v6h-3zM1449 396h9v4h-9zM1449 408h9v4h-9zM1472 397h7v17h-7zM1428 418h4v10h-4zM1438 418h4v10h-4zM1243 403h10v8h-10zM1314 403h17v8h-17zM1357 439h28v27h-28zM1353 458h3v1h-3zM1353 461h3v1h-3zM1365 426h5v3h-5zM1411 452h7v6h-7zM1421 452h7v6h-7zM1411 460h7v6h-7zM1421 460h7v6h-7zM1411 475h7v6h-7zM1421 475h7v6h-7zM1411 483h7v6h-7zM1421 483h7v6h-7zM1412 469h1v2h-1zM1415 469h2v2h-2zM1418 469h2v2h-2zM1422 469h1v2h-1zM1425 469h2v2h-2zM1472 446h3v1h-3zM1486 448h3v1h-3zM1486 450h3v1h-3zM1486 469h3v1h-3zM1472 471h3v1h-3zM1486 471h3v1h-3zM1486 489h3v1h-3zM1486 492h3v1h-3zM1472 496h3v1h-3zM1014 503h6v6h-6zM1049 499h7v7h-7zM1019 575h5v8h-5zM1029 585h6v8h-6zM1040 574h6v6h-6zM1049 585h6v6h-6zM1057 611h3v3h-3zM1115 611h3v3h-3zM1057 625h3v3h-3zM1115 625h3v3h-3zM1135 611h3v3h-3zM1180 611h3v3h-3zM1135 625h3v3h-3zM1180 625h3v3h-3zM1110 491h6v7h-6zM1095 540h8v12h-8zM1122 575h7v6h-7zM1096 533h7v5h-7zM1197 526h5v8h-5zM1197 537h5v5h-5zM1197 545h5v6h-5zM1151 540h7v5h-7zM1161 540h6v5h-6zM1170 540h7v5h-7zM1179 539h7v6h-7zM1228 532h5v10h-5zM1255 512h4v5h-4zM1255 521h4v6h-4zM1235 549h7v5h-7zM1205 583h6v6h-6zM1214 583h6v6h-6zM1230 573h6v6h-6zM1318 571h11v12h-11zM1294 592h4v3h-4zM1289 616h5v6h-5zM1355 611h5v2h-5zM1355 630h5v3h-5zM1365 611h4v2h-4zM1365 630h4v3h-4zM1368 616h2v11h-2zM1358 576h7v4h-7zM1358 586h7v4h-7zM1379 576h9v4h-9zM1379 587h9v4h-9zM1409 530h7v7h-7zM1364 543h7v6h-7zM1199 455h4v3h-4zM1164 459h4v5h-4zM1166 437h4v5h-4zM1240 486h3v3h-3zM1192 471h3v3h-3zM1226 439h3v4h-3zM1200 429h3v4h-3zM1190 446h3v4h-3zM1234 460h3v3h-3zM1155 440h3v3h-3zM1162 426h3v3h-3zM1227 470h3v4h-3zM1233 447h3v3h-3zM1253 479h4v3h-4zM1254 492h3v3h-3zM1239 451h3v3h-3zM1247 475h3v3h-3zM1192 453h4v3h-4zM1176 460h3v4h-3zM1238 467h3v4h-3zM1233 441h3v3h-3zM1267 461h3v3h-3zM1288 469h3v4h-3zM1307 463h3v3h-3zM1274 426h3v4h-3zM1289 476h3v3h-3zM1316 465h3v3h-3zM1304 476h4v5h-4zM1323 479h4v3h-4zM1270 491h4v3h-4zM1292 426h4v5h-4zM1318 490h3v3h-3zM1326 443h3v3h-3zM1261 426h3v3h-3zM1272 469h4v5h-4zM1327 449h4v3h-4zM1262 492h4v3h-4zM1280 437h4v3h-4zM1210 547h4v5h-4zM1249 556h3v3h-3zM1212 529h4v3h-4zM1205 525h3v3h-3zM1241 516h3v4h-3zM1162 503h3v3h-3zM1249 503h3v4h-3zM1209 541h4v3h-4zM1195 582h4v3h-4zM1235 523h3v3h-3zM1223 578h4v3h-4zM1287 556h5v4h-5zM1313 522h4v3h-4zM1263 522h4v3h-4zM1328 507h5v4h-5zM1328 520h4v3h-4zM1296 510h3v4h-3zM1271 538h3v3h-3zM1276 511h4v5h-4zM1288 530h3v3h-3zM1286 499h3v4h-3zM1318 501h4v3h-4zM1325 565h3v3h-3zM1300 564h3v4h-3zM1331 560h4v3h-4zM1335 521h3v3h-3zM1286 519h3v3h-3z"/><path fill="#ffd83a" d="M1097 353h7v3h-7zM1097 357h7v12h-7zM1102 370h1v5h-1zM1103 386h1v3h-1zM1106 386h1v3h-1zM1101 424h3v3h-3zM1210 371h8v16h-8zM1235 356h7v18h-7zM1020 449h3v3h-3zM1024 449h3v3h-3zM1052 438h9v7h-9zM1052 463h9v7h-9zM1094 432h2v2h-2zM1094 445h2v1h-2zM1016 457h2v2h-2zM1016 470h2v1h-2zM1121 436h1v1h-1zM1121 441h1v1h-1zM1119 437h1v1h-1zM1126 437h1v1h-1zM1124 436h1v1h-1zM1124 441h1v1h-1zM1119 439h1v1h-1zM1126 439h1v1h-1zM1130 438h1v3h-1zM1133 438h1v3h-1zM1142 439h1v1h-1zM1142 444h1v1h-1zM1141 441h1v1h-1zM1144 441h1v1h-1zM1137 449h3v3h-3zM1143 449h3v3h-3zM1114 454h1v1h-1zM1114 462h1v1h-1zM1112 456h1v1h-1zM1118 456h1v1h-1zM1117 454h1v1h-1zM1117 462h1v1h-1zM1112 459h1v1h-1zM1118 459h1v1h-1zM1107 467h1v1h-1zM1107 474h1v1h-1zM1104 469h1v1h-1zM1113 469h2v1h-2zM1111 467h1v1h-1zM1111 474h1v1h-1zM1104 472h1v1h-1zM1113 472h2v1h-2zM1093 470h2v4h-2zM1096 470h2v4h-2zM1003 490h1v3h-1zM1006 490h1v3h-1zM1012 485h5v3h-5zM1012 490h5v3h-5zM1305 360h3v3h-3zM1305 365h3v3h-3zM1310 360h6v3h-6zM1310 365h6v3h-6zM1319 360h3v3h-3zM1319 365h3v3h-3zM1443 354h8v16h-8zM1354 405h2v2h-2zM1367 405h2v2h-2zM1382 399h3v3h-3zM1387 399h3v3h-3zM1396 398h1v2h-1zM1396 411h1v2h-1zM1393 401h2v1h-2zM1405 401h2v1h-2zM1398 398h1v2h-1zM1398 411h1v2h-1zM1393 404h2v1h-2zM1405 404h2v1h-2zM1401 398h1v2h-1zM1401 411h1v2h-1zM1393 406h2v1h-2zM1405 406h2v1h-2zM1404 398h1v2h-1zM1404 411h1v2h-1zM1393 409h2v1h-2zM1405 409h2v1h-2zM1410 400h2v4h-2zM1413 400h2v4h-2zM1445 403h2v2h-2zM1460 403h2v2h-2zM1445 402h3v3h-3zM1434 415h2v2h-2zM1434 429h2v2h-2zM1259 434h1v3h-1zM1259 452h1v4h-1zM1255 437h3v1h-3zM1274 437h3v1h-3zM1261 434h1v3h-1zM1261 452h1v4h-1zM1255 440h3v1h-3zM1274 440h3v1h-3zM1264 434h1v3h-1zM1264 452h1v4h-1zM1255 443h3v1h-3zM1274 443h3v1h-3zM1267 434h1v3h-1zM1267 452h1v4h-1zM1255 445h3v1h-3zM1274 445h3v1h-3zM1269 434h1v3h-1zM1269 452h1v4h-1zM1255 448h3v1h-3zM1274 448h3v1h-3zM1272 434h1v3h-1zM1272 452h1v4h-1zM1255 451h3v1h-3zM1274 451h3v1h-3zM1309 435h1v3h-1zM1309 454h1v3h-1zM1306 439h3v1h-3zM1320 439h3v1h-3zM1311 435h1v3h-1zM1311 454h1v3h-1zM1306 442h3v1h-3zM1320 442h3v1h-3zM1314 435h1v3h-1zM1314 454h1v3h-1zM1306 445h3v1h-3zM1320 445h3v1h-3zM1316 435h1v3h-1zM1316 454h1v3h-1zM1306 449h3v1h-3zM1320 449h3v1h-3zM1319 435h1v3h-1zM1319 454h1v3h-1zM1306 452h3v1h-3zM1320 452h3v1h-3zM1355 434h1v3h-1zM1355 469h1v3h-1zM1353 436h3v2h-3zM1359 434h1v3h-1zM1359 469h1v3h-1zM1353 440h3v1h-3zM1362 434h1v3h-1zM1362 469h1v3h-1zM1353 443h3v2h-3zM1388 443h3v2h-3zM1366 434h1v3h-1zM1366 469h1v3h-1zM1353 447h3v1h-3zM1388 447h3v1h-3zM1369 434h1v3h-1zM1369 469h1v3h-1zM1353 451h3v1h-3zM1388 451h3v1h-3zM1373 434h1v3h-1zM1373 469h1v3h-1zM1353 454h3v1h-3zM1388 454h3v1h-3zM1376 434h2v3h-2zM1376 469h2v3h-2zM1388 458h3v1h-3zM1380 434h1v3h-1zM1380 469h1v3h-1zM1388 461h3v1h-3zM1384 434h1v3h-1zM1384 469h1v3h-1zM1353 465h3v1h-3zM1388 465h3v1h-3zM1387 434h1v3h-1zM1387 469h1v3h-1zM1353 468h3v1h-3zM1388 468h3v1h-3zM1406 451h2v1h-2zM1431 451h3v1h-3zM1406 454h2v1h-2zM1431 454h3v1h-3zM1406 457h2v1h-2zM1431 457h3v1h-3zM1406 459h2v2h-2zM1431 462h3v1h-3zM1406 465h2v1h-2zM1431 465h3v1h-3zM1406 468h2v1h-2zM1431 468h3v1h-3zM1406 471h2v1h-2zM1406 474h2v1h-2zM1431 474h3v1h-3zM1431 477h3v1h-3zM1406 480h2v1h-2zM1431 480h3v1h-3zM1406 483h2v1h-2zM1406 485h2v2h-2zM1431 485h3v2h-3zM1406 488h2v1h-2zM1431 488h3v1h-3zM1431 491h3v1h-3zM1413 447h1v1h-1zM1415 447h2v1h-2zM1421 447h1v1h-1zM1424 447h1v1h-1zM1429 447h2v1h-2zM1472 441h3v1h-3zM1486 441h3v1h-3zM1472 443h3v1h-3zM1486 443h3v1h-3zM1486 446h3v1h-3zM1472 448h3v1h-3zM1472 450h3v1h-3zM1472 453h3v1h-3zM1486 453h3v1h-3zM1472 455h3v1h-3zM1486 455h3v1h-3zM1472 457h3v1h-3zM1486 457h3v1h-3zM1472 459h3v1h-3zM1486 459h3v1h-3zM1472 462h3v1h-3zM1486 462h3v1h-3zM1472 464h3v1h-3zM1486 464h3v1h-3zM1472 466h3v1h-3zM1486 466h3v1h-3zM1472 469h3v1h-3zM1472 473h3v1h-3zM1486 473h3v1h-3zM1472 476h3v1h-3zM1486 476h3v1h-3zM1472 478h3v1h-3zM1486 478h3v1h-3zM1472 480h3v1h-3zM1486 480h3v1h-3zM1472 482h3v1h-3zM1486 482h3v1h-3zM1472 485h3v1h-3zM1486 485h3v1h-3zM1472 487h3v1h-3zM1486 487h3v1h-3zM1472 489h3v1h-3zM1472 492h3v1h-3zM1472 494h3v1h-3zM1486 494h3v1h-3zM1486 496h3v1h-3zM1472 499h3v1h-3zM1486 499h3v1h-3zM1500 457h3v3h-3zM1500 465h3v4h-3zM1500 474h3v3h-3zM1500 482h3v4h-3zM1500 490h3v4h-3zM1465 488h3v3h-3zM1011 496h1v3h-1zM1011 513h1v2h-1zM1007 500h3v1h-3zM1024 500h3v1h-3zM1014 496h1v3h-1zM1014 513h1v2h-1zM1007 503h3v1h-3zM1024 503h3v1h-3zM1017 496h1v3h-1zM1017 513h1v2h-1zM1007 505h3v1h-3zM1024 505h3v1h-3zM1019 496h1v3h-1zM1019 513h1v2h-1zM1007 508h3v1h-3zM1024 508h3v1h-3zM1022 496h1v3h-1zM1022 513h1v2h-1zM1007 511h3v1h-3zM1024 511h3v1h-3zM1048 495h1v2h-1zM1048 508h1v2h-1zM1045 498h2v1h-2zM1059 498h2v1h-2zM1051 495h1v2h-1zM1051 508h1v2h-1zM1045 501h2v1h-2zM1059 501h2v1h-2zM1054 495h1v2h-1zM1054 508h1v2h-1zM1045 504h2v1h-2zM1059 504h2v1h-2zM1057 495h1v2h-1zM1057 508h1v2h-1zM1045 506h2v1h-2zM1059 506h2v1h-2zM1062.2 522.0l2.500 2.500l-2.500 2.500l-2.500 -2.500zM1019 584h5v9h-5zM1029 576h6v8h-6zM1040 567h6v6h-6zM1041 585h7v6h-7zM1061 611h1v3h-1zM1061 625h1v3h-1zM1063 611h1v3h-1zM1063 625h1v3h-1zM1066 611h1v3h-1zM1066 625h1v3h-1zM1068 611h1v3h-1zM1068 625h1v3h-1zM1071 611h1v3h-1zM1071 625h1v3h-1zM1073 611h1v3h-1zM1073 625h1v3h-1zM1076 611h1v3h-1zM1076 625h1v3h-1zM1078 611h1v3h-1zM1078 625h1v3h-1zM1081 611h1v3h-1zM1081 625h1v3h-1zM1083 611h1v3h-1zM1083 625h1v3h-1zM1085 611h1v3h-1zM1085 625h1v3h-1zM1088 611h1v3h-1zM1088 625h1v3h-1zM1090 611h1v3h-1zM1090 625h1v3h-1zM1093 611h1v3h-1zM1093 625h1v3h-1zM1095 611h1v3h-1zM1095 625h1v3h-1zM1098 611h1v3h-1zM1098 625h1v3h-1zM1100 611h1v3h-1zM1100 625h1v3h-1zM1103 611h1v3h-1zM1103 625h1v3h-1zM1105 611h1v3h-1zM1105 625h1v3h-1zM1108 611h1v3h-1zM1108 625h1v3h-1zM1110 611h1v3h-1zM1110 625h1v3h-1zM1113 611h1v3h-1zM1113 625h1v3h-1zM1139 611h1v3h-1zM1139 625h1v3h-1zM1141 611h1v3h-1zM1141 625h1v3h-1zM1144 611h1v3h-1zM1144 625h1v3h-1zM1146 611h1v3h-1zM1146 625h1v3h-1zM1149 611h1v3h-1zM1149 625h1v3h-1zM1151 611h1v3h-1zM1151 625h1v3h-1zM1153 611h1v3h-1zM1153 625h1v3h-1zM1156 611h1v3h-1zM1156 625h1v3h-1zM1158 611h1v3h-1zM1158 625h1v3h-1zM1161 611h1v3h-1zM1161 625h1v3h-1zM1163 611h1v3h-1zM1163 625h1v3h-1zM1166 611h1v3h-1zM1166 625h1v3h-1zM1168 611h1v3h-1zM1168 625h1v3h-1zM1170 611h1v3h-1zM1170 625h1v3h-1zM1173 611h1v3h-1zM1173 625h1v3h-1zM1175 611h1v3h-1zM1175 625h1v3h-1zM1178 611h1v3h-1zM1178 625h1v3h-1zM1110 491h20v17h-20zM1089 508h11v5h-11zM1089 516h11v5h-11zM1112 540h9v12h-9zM1122 565h7v6h-7zM1132 565h6v6h-6zM1132 575h6v6h-6zM1141 565h6v6h-6zM1141 575h6v6h-6zM1096 525h7v5h-7zM1106 525h6v5h-6zM1106 533h6v5h-6zM1116 523h4v14h-4zM1123 523h4v14h-4zM1137 523h12v6h-12zM1137 532h12v5h-12zM1219 480h4v9h-4zM1228 480h4v9h-4zM1219 492h4v11h-4zM1228 492h4v11h-4zM1219 508h4v10h-4zM1228 508h4v10h-4zM1219 521h4v11h-4zM1228 521h4v11h-4zM1175 522h11v5h-11zM1175 532h11v4h-11zM1188 526h5v8h-5zM1188 537h5v5h-5zM1188 545h5v6h-5zM1151 532h7v5h-7zM1161 532h6v5h-6zM1170 548h7v5h-7zM1179 548h7v5h-7zM1202 556h11v5h-11zM1202 566h11v4h-11zM1220 532h5v10h-5zM1235 531h12v5h-12zM1235 541h12v5h-12zM1250 531h9v5h-9zM1250 541h9v5h-9zM1247 512h5v5h-5zM1247 521h5v6h-5zM1235 557h7v5h-7zM1205 574h6v5h-6zM1214 574h6v5h-6zM1238 574h16v11h-16zM1228 593h24v17h-24zM1255 592h5v19h-5zM1314 529h7v14h-7zM1326 529h7v14h-7zM1289 571h10v14h-10zM1303 571h11v12h-11zM1333 578h1v4h-1zM1336 578h1v4h-1zM1243 572h12v14h-12zM1243 592h10v18h-10zM1258 593h24v17h-24zM1287 592h4v3h-4zM1289 603h5v5h-5zM1279 630h1v3h-1zM1282 630h1v3h-1zM1287 630h1v3h-1zM1290 630h1v3h-1zM1294 625h3v3h-3zM1299 625h3v3h-3zM1294 631h3v3h-3zM1299 631h3v3h-3zM1327 611h5v2h-5zM1327 630h5v3h-5zM1336 611h5v2h-5zM1336 630h5v3h-5zM1346 611h4v2h-4zM1346 630h4v3h-4zM1324 616h2v11h-2zM1355 582h1v2h-1zM1367 582h1v2h-1zM1376 583h1v2h-1zM1390 583h2v2h-2zM1408 526h1v2h-1zM1408 539h1v2h-1zM1405 529h2v1h-2zM1418 529h2v1h-2zM1411 526h1v2h-1zM1411 539h1v2h-1zM1405 531h2v1h-2zM1418 531h2v1h-2zM1413 526h1v2h-1zM1413 539h1v2h-1zM1405 534h2v1h-2zM1418 534h2v1h-2zM1416 526h1v2h-1zM1416 539h1v2h-1zM1405 537h2v1h-2zM1418 537h2v1h-2zM1363 538h1v3h-1zM1363 552h1v2h-1zM1360 541h2v1h-2zM1373 541h2v1h-2zM1366 538h1v3h-1zM1366 552h1v2h-1zM1360 544h2v1h-2zM1373 544h2v1h-2zM1368 538h1v3h-1zM1368 552h1v2h-1zM1360 547h2v1h-2zM1373 547h2v1h-2zM1371 538h1v3h-1zM1371 552h1v2h-1zM1360 550h2v1h-2zM1373 550h2v1h-2zM1465 488h3v2h-3zM1184 428h5v4h-5zM1184 434h5v4h-5zM1225 428h3v3h-3zM1229 428h3v3h-3zM1198 440h4v5h-4zM1204 440h4v5h-4zM1210 450h3v4h-3zM1215 450h3v4h-3zM1241 433h5v4h-5zM1241 439h5v4h-5zM1241 459h3v4h-3zM1246 459h3v4h-3zM1199 460h4v3h-4zM1169 467h3v3h-3zM1173 467h3v3h-3zM1183 453h4v3h-4zM1183 458h4v3h-4zM1158 459h4v5h-4zM1198 469h3v3h-3zM1202 469h3v3h-3zM1172 437h4v5h-4zM1244 486h3v3h-3zM1192 467h3v3h-3zM1220 439h3v4h-3zM1195 429h3v4h-3zM1166 446h5v4h-5zM1166 452h5v4h-5zM1213 464h4v3h-4zM1213 470h4v3h-4zM1185 446h3v4h-3zM1245 449h3v3h-3zM1249 449h3v3h-3zM1230 460h3v3h-3zM1211 429h5v4h-5zM1211 435h5v4h-5zM1155 444h3v3h-3zM1178 425h3v3h-3zM1178 429h3v3h-3zM1158 426h3v3h-3zM1165 474h3v4h-3zM1171 474h3v4h-3zM1237 475h3v3h-3zM1241 475h3v3h-3zM1221 470h3v4h-3zM1229 447h3v3h-3zM1253 474h4v3h-4zM1157 491h3v4h-3zM1163 491h3v4h-3zM1250 492h3v3h-3zM1222 458h3v3h-3zM1222 462h3v3h-3zM1239 447h3v3h-3zM1247 471h3v3h-3zM1192 458h4v3h-4zM1171 460h3v4h-3zM1255 463h3v3h-3zM1255 467h3v3h-3zM1180 470h3v3h-3zM1184 470h3v3h-3zM1250 486h3v3h-3zM1254 486h3v3h-3zM1233 467h3v4h-3zM1222 446h4v3h-4zM1222 451h4v3h-4zM1211 478h4v3h-4zM1211 484h4v3h-4zM1176 445h4v3h-4zM1176 451h4v3h-4zM1155 432h3v4h-3zM1160 432h3v4h-3zM1236 425h3v4h-3zM1241 425h3v4h-3zM1159 467h3v3h-3zM1159 471h3v3h-3zM1172 426h3v3h-3zM1172 430h3v3h-3zM1212 457h3v3h-3zM1216 457h3v3h-3zM1233 437h3v3h-3zM1301 487h3v4h-3zM1306 487h3v4h-3zM1263 461h3v3h-3zM1294 469h3v4h-3zM1282 485h4v5h-4zM1288 485h4v5h-4zM1307 467h3v3h-3zM1314 426h3v3h-3zM1318 426h3v3h-3zM1289 455h3v4h-3zM1294 455h3v4h-3zM1299 425h3v4h-3zM1304 425h3v4h-3zM1278 462h3v4h-3zM1283 462h3v4h-3zM1279 426h3v4h-3zM1327 486h3v3h-3zM1327 490h3v3h-3zM1314 475h4v3h-4zM1314 481h4v3h-4zM1285 476h3v3h-3zM1316 461h3v3h-3zM1298 476h4v5h-4zM1323 473h4v3h-4zM1270 486h4v3h-4zM1324 460h3v3h-3zM1328 460h3v3h-3zM1264 478h3v4h-3zM1269 478h3v4h-3zM1286 426h4v5h-4zM1314 490h3v3h-3zM1295 484h3v3h-3zM1295 488h3v3h-3zM1326 439h3v3h-3zM1265 426h3v3h-3zM1300 454h3v3h-3zM1300 458h3v3h-3zM1266 469h4v5h-4zM1327 454h4v3h-4zM1262 486h4v3h-4zM1280 442h4v3h-4zM1281 450h3v3h-3zM1281 454h3v3h-3zM1216 547h4v5h-4zM1195 560h4v3h-4zM1195 565h4v3h-4zM1245 556h3v3h-3zM1212 524h4v3h-4zM1205 521h3v3h-3zM1235 516h3v4h-3zM1167 519h4v3h-4zM1167 524h4v3h-4zM1211 502h4v3h-4zM1211 508h4v3h-4zM1158 503h3v3h-3zM1243 503h3v4h-3zM1209 536h4v3h-4zM1195 577h4v3h-4zM1255 500h4v3h-4zM1255 506h4v3h-4zM1239 523h3v3h-3zM1235 498h4v3h-4zM1235 503h4v3h-4zM1223 584h4v3h-4zM1287 550h5v4h-5zM1313 516h4v3h-4zM1263 517h4v3h-4zM1328 501h5v4h-5zM1284 537h5v4h-5zM1284 543h5v4h-5zM1300 498h3v4h-3zM1306 498h3v4h-3zM1328 515h4v3h-4zM1290 510h3v4h-3zM1267 538h3v3h-3zM1303 529h3v3h-3zM1307 529h3v3h-3zM1302 540h3v3h-3zM1302 544h3v3h-3zM1270 511h4v5h-4zM1292 530h3v3h-3zM1302 554h4v5h-4zM1308 554h4v5h-4zM1280 499h3v4h-3zM1318 496h4v3h-4zM1264 500h3v4h-3zM1270 500h3v4h-3zM1279 520h4v3h-4zM1279 526h4v3h-4zM1335 580h3v3h-3zM1335 584h3v3h-3zM1299 517h3v3h-3zM1303 517h3v3h-3zM1321 565h3v3h-3zM1295 564h3v4h-3zM1295 536h4v3h-4zM1295 542h4v3h-4zM1331 554h4v3h-4zM1316 509h3v4h-3zM1322 509h3v4h-3zM1334 484h3v3h-3zM1334 488h3v3h-3zM1306 505h4v3h-4zM1306 511h4v3h-4zM1271 526h3v3h-3zM1271 530h3v3h-3zM1335 517h3v3h-3zM1277 536h4v3h-4zM1277 541h4v3h-4zM1286 523h3v3h-3zM1331 546h3v3h-3zM1335 546h3v3h-3z"/><path fill="#008284" d="M1097 370h3v5h-3zM1385 372h7v4h-7zM1443 375h8v1h-8zM1388 436h3v2h-3zM1388 440h3v1h-3zM1406 448h2v1h-2zM1431 448h3v1h-3zM1431 459h3v2h-3zM1406 462h2v1h-2zM1431 471h3v1h-3zM1406 477h2v1h-2zM1431 483h3v1h-3zM1406 491h2v1h-2zM1410 447h1v1h-1zM1418 447h1v1h-1zM1427 447h1v1h-1z"/><path fill="#006a33" d="M1213 371h2v16h-2zM1210 377h8v4h-8zM1501 458h1v1h-1zM1501 466h1v2h-1zM1501 475h1v1h-1zM1501 483h1v1h-1zM1501 491h1v2h-1zM1116 491h7v17h-7zM1110 498h20v5h-20zM1229 594h6v2h-6zM1229 598h6v3h-6zM1229 603h6v2h-6zM1229 607h6v2h-6zM1293 574h2v9h-2zM1276 594h6v2h-6zM1276 598h6v3h-6zM1276 603h6v2h-6zM1276 607h6v2h-6z"/><path fill="none" stroke="#f0f0f0" stroke-width="1" d="M1102.5 385.5h5v4h-5zM1101.5 392.5h6v2h-6zM1101.5 397.5h2v5h-2zM1100.5 423.5h8v4h-8zM1195.5 370.5h23v17h-23zM1246.5 364.5h2v6h-2zM1021.5 433.5h6v2h-6zM1019.5 448.5h8v4h-8zM1051.5 437.5h10v14h-10zM1051.5 456.5h10v14h-10zM1086.5 431.5h17v15h-17zM1008.5 456.5h17v15h-17zM1114.5 435.5h2v12h-2zM1118.5 435.5h8v6h-8zM1129.5 437.5h5v4h-5zM1136.5 437.5h1v4h-1zM1140.5 438.5h5v7h-5zM1117.5 448.5h6v2h-6zM1136.5 448.5h10v4h-10zM1111.5 453.5h8v9h-8zM1101.5 458.5h5v1h-5zM1120.5 462.5h5v2h-5zM1103.5 466.5h11v8h-11zM1092.5 469.5h6v5h-6zM1117.5 467.5h2v7h-2zM1122.5 466.5h1v4h-1zM1093.5 481.5h5v2h-5zM1100.5 481.5h4v2h-4zM1106.5 481.5h4v2h-4zM1112.5 481.5h4v2h-4zM1118.5 481.5h4v2h-4zM1138.5 479.5h9v3h-9zM1002.5 489.5h5v4h-5zM1011.5 484.5h6v9h-6zM1020.5 492.5h7v2h-7zM1034.5 489.5h1v4h-1zM1038.5 489.5h13v2h-13zM1055.5 489.5h5v2h-5zM1304.5 359.5h4v9h-4zM1310.5 359.5h6v9h-6zM1318.5 359.5h4v9h-4zM1421.5 378.5h6v2h-6zM1429.5 374.5h6v2h-6zM1438.5 378.5h3v6h-3zM1378.5 379.5h2v5h-2zM1378.5 386.5h2v5h-2zM1353.5 397.5h16v16h-16zM1381.5 398.5h9v4h-9zM1381.5 404.5h9v3h-9zM1386.5 409.5h3v2h-3zM1393.5 398.5h14v14h-14zM1396.5 394.5h4v1h-4zM1402.5 394.5h6v2h-6zM1409.5 399.5h6v5h-6zM1409.5 406.5h6v2h-6zM1444.5 394.5h18v19h-18zM1426.5 414.5h16v17h-16zM1419.5 409.5h2v6h-2zM1423.5 410.5h4v1h-4zM1430.5 406.5h2v5h-2zM1254.5 433.5h22v22h-22zM1305.5 435.5h17v21h-17zM1352.5 433.5h39v39h-39zM1349.5 425.5h2v5h-2zM1353.5 425.5h1v5h-1zM1356.5 425.5h2v5h-2zM1360.5 425.5h2v5h-2zM1363.5 425.5h2v5h-2zM1367.5 425.5h2v5h-2zM1371.5 425.5h1v5h-1zM1374.5 425.5h2v5h-2zM1378.5 425.5h1v5h-1zM1381.5 425.5h2v5h-2zM1361.5 424.5h10v5h-10zM1353.5 475.5h2v5h-2zM1357.5 475.5h2v5h-2zM1361.5 475.5h1v5h-1zM1365.5 475.5h1v5h-1zM1369.5 475.5h1v5h-1zM1373.5 475.5h1v5h-1zM1376.5 475.5h2v5h-2zM1380.5 475.5h2v5h-2zM1384.5 475.5h2v5h-2zM1388.5 475.5h2v5h-2zM1405.5 446.5h28v47h-28zM1417.5 441.5h4v2h-4zM1423.5 441.5h4v2h-4zM1428.5 441.5h4v2h-4zM1434.5 441.5h4v2h-4zM1440.5 441.5h4v2h-4zM1471.5 439.5h18v61h-18zM1498.5 455.5h6v6h-6zM1498.5 464.5h6v5h-6zM1498.5 472.5h6v6h-6zM1498.5 480.5h6v6h-6zM1498.5 489.5h6v5h-6zM1006.5 496.5h21v19h-21zM1044.5 494.5h17v16h-17zM1018.5 574.5h6v18h-6zM1028.5 575.5h7v17h-7zM1040.5 566.5h5v13h-5zM1041.5 584.5h14v7h-14zM1056.5 610.5h61v17h-61zM1134.5 610.5h48v17h-48zM1109.5 490.5h21v18h-21zM1088.5 507.5h11v14h-11zM1094.5 540.5h27v11h-27zM1122.5 565.5h6v15h-6zM1131.5 565.5h6v15h-6zM1140.5 565.5h6v15h-6zM1096.5 524.5h7v13h-7zM1105.5 524.5h7v13h-7zM1115.5 523.5h12v14h-12zM1137.5 523.5h11v14h-11zM1218.5 480.5h14v8h-14zM1218.5 492.5h14v10h-14zM1218.5 507.5h14v11h-14zM1218.5 521.5h14v10h-14zM1174.5 522.5h12v14h-12zM1188.5 525.5h13v9h-13zM1188.5 536.5h13v6h-13zM1188.5 545.5h13v5h-13zM1151.5 531.5h7v13h-7zM1160.5 531.5h7v13h-7zM1170.5 540.5h6v12h-6zM1179.5 539.5h7v13h-7zM1201.5 556.5h12v14h-12zM1219.5 531.5h14v11h-14zM1235.5 530.5h11v15h-11zM1250.5 530.5h9v15h-9zM1246.5 511.5h13v6h-13zM1246.5 521.5h13v5h-13zM1235.5 548.5h6v14h-6zM1204.5 573.5h7v15h-7zM1213.5 573.5h6v15h-6zM1229.5 572.5h7v14h-7zM1238.5 573.5h16v12h-16zM1227.5 592.5h25v18h-25zM1313.5 528.5h19v15h-19zM1335.5 529.5h3v9h-3zM1335.5 546.5h3v8h-3zM1288.5 570.5h11v16h-11zM1302.5 571.5h26v11h-26zM1303.5 585.5h4v2h-4zM1309.5 585.5h4v2h-4zM1315.5 585.5h4v2h-4zM1320.5 585.5h4v2h-4zM1326.5 585.5h4v2h-4zM1332.5 585.5h4v2h-4zM1332.5 571.5h5v3h-5zM1332.5 577.5h5v5h-5zM1257.5 592.5h24v17h-24zM1286.5 591.5h12v4h-12zM1289.5 602.5h4v20h-4zM1278.5 619.5h5v3h-5zM1278.5 624.5h5v2h-5zM1278.5 629.5h5v4h-5zM1286.5 624.5h5v2h-5zM1286.5 629.5h5v4h-5zM1293.5 624.5h9v4h-9zM1293.5 630.5h9v4h-9zM1259.5 619.5h2v6h-2zM1244.5 615.5h13v2h-13zM1260.5 615.5h7v2h-7zM1269.5 615.5h10v2h-10zM1323.5 610.5h47v23h-47zM1354.5 574.5h14v17h-14zM1375.5 574.5h17v18h-17zM1404.5 525.5h16v15h-16zM1359.5 538.5h16v15h-16zM1497.5 500.5h9v2h-9zM1497.5 506.5h9v2h-9zM1056.5 559.5h5v2h-5zM1030.5 522.5h3v5h-3zM1035.5 492.5h2v6h-2zM1040.5 487.5h6v3h-6zM1050.5 513.5h3v7h-3zM1056.5 571.5h7v3h-7zM1007.5 523.5h3v7h-3zM1034.5 508.5h2v6h-2zM1043.5 533.5h3v5h-3zM1002.5 518.5h5v2h-5zM1058.5 486.5h5v3h-5zM1051.5 562.5h2v5h-2zM1017.5 485.5h6v3h-6zM1058.5 545.5h7v3h-7zM1008.5 488.5h2v5h-2zM1040.5 546.5h8v3h-8zM1038.5 500.5h3v8h-3zM1023.5 568.5h6v3h-6zM1032.5 529.5h7v3h-7zM1021.5 524.5h2v5h-2zM1061.5 578.5h3v7h-3zM1060.5 527.5h6v3h-6zM1002.5 531.5h2v5h-2zM1044.5 540.5h5v3h-5zM1044.5 516.5h3v6h-3zM1004.5 575.5h5v3h-5zM1055.5 563.5h8v3h-8zM1055.5 518.5h3v6h-3zM1053.5 535.5h5v2h-5zM1046.5 551.5h8v3h-8zM1060.5 589.5h6v2h-6zM1002.5 565.5h6v3h-6zM1006.5 533.5h2v6h-2zM1026.5 485.5h3v5h-3zM1035.5 520.5h2v6h-2zM1063.5 515.5h2v5h-2zM1014.5 565.5h6v2h-6zM1048.5 525.5h3v6h-3zM1049.5 556.5h5v2h-5zM1007.5 581.5h2v6h-2zM1002.5 586.5h2v6h-2zM1064.5 491.5h2v6h-2zM1039.5 514.5h3v6h-3zM1012.5 582.5h3v5h-3zM1011.5 572.5h3v7h-3zM1030.5 497.5h3v8h-3zM1050.5 569.5h3v7h-3zM1057.5 553.5h5v3h-5zM1031.5 484.5h6v2h-6zM1014.5 521.5h5v2h-5zM1051.5 540.5h8v3h-8zM1004.5 484.5h5v2h-5zM1005.5 546.5h3v7h-3zM1020.5 531.5h5v2h-5zM1048.5 490.5h6v2h-6zM1021.5 519.5h7v3h-7zM1002.5 538.5h2v5h-2zM1048.5 485.5h7v3h-7zM1055.5 513.5h6v3h-6zM1005.5 558.5h3v5h-3zM1061.5 537.5h5v2h-5zM1012.5 529.5h6v2h-6zM1042.5 556.5h5v2h-5zM1033.5 565.5h2v6h-2zM1052.5 579.5h5v2h-5zM1018.5 491.5h5v2h-5zM1050.5 546.5h6v3h-6zM1007.5 589.5h8v3h-8zM1031.5 488.5h2v6h-2zM1080.5 538.5h7v3h-7zM1113.5 585.5h3v6h-3zM1147.5 498.5h3v5h-3zM1086.5 525.5h3v6h-3zM1087.5 578.5h2v5h-2zM1144.5 585.5h5v2h-5zM1114.5 514.5h6v2h-6zM1105.5 582.5h5v2h-5zM1082.5 554.5h5v3h-5zM1095.5 493.5h3v5h-3zM1080.5 544.5h7v3h-7zM1096.5 589.5h6v3h-6zM1133.5 497.5h8v3h-8zM1143.5 590.5h6v2h-6zM1123.5 510.5h2v6h-2zM1112.5 563.5h5v2h-5zM1138.5 513.5h3v6h-3zM1117.5 558.5h5v3h-5zM1149.5 563.5h2v5h-2zM1080.5 569.5h3v8h-3zM1100.5 499.5h6v2h-6zM1118.5 589.5h6v2h-6zM1112.5 573.5h3v8h-3zM1080.5 564.5h6v2h-6zM1135.5 491.5h7v3h-7zM1128.5 583.5h5v3h-5zM1085.5 588.5h5v2h-5zM1129.5 510.5h7v3h-7zM1144.5 516.5h6v3h-6zM1129.5 526.5h5v2h-5zM1105.5 512.5h7v3h-7zM1139.5 504.5h3v6h-3zM1150.5 576.5h3v7h-3zM1106.5 588.5h5v2h-5zM1080.5 490.5h2v6h-2zM1126.5 589.5h5v3h-5zM1085.5 571.5h3v5h-3zM1147.5 553.5h6v2h-6zM1105.5 518.5h7v3h-7zM1091.5 581.5h5v2h-5zM1101.5 488.5h3v8h-3zM1131.5 532.5h2v5h-2zM1089.5 550.5h3v5h-3zM1148.5 508.5h5v2h-5zM1118.5 584.5h5v3h-5zM1120.5 518.5h5v2h-5zM1096.5 554.5h5v3h-5zM1109.5 554.5h5v3h-5zM1081.5 522.5h3v5h-3zM1080.5 506.5h3v5h-3zM1147.5 547.5h6v3h-6zM1084.5 533.5h7v3h-7zM1127.5 518.5h6v2h-6zM1146.5 491.5h5v3h-5zM1110.5 567.5h7v3h-7zM1136.5 586.5h2v6h-2zM1080.5 514.5h3v6h-3zM1183.5 427.5h6v11h-6zM1224.5 427.5h8v4h-8zM1197.5 439.5h11v6h-11zM1209.5 449.5h9v5h-9zM1240.5 432.5h6v11h-6zM1240.5 458.5h9v5h-9zM1198.5 454.5h5v9h-5zM1168.5 466.5h8v4h-8zM1182.5 452.5h5v9h-5zM1157.5 458.5h11v6h-11zM1197.5 468.5h8v4h-8zM1165.5 436.5h11v6h-11zM1239.5 485.5h8v4h-8zM1191.5 466.5h4v8h-4zM1219.5 438.5h10v5h-10zM1194.5 428.5h9v5h-9zM1165.5 445.5h6v11h-6zM1212.5 463.5h5v10h-5zM1184.5 445.5h9v5h-9zM1244.5 448.5h8v4h-8zM1229.5 459.5h8v4h-8zM1210.5 428.5h6v11h-6zM1154.5 439.5h4v8h-4zM1177.5 424.5h4v8h-4zM1157.5 425.5h8v4h-8zM1164.5 473.5h10v5h-10zM1236.5 474.5h8v4h-8zM1220.5 469.5h10v5h-10zM1228.5 446.5h8v4h-8zM1252.5 473.5h5v9h-5zM1156.5 490.5h10v5h-10zM1249.5 491.5h8v4h-8zM1221.5 457.5h4v8h-4zM1238.5 446.5h4v8h-4zM1246.5 470.5h4v8h-4zM1191.5 452.5h5v9h-5zM1170.5 459.5h9v5h-9zM1254.5 462.5h4v8h-4zM1179.5 469.5h8v4h-8zM1249.5 485.5h8v4h-8zM1232.5 466.5h9v5h-9zM1221.5 445.5h5v9h-5zM1210.5 477.5h5v10h-5zM1175.5 444.5h5v10h-5zM1154.5 431.5h9v5h-9zM1235.5 424.5h9v5h-9zM1158.5 466.5h4v8h-4zM1171.5 425.5h4v8h-4zM1211.5 456.5h8v4h-8zM1232.5 436.5h4v8h-4zM1243.5 465.5h8v3h-8zM1202.5 435.5h6v2h-6zM1205.5 449.5h2v6h-2zM1237.5 492.5h5v2h-5zM1161.5 482.5h5v3h-5zM1155.5 478.5h3v5h-3zM1191.5 438.5h3v5h-3zM1248.5 440.5h3v5h-3zM1195.5 476.5h6v2h-6zM1212.5 489.5h3v5h-3zM1218.5 429.5h3v7h-3zM1244.5 481.5h6v2h-6zM1155.5 452.5h5v3h-5zM1182.5 463.5h7v3h-7zM1207.5 465.5h3v7h-3zM1249.5 426.5h5v3h-5zM1160.5 443.5h2v5h-2zM1228.5 454.5h5v3h-5zM1300.5 486.5h9v5h-9zM1262.5 460.5h8v4h-8zM1287.5 468.5h10v5h-10zM1281.5 484.5h11v6h-11zM1306.5 462.5h4v8h-4zM1313.5 425.5h8v4h-8zM1288.5 454.5h9v5h-9zM1298.5 424.5h9v5h-9zM1277.5 461.5h9v5h-9zM1273.5 425.5h9v5h-9zM1326.5 485.5h4v8h-4zM1313.5 474.5h5v10h-5zM1284.5 475.5h8v4h-8zM1315.5 460.5h4v8h-4zM1297.5 475.5h11v6h-11zM1322.5 472.5h5v10h-5zM1269.5 485.5h5v9h-5zM1323.5 459.5h8v4h-8zM1263.5 477.5h9v5h-9zM1285.5 425.5h11v6h-11zM1313.5 489.5h8v4h-8zM1294.5 483.5h4v8h-4zM1325.5 438.5h4v8h-4zM1260.5 425.5h8v4h-8zM1299.5 453.5h4v8h-4zM1265.5 468.5h11v6h-11zM1326.5 448.5h5v9h-5zM1261.5 485.5h5v10h-5zM1279.5 436.5h5v9h-5zM1280.5 449.5h4v8h-4zM1289.5 462.5h5v3h-5zM1248.5 431.5h2v5h-2zM1299.5 467.5h5v3h-5zM1278.5 468.5h5v2h-5zM1260.5 469.5h2v5h-2zM1325.5 427.5h6v2h-6zM1323.5 467.5h7v3h-7zM1275.5 478.5h6v2h-6zM1306.5 493.5h5v2h-5zM1301.5 434.5h2v5h-2zM1293.5 493.5h6v2h-6zM1209.5 546.5h11v6h-11zM1194.5 559.5h5v9h-5zM1244.5 555.5h8v4h-8zM1211.5 523.5h5v9h-5zM1204.5 520.5h4v8h-4zM1234.5 515.5h10v5h-10zM1166.5 518.5h5v9h-5zM1210.5 501.5h5v10h-5zM1157.5 502.5h8v4h-8zM1242.5 502.5h10v5h-10zM1208.5 535.5h5v9h-5zM1194.5 576.5h5v9h-5zM1254.5 499.5h5v10h-5zM1234.5 522.5h8v4h-8zM1234.5 497.5h5v9h-5zM1222.5 577.5h5v10h-5zM1239.5 566.5h6v2h-6zM1191.5 518.5h8v3h-8zM1216.5 555.5h3v8h-3zM1222.5 545.5h2v5h-2zM1155.5 508.5h5v3h-5zM1227.5 567.5h7v3h-7zM1196.5 590.5h5v2h-5zM1250.5 561.5h2v5h-2zM1286.5 549.5h6v11h-6zM1312.5 515.5h5v10h-5zM1262.5 516.5h5v9h-5zM1327.5 500.5h6v11h-6zM1283.5 536.5h6v11h-6zM1299.5 497.5h10v5h-10zM1327.5 514.5h5v9h-5zM1289.5 509.5h10v5h-10zM1266.5 537.5h8v4h-8zM1302.5 528.5h8v4h-8zM1301.5 539.5h4v8h-4zM1269.5 510.5h11v6h-11zM1287.5 529.5h8v4h-8zM1301.5 553.5h11v6h-11zM1279.5 498.5h10v5h-10zM1317.5 495.5h5v9h-5zM1263.5 499.5h10v5h-10zM1278.5 519.5h5v10h-5zM1334.5 579.5h4v8h-4zM1298.5 516.5h8v4h-8zM1320.5 564.5h8v4h-8zM1294.5 563.5h9v5h-9zM1294.5 535.5h5v10h-5zM1330.5 553.5h5v10h-5zM1315.5 508.5h10v5h-10zM1333.5 483.5h4v8h-4zM1305.5 504.5h5v10h-5zM1270.5 525.5h4v8h-4zM1334.5 516.5h4v8h-4zM1276.5 535.5h5v9h-5zM1285.5 518.5h4v8h-4zM1330.5 545.5h8v4h-8zM1276.5 487.5h3v6h-3zM1292.5 524.5h6v2h-6zM1262.5 539.5h2v6h-2zM1262.5 527.5h3v7h-3zM1286.5 562.5h5v2h-5zM1262.5 510.5h5v2h-5zM1247.5 549.5h5v3h-5zM1294.5 547.5h3v8h-3zM1335.5 503.5h3v7h-3zM1282.5 511.5h5v3h-5zM1306.5 563.5h6v2h-6zM1332.5 493.5h5v2h-5zM1332.5 567.5h3v8h-3zM1315.5 585.5h6v2h-6zM1315.5 561.5h2v6h-2zM1273.5 506.5h6v2h-6zM1335.5 526.5h2v5h-2zM1307.5 545.5h5v3h-5zM1320.5 516.5h5v3h-5zM1312.5 497.5h3v7h-3zM1295.5 501.5h2v5h-2zM1320.5 523.5h5v3h-5zM1206.5 462.5h5v2h-5zM1161.5 476.5h2v4h-2zM1245.5 453.5h6v2h-6zM1218.5 475.5h2v4h-2zM1204.5 476.5h5v2h-5zM1243.5 469.5h2v4h-2zM1164.5 466.5h2v5h-2zM1193.5 435.5h4v2h-4zM1185.5 424.5h5v2h-5zM1195.5 447.5h5v2h-5zM1183.5 474.5h2v4h-2zM1155.5 449.5h4v2h-4zM1181.5 440.5h2v6h-2zM1214.5 443.5h4v2h-4zM1184.5 441.5h6v2h-6zM1216.5 424.5h6v3h-6zM1195.5 425.5h6v2h-6zM1234.5 488.5h2v5h-2zM1165.5 430.5h2v5h-2zM1204.5 425.5h2v5h-2zM1213.5 446.5h6v2h-6zM1222.5 477.5h6v2h-6zM1154.5 475.5h5v2h-5zM1225.5 466.5h5v2h-5zM1251.5 430.5h2v5h-2zM1311.5 431.5h5v2h-5zM1299.5 462.5h5v2h-5zM1319.5 474.5h2v5h-2zM1324.5 424.5h5v2h-5zM1298.5 440.5h2v4h-2zM1299.5 448.5h4v2h-4zM1260.5 457.5h5v2h-5zM1309.5 471.5h3v6h-3zM1245.5 425.5h2v4h-2zM1304.5 430.5h6v2h-6zM1310.5 478.5h2v4h-2zM1255.5 425.5h2v5h-2zM1328.5 471.5h2v5h-2zM1319.5 483.5h6v3h-6zM1252.5 457.5h5v2h-5zM1302.5 482.5h5v2h-5zM1286.5 492.5h5v2h-5zM1309.5 425.5h2v4h-2zM1325.5 435.5h5v2h-5zM1287.5 451.5h6v2h-6zM1314.5 471.5h4v2h-4zM1213.5 512.5h2v4h-2zM1203.5 517.5h6v2h-6zM1230.5 587.5h2v4h-2zM1227.5 543.5h6v2h-6zM1233.5 480.5h5v2h-5zM1229.5 547.5h2v5h-2zM1194.5 552.5h2v6h-2zM1246.5 508.5h5v2h-5zM1238.5 508.5h5v2h-5zM1246.5 493.5h2v4h-2zM1217.5 566.5h3v6h-3zM1247.5 567.5h5v2h-5zM1169.5 532.5h2v5h-2zM1165.5 547.5h3v6h-3zM1200.5 581.5h3v6h-3zM1243.5 494.5h2v6h-2zM1227.5 504.5h6v2h-6zM1183.5 517.5h6v2h-6zM1204.5 537.5h2v5h-2zM1243.5 523.5h2v5h-2zM1306.5 523.5h5v2h-5zM1293.5 558.5h4v2h-4zM1287.5 565.5h4v2h-4zM1285.5 504.5h3v6h-3zM1309.5 535.5h2v6h-2zM1298.5 503.5h2v5h-2zM1290.5 501.5h2v4h-2zM1267.5 542.5h4v2h-4zM1290.5 520.5h5v2h-5zM1277.5 531.5h5v2h-5zM1290.5 534.5h2v5h-2zM1336.5 565.5h2v6h-2zM1243.5 548.5h2v4h-2zM1273.5 518.5h2v6h-2zM1246.5 561.5h2v5h-2zM1322.5 584.5h6v2h-6zM1305.5 560.5h4v2h-4zM1290.5 542.5h2v4h-2zM1323.5 497.5h2v5h-2zM1038.5 494.5h2v5h-2zM1061.5 542.5h5v2h-5zM1048.5 577.5h2v6h-2zM1029.5 506.5h3v6h-3zM1045.5 525.5h2v5h-2zM1036.5 584.5h2v5h-2zM1050.5 532.5h2v6h-2zM1039.5 559.5h4v2h-4zM1057.5 526.5h2v5h-2zM1002.5 551.5h2v6h-2zM1011.5 517.5h2v6h-2zM1021.5 564.5h5v2h-5zM1027.5 528.5h4v2h-4zM1062.5 498.5h4v2h-4zM1063.5 554.5h2v6h-2zM1002.5 490.5h2v6h-2zM1064.5 569.5h2v5h-2zM1136.5 501.5h4v2h-4zM1084.5 567.5h5v2h-5zM1096.5 488.5h4v2h-4zM1102.5 511.5h2v4h-2zM1149.5 556.5h2v5h-2zM1087.5 560.5h3v6h-3zM1128.5 530.5h2v5h-2zM1093.5 553.5h2v5h-2zM1145.5 504.5h4v2h-4zM1144.5 488.5h4v2h-4zM1109.5 558.5h6v3h-6zM1098.5 585.5h5v2h-5zM1136.5 488.5h5v2h-5zM1144.5 509.5h2v5h-2zM1118.5 565.5h2v5h-2zM1395.5 455.5h3v6h-3zM1394.5 440.5h5v3h-5zM1393.5 488.5h2v6h-2zM1395.5 428.5h3v7h-3zM1399.5 446.5h3v7h-3zM1393.5 480.5h8v3h-8zM1397.5 466.5h2v6h-2zM1400.5 428.5h2v6h-2zM1398.5 488.5h2v6h-2zM1396.5 476.5h6v2h-6zM1394.5 445.5h2v6h-2zM1437.5 451.5h2v5h-2zM1442.5 481.5h3v7h-3zM1443.5 464.5h3v7h-3zM1436.5 464.5h2v5h-2zM1436.5 458.5h5v3h-5zM1438.5 475.5h7v3h-7zM1443.5 454.5h3v7h-3zM1436.5 445.5h8v3h-8zM1437.5 480.5h3v5h-3zM1441.5 450.5h6v2h-6zM1354.5 487.5h3v7h-3zM1347.5 482.5h7v3h-7zM1381.5 480.5h3v7h-3zM1371.5 488.5h3v5h-3zM1379.5 493.5h5v2h-5zM1361.5 493.5h5v2h-5zM1374.5 480.5h3v6h-3zM1367.5 478.5h3v6h-3zM1389.5 483.5h2v6h-2zM1356.5 481.5h7v3h-7zM1379.5 475.5h5v3h-5zM1362.5 486.5h6v3h-6zM1356.5 476.5h7v3h-7zM1349.5 478.5h5v2h-5zM1349.5 488.5h2v5h-2zM1382.5 489.5h5v2h-5zM1396.5 500.5h7v3h-7zM1409.5 499.5h7v3h-7zM1377.5 499.5h7v3h-7zM1431.5 496.5h3v6h-3zM1387.5 494.5h3v7h-3zM1437.5 490.5h5v3h-5zM1351.5 497.5h3v6h-3zM1419.5 497.5h5v3h-5zM1356.5 498.5h5v2h-5zM1438.5 498.5h7v3h-7zM1371.5 497.5h2v6h-2zM1366.5 498.5h3v5h-3zM1405.5 496.5h2v5h-2zM1392.5 496.5h6v2h-6zM1361.5 517.5h8v3h-8zM1406.5 547.5h5v3h-5zM1385.5 547.5h8v3h-8zM1380.5 518.5h6v2h-6zM1393.5 552.5h3v7h-3zM1369.5 556.5h3v7h-3zM1413.5 558.5h6v2h-6zM1436.5 513.5h5v2h-5zM1398.5 545.5h2v5h-2zM1380.5 525.5h6v3h-6zM1434.5 525.5h5v3h-5zM1436.5 545.5h3v7h-3zM1424.5 554.5h3v6h-3zM1435.5 554.5h7v3h-7zM1381.5 512.5h5v2h-5zM1430.5 533.5h6v2h-6zM1384.5 535.5h8v3h-8zM1389.5 520.5h7v3h-7zM1417.5 514.5h8v3h-8zM1373.5 514.5h5v2h-5zM1422.5 521.5h3v7h-3zM1390.5 511.5h2v6h-2zM1430.5 559.5h6v3h-6zM1428.5 521.5h5v2h-5zM1365.5 523.5h5v2h-5zM1409.5 556.5h2v5h-2zM1356.5 526.5h5v3h-5zM1379.5 552.5h8v3h-8zM1413.5 545.5h7v3h-7zM1395.5 514.5h5v3h-5zM1398.5 519.5h3v5h-3zM1378.5 533.5h2v5h-2zM1437.5 520.5h5v3h-5zM1376.5 558.5h8v3h-8zM1426.5 545.5h7v3h-7zM1373.5 527.5h3v8h-3zM1363.5 527.5h3v7h-3zM1377.5 544.5h2v6h-2zM1358.5 557.5h6v2h-6zM1401.5 556.5h5v3h-5zM1403.5 511.5h7v3h-7zM1413.5 551.5h8v3h-8zM1397.5 526.5h3v5h-3zM1429.5 539.5h5v3h-5zM1428.5 511.5h3v7h-3zM1412.5 515.5h3v7h-3zM1386.5 540.5h8v3h-8zM1430.5 550.5h3v7h-3zM1426.5 532.5h2v5h-2zM1406.5 518.5h2v5h-2zM1357.5 511.5h2v5h-2zM1422.5 539.5h5v2h-5zM1438.5 533.5h3v7h-3zM1355.5 548.5h2v6h-2zM1365.5 511.5h5v3h-5zM1396.5 535.5h3v5h-3zM1368.5 527.5h3v7h-3zM1383.5 531.5h6v2h-6zM1371.5 518.5h7v3h-7zM1355.5 537.5h2v6h-2zM1402.5 548.5h2v6h-2zM1359.5 561.5h6v2h-6z"/><path fill="none" stroke="#f0f0f0" stroke-width="0.8" d="M1022.9 436.7L1022.9 445.6M1022.9 445.6L1027.5 445.6"/><path fill="#ffd83a" d="M1101 392h2v3h-2zM1106 392h2v3h-2zM1101 397h3v2h-3zM1101 401h3v2h-3zM1246 364h3v2h-3zM1246 369h3v2h-3zM1021 433h2v3h-2zM1026 433h2v3h-2zM1114 435h3v4h-3zM1114 444h3v4h-3zM1136 437h2v2h-2zM1136 440h2v2h-2zM1117 448h2v3h-2zM1122 448h2v3h-2zM1101 458h2v2h-2zM1105 458h2v2h-2zM1120 462h2v3h-2zM1124 462h2v3h-2zM1117 467h3v3h-3zM1117 472h3v3h-3zM1122 466h2v2h-2zM1122 469h2v2h-2zM1093 481h2v3h-2zM1097 481h2v3h-2zM1100 481h2v3h-2zM1103 481h2v3h-2zM1106 481h2v3h-2zM1109 481h2v3h-2zM1112 481h2v3h-2zM1115 481h2v3h-2zM1118 481h2v3h-2zM1121 481h2v3h-2zM1138 479h3v4h-3zM1020 492h3v3h-3zM1025 492h3v3h-3zM1034 489h2v2h-2zM1034 492h2v2h-2zM1038 489h4v3h-4zM1048 489h4v3h-4zM1055 489h2v3h-2zM1059 489h2v3h-2zM1421 378h2v3h-2zM1426 378h2v3h-2zM1429 374h2v3h-2zM1434 374h2v3h-2zM1438 378h4v2h-4zM1438 383h4v2h-4zM1378 379h3v2h-3zM1378 383h3v2h-3zM1378 386h3v2h-3zM1378 390h3v2h-3zM1381 404h3v4h-3zM1388 404h3v4h-3zM1386 409h2v3h-2zM1388 409h2v3h-2zM1396 394h2v2h-2zM1399 394h2v2h-2zM1402 394h2v3h-2zM1407 394h2v3h-2zM1409 406h2v3h-2zM1414 406h2v3h-2zM1419 409h3v2h-3zM1419 414h3v2h-3zM1423 410h2v2h-2zM1426 410h2v2h-2zM1430 406h3v2h-3zM1430 410h3v2h-3zM1349 425h3v2h-3zM1349 429h3v2h-3zM1353 425h2v2h-2zM1353 429h2v2h-2zM1356 425h3v2h-3zM1356 429h3v2h-3zM1360 425h3v2h-3zM1360 429h3v2h-3zM1363 425h3v2h-3zM1363 429h3v2h-3zM1367 425h3v2h-3zM1367 429h3v2h-3zM1371 425h2v2h-2zM1371 429h2v2h-2zM1374 425h3v2h-3zM1374 429h3v2h-3zM1378 425h2v2h-2zM1378 429h2v2h-2zM1381 425h3v2h-3zM1381 429h3v2h-3zM1353 475h3v2h-3zM1353 479h3v2h-3zM1357 475h3v2h-3zM1357 479h3v2h-3zM1361 475h2v2h-2zM1361 479h2v2h-2zM1365 475h2v2h-2zM1365 479h2v2h-2zM1369 475h2v2h-2zM1369 479h2v2h-2zM1373 475h2v2h-2zM1373 479h2v2h-2zM1376 475h3v2h-3zM1376 479h3v2h-3zM1380 475h3v2h-3zM1380 479h3v2h-3zM1384 475h3v2h-3zM1384 479h3v2h-3zM1388 475h3v2h-3zM1388 479h3v2h-3zM1417 441h2v3h-2zM1420 441h2v3h-2zM1423 441h2v3h-2zM1426 441h2v3h-2zM1428 441h2v3h-2zM1431 441h2v3h-2zM1434 441h2v3h-2zM1437 441h2v3h-2zM1440 441h2v3h-2zM1443 441h2v3h-2zM1335 529h4v3h-4zM1335 546h4v3h-4zM1335 552h4v3h-4zM1303 585h2v3h-2zM1306 585h2v3h-2zM1309 585h2v3h-2zM1312 585h2v3h-2zM1315 585h2v3h-2zM1318 585h2v3h-2zM1320 585h2v3h-2zM1323 585h2v3h-2zM1326 585h2v3h-2zM1329 585h2v3h-2zM1332 585h2v3h-2zM1335 585h2v3h-2zM1332 571h2v4h-2zM1336 571h2v4h-2zM1278 619h2v4h-2zM1282 619h2v4h-2zM1278 624h2v3h-2zM1282 624h2v3h-2zM1286 624h2v3h-2zM1290 624h2v3h-2zM1259 619h3v2h-3zM1259 624h3v2h-3zM1244 615h4v3h-4zM1254 615h4v3h-4zM1260 615h3v3h-3zM1265 615h3v3h-3zM1269 615h4v3h-4zM1276 615h4v3h-4zM1497 500h3v3h-3zM1497 506h3v3h-3zM1060 559h2v3h-2zM1030 522h4v2h-4zM1035 492h3v2h-3zM1040 487h2v4h-2zM1045 487h2v4h-2zM1050 513h4v3h-4zM1050 518h4v3h-4zM1056 571h3v4h-3zM1007 523h4v3h-4zM1007 528h4v3h-4zM1034 508h3v2h-3zM1034 513h3v2h-3zM1043 533h4v2h-4zM1002 518h2v3h-2zM1006 518h2v3h-2zM1062 486h2v4h-2zM1051 562h3v2h-3zM1051 566h3v2h-3zM1017 485h2v4h-2zM1022 485h2v4h-2zM1058 545h3v4h-3zM1063 545h3v4h-3zM1008 488h3v2h-3zM1008 492h3v2h-3zM1040 546h3v4h-3zM1046 546h3v4h-3zM1038 500h4v3h-4zM1023 568h2v4h-2zM1028 568h2v4h-2zM1032 529h3v4h-3zM1037 529h3v4h-3zM1021 524h3v2h-3zM1061 578h4v3h-4zM1061 583h4v3h-4zM1060 527h2v4h-2zM1065 527h2v4h-2zM1002 531h3v2h-3zM1002 535h3v2h-3zM1044 540h2v4h-2zM1048 540h2v4h-2zM1044 521h4v2h-4zM1004 575h2v4h-2zM1055 563h3v4h-3zM1061 563h3v4h-3zM1055 523h4v2h-4zM1053 535h2v3h-2zM1057 535h2v3h-2zM1046 551h3v4h-3zM1052 551h3v4h-3zM1060 589h2v3h-2zM1065 589h2v3h-2zM1002 565h2v4h-2zM1007 565h2v4h-2zM1006 533h3v2h-3zM1006 538h3v2h-3zM1026 485h4v2h-4zM1035 520h3v2h-3zM1035 525h3v2h-3zM1063 515h3v2h-3zM1063 519h3v2h-3zM1014 565h2v3h-2zM1019 565h2v3h-2zM1048 525h4v2h-4zM1048 530h4v2h-4zM1049 556h2v3h-2zM1053 556h2v3h-2zM1007 581h3v2h-3zM1007 586h3v2h-3zM1002 586h3v2h-3zM1064 491h3v2h-3zM1064 496h3v2h-3zM1039 514h4v2h-4zM1039 519h4v2h-4zM1012 582h4v2h-4zM1012 586h4v2h-4zM1011 572h4v3h-4zM1011 577h4v3h-4zM1030 497h4v3h-4zM1030 503h4v3h-4zM1050 569h4v3h-4zM1050 574h4v3h-4zM1057 553h2v4h-2zM1061 553h2v4h-2zM1031 484h2v3h-2zM1036 484h2v3h-2zM1014 521h2v3h-2zM1018 521h2v3h-2zM1051 540h3v4h-3zM1057 540h3v4h-3zM1008 484h2v3h-2zM1005 546h4v3h-4zM1005 551h4v3h-4zM1020 531h2v3h-2zM1024 531h2v3h-2zM1048 490h2v3h-2zM1021 519h3v4h-3zM1002 542h3v2h-3zM1048 485h3v4h-3zM1053 485h3v4h-3zM1055 513h2v4h-2zM1060 513h2v4h-2zM1005 558h4v2h-4zM1005 562h4v2h-4zM1061 537h2v3h-2zM1012 529h2v3h-2zM1042 556h2v3h-2zM1046 556h2v3h-2zM1033 565h3v2h-3zM1033 570h3v2h-3zM1056 579h2v3h-2zM1018 491h2v3h-2zM1022 491h2v3h-2zM1050 546h2v4h-2zM1007 589h3v4h-3zM1013 589h3v4h-3zM1031 488h3v2h-3zM1031 493h3v2h-3zM1080 538h3v4h-3zM1085 538h3v4h-3zM1113 585h4v2h-4zM1113 590h4v2h-4zM1147 498h4v2h-4zM1147 502h4v2h-4zM1086 525h4v2h-4zM1086 530h4v2h-4zM1087 582h3v2h-3zM1144 585h2v3h-2zM1148 585h2v3h-2zM1114 514h2v3h-2zM1119 514h2v3h-2zM1105 582h2v3h-2zM1109 582h2v3h-2zM1082 554h2v4h-2zM1086 554h2v4h-2zM1095 493h4v2h-4zM1095 497h4v2h-4zM1080 544h3v4h-3zM1085 544h3v4h-3zM1096 589h2v4h-2zM1101 589h2v4h-2zM1133 497h3v4h-3zM1139 497h3v4h-3zM1143 590h2v3h-2zM1148 590h2v3h-2zM1123 510h3v2h-3zM1123 515h3v2h-3zM1112 563h2v3h-2zM1138 513h4v2h-4zM1138 518h4v2h-4zM1117 558h2v4h-2zM1121 558h2v4h-2zM1149 563h3v2h-3zM1149 567h3v2h-3zM1080 569h4v3h-4zM1080 575h4v3h-4zM1105 499h2v3h-2zM1118 589h2v3h-2zM1123 589h2v3h-2zM1112 573h4v3h-4zM1112 579h4v3h-4zM1080 564h2v3h-2zM1085 564h2v3h-2zM1135 491h3v4h-3zM1140 491h3v4h-3zM1128 583h2v4h-2zM1132 583h2v4h-2zM1085 588h2v3h-2zM1089 588h2v3h-2zM1129 510h3v4h-3zM1134 510h3v4h-3zM1144 516h2v4h-2zM1129 526h2v3h-2zM1133 526h2v3h-2zM1105 512h3v4h-3zM1139 504h4v2h-4zM1139 509h4v2h-4zM1150 576h4v3h-4zM1150 581h4v3h-4zM1110 588h2v3h-2zM1080 495h3v2h-3zM1126 589h2v4h-2zM1130 589h2v4h-2zM1085 575h4v2h-4zM1147 553h2v3h-2zM1152 553h2v3h-2zM1110 518h3v4h-3zM1091 581h2v3h-2zM1095 581h2v3h-2zM1101 488h4v3h-4zM1131 532h3v2h-3zM1089 550h4v2h-4zM1089 554h4v2h-4zM1148 508h2v3h-2zM1152 508h2v3h-2zM1118 584h2v4h-2zM1122 584h2v4h-2zM1120 518h2v3h-2zM1096 554h2v4h-2zM1109 554h2v4h-2zM1113 554h2v4h-2zM1081 522h4v2h-4zM1080 506h4v2h-4zM1152 547h2v4h-2zM1084 533h3v4h-3zM1089 533h3v4h-3zM1127 518h2v3h-2zM1132 518h2v3h-2zM1146 491h2v4h-2zM1150 491h2v4h-2zM1110 567h3v4h-3zM1115 567h3v4h-3zM1136 586h3v2h-3zM1136 591h3v2h-3zM1080 514h4v2h-4zM1080 519h4v2h-4zM1243 465h3v4h-3zM1249 465h3v4h-3zM1202 435h2v3h-2zM1207 435h2v3h-2zM1205 449h3v2h-3zM1205 454h3v2h-3zM1237 492h2v3h-2zM1241 492h2v3h-2zM1161 482h2v4h-2zM1165 482h2v4h-2zM1155 478h4v2h-4zM1155 482h4v2h-4zM1191 438h4v2h-4zM1191 442h4v2h-4zM1248 440h4v2h-4zM1248 444h4v2h-4zM1195 476h2v3h-2zM1200 476h2v3h-2zM1212 489h4v2h-4zM1218 429h4v3h-4zM1218 434h4v3h-4zM1244 481h2v3h-2zM1249 481h2v3h-2zM1155 452h2v4h-2zM1182 463h3v4h-3zM1187 463h3v4h-3zM1207 465h4v3h-4zM1207 470h4v3h-4zM1249 426h2v4h-2zM1253 426h2v4h-2zM1160 443h3v2h-3zM1160 447h3v2h-3zM1228 454h2v4h-2zM1232 454h2v4h-2zM1289 462h2v4h-2zM1248 431h3v2h-3zM1299 467h2v4h-2zM1303 467h2v4h-2zM1282 468h2v3h-2zM1260 469h3v2h-3zM1325 427h2v3h-2zM1330 427h2v3h-2zM1323 467h3v4h-3zM1328 467h3v4h-3zM1275 478h2v3h-2zM1280 478h2v3h-2zM1306 493h2v3h-2zM1310 493h2v3h-2zM1301 434h3v2h-3zM1301 438h3v2h-3zM1293 493h2v3h-2zM1298 493h2v3h-2zM1244 566h2v3h-2zM1191 518h3v4h-3zM1197 518h3v4h-3zM1216 555h4v3h-4zM1216 561h4v3h-4zM1222 545h3v2h-3zM1222 549h3v2h-3zM1155 508h2v4h-2zM1159 508h2v4h-2zM1227 567h3v4h-3zM1196 590h2v3h-2zM1200 590h2v3h-2zM1250 561h3v2h-3zM1250 565h3v2h-3zM1276 487h4v2h-4zM1276 492h4v2h-4zM1297 524h2v3h-2zM1262 539h3v2h-3zM1262 544h3v2h-3zM1262 527h4v3h-4zM1262 532h4v3h-4zM1286 562h2v3h-2zM1290 562h2v3h-2zM1266 510h2v3h-2zM1247 549h2v4h-2zM1251 549h2v4h-2zM1294 547h4v3h-4zM1294 553h4v3h-4zM1335 503h4v3h-4zM1335 508h4v3h-4zM1282 511h2v4h-2zM1286 511h2v4h-2zM1311 563h2v3h-2zM1332 493h2v3h-2zM1336 493h2v3h-2zM1332 573h4v3h-4zM1315 585h2v3h-2zM1320 585h2v3h-2zM1315 561h3v2h-3zM1273 506h2v3h-2zM1278 506h2v3h-2zM1335 526h3v2h-3zM1335 530h3v2h-3zM1307 545h2v4h-2zM1311 545h2v4h-2zM1320 516h2v4h-2zM1324 516h2v4h-2zM1312 497h4v3h-4zM1312 502h4v3h-4zM1295 501h3v2h-3zM1295 505h3v2h-3zM1320 523h2v4h-2zM1206 462h2v3h-2zM1210 462h2v3h-2zM1161 476h3v2h-3zM1161 479h3v2h-3zM1245 453h2v3h-2zM1218 475h3v2h-3zM1218 478h3v2h-3zM1204 476h2v3h-2zM1208 476h2v3h-2zM1243 469h3v2h-3zM1243 472h3v2h-3zM1164 466h3v2h-3zM1164 470h3v2h-3zM1193 435h2v3h-2zM1196 435h2v3h-2zM1185 424h2v3h-2zM1189 424h2v3h-2zM1195 447h2v3h-2zM1199 447h2v3h-2zM1183 474h3v2h-3zM1155 449h2v3h-2zM1158 449h2v3h-2zM1181 440h3v2h-3zM1181 445h3v2h-3zM1214 443h2v3h-2zM1184 441h2v3h-2zM1189 441h2v3h-2zM1216 424h2v4h-2zM1221 424h2v4h-2zM1195 425h2v3h-2zM1200 425h2v3h-2zM1234 488h3v2h-3zM1234 492h3v2h-3zM1165 430h3v2h-3zM1165 434h3v2h-3zM1204 425h3v2h-3zM1204 429h3v2h-3zM1213 446h2v3h-2zM1222 477h2v3h-2zM1227 477h2v3h-2zM1154 475h2v3h-2zM1158 475h2v3h-2zM1225 466h2v3h-2zM1229 466h2v3h-2zM1251 430h3v2h-3zM1251 434h3v2h-3zM1311 431h2v3h-2zM1315 431h2v3h-2zM1299 462h2v3h-2zM1303 462h2v3h-2zM1319 474h3v2h-3zM1319 478h3v2h-3zM1324 424h2v3h-2zM1298 440h3v2h-3zM1298 443h3v2h-3zM1299 448h2v3h-2zM1302 448h2v3h-2zM1260 457h2v3h-2zM1309 471h4v2h-4zM1245 425h3v2h-3zM1245 428h3v2h-3zM1304 430h2v3h-2zM1309 430h2v3h-2zM1310 478h3v2h-3zM1310 481h3v2h-3zM1255 425h3v2h-3zM1255 429h3v2h-3zM1328 471h3v2h-3zM1328 475h3v2h-3zM1319 483h2v4h-2zM1324 483h2v4h-2zM1252 457h2v3h-2zM1302 482h2v3h-2zM1306 482h2v3h-2zM1286 492h2v3h-2zM1309 425h3v2h-3zM1309 428h3v2h-3zM1325 435h2v3h-2zM1329 435h2v3h-2zM1287 451h2v3h-2zM1292 451h2v3h-2zM1314 471h2v3h-2zM1317 471h2v3h-2zM1213 512h3v2h-3zM1213 515h3v2h-3zM1203 517h2v3h-2zM1208 517h2v3h-2zM1230 587h3v2h-3zM1230 590h3v2h-3zM1227 543h2v3h-2zM1232 543h2v3h-2zM1233 480h2v3h-2zM1237 480h2v3h-2zM1229 547h3v2h-3zM1194 552h3v2h-3zM1194 557h3v2h-3zM1246 508h2v3h-2zM1250 508h2v3h-2zM1238 508h2v3h-2zM1242 508h2v3h-2zM1246 493h3v2h-3zM1246 496h3v2h-3zM1217 566h4v2h-4zM1217 571h4v2h-4zM1251 567h2v3h-2zM1169 532h3v2h-3zM1169 536h3v2h-3zM1165 552h4v2h-4zM1200 586h4v2h-4zM1243 494h3v2h-3zM1243 499h3v2h-3zM1227 504h2v3h-2zM1232 504h2v3h-2zM1183 517h2v3h-2zM1188 517h2v3h-2zM1204 537h3v2h-3zM1204 541h3v2h-3zM1243 523h3v2h-3zM1243 527h3v2h-3zM1306 523h2v3h-2zM1310 523h2v3h-2zM1293 558h2v3h-2zM1296 558h2v3h-2zM1287 565h2v3h-2zM1290 565h2v3h-2zM1285 509h4v2h-4zM1309 535h3v2h-3zM1298 503h3v2h-3zM1298 507h3v2h-3zM1290 501h3v2h-3zM1290 504h3v2h-3zM1267 542h2v3h-2zM1270 542h2v3h-2zM1290 520h2v3h-2zM1294 520h2v3h-2zM1277 531h2v3h-2zM1290 534h3v2h-3zM1336 565h3v2h-3zM1336 570h3v2h-3zM1243 548h3v2h-3zM1243 551h3v2h-3zM1273 518h3v2h-3zM1273 523h3v2h-3zM1246 561h3v2h-3zM1246 565h3v2h-3zM1327 584h2v3h-2zM1305 560h2v3h-2zM1308 560h2v3h-2zM1290 542h3v2h-3zM1290 545h3v2h-3zM1323 497h3v2h-3zM1323 501h3v2h-3zM1038 494h3v2h-3zM1061 542h2v3h-2zM1065 542h2v3h-2zM1048 577h3v2h-3zM1048 582h3v2h-3zM1029 506h4v2h-4zM1029 511h4v2h-4zM1045 525h3v2h-3zM1045 529h3v2h-3zM1036 584h3v2h-3zM1050 532h3v2h-3zM1050 537h3v2h-3zM1039 559h2v3h-2zM1042 559h2v3h-2zM1057 526h3v2h-3zM1002 551h3v2h-3zM1002 556h3v2h-3zM1011 517h3v2h-3zM1011 522h3v2h-3zM1021 564h2v3h-2zM1025 564h2v3h-2zM1027 528h2v3h-2zM1062 498h2v3h-2zM1063 554h3v2h-3zM1063 559h3v2h-3zM1002 490h3v2h-3zM1002 495h3v2h-3zM1064 569h3v2h-3zM1136 501h2v3h-2zM1139 501h2v3h-2zM1084 567h2v3h-2zM1088 567h2v3h-2zM1096 488h2v3h-2zM1102 511h3v2h-3zM1102 514h3v2h-3zM1149 556h3v2h-3zM1149 560h3v2h-3zM1087 560h4v2h-4zM1087 565h4v2h-4zM1128 530h3v2h-3zM1128 534h3v2h-3zM1093 553h3v2h-3zM1093 557h3v2h-3zM1145 504h2v3h-2zM1148 504h2v3h-2zM1144 488h2v3h-2zM1147 488h2v3h-2zM1109 558h2v4h-2zM1098 585h2v3h-2zM1136 488h2v3h-2zM1140 488h2v3h-2zM1144 509h3v2h-3zM1118 565h3v2h-3zM1118 569h3v2h-3zM1395 455h4v2h-4zM1395 460h4v2h-4zM1394 440h2v4h-2zM1393 488h3v2h-3zM1393 493h3v2h-3zM1395 428h4v3h-4zM1399 446h4v3h-4zM1399 451h4v3h-4zM1399 480h3v4h-3zM1397 466h3v2h-3zM1397 471h3v2h-3zM1400 428h3v2h-3zM1400 433h3v2h-3zM1398 493h3v2h-3zM1396 476h2v3h-2zM1401 476h2v3h-2zM1394 445h3v2h-3zM1394 450h3v2h-3zM1437 451h3v2h-3zM1442 481h4v3h-4zM1442 486h4v3h-4zM1443 464h4v3h-4zM1443 469h4v3h-4zM1436 464h3v2h-3zM1436 468h3v2h-3zM1440 458h2v4h-2zM1438 475h3v4h-3zM1443 475h3v4h-3zM1443 454h4v3h-4zM1436 445h3v4h-3zM1437 480h4v2h-4zM1437 484h4v2h-4zM1441 450h2v3h-2zM1446 450h2v3h-2zM1354 487h4v3h-4zM1354 492h4v3h-4zM1347 482h3v4h-3zM1352 482h3v4h-3zM1381 480h4v3h-4zM1381 485h4v3h-4zM1371 488h4v2h-4zM1371 492h4v2h-4zM1379 493h2v3h-2zM1383 493h2v3h-2zM1365 493h2v3h-2zM1374 480h4v2h-4zM1374 485h4v2h-4zM1367 478h4v2h-4zM1367 483h4v2h-4zM1389 483h3v2h-3zM1356 481h3v4h-3zM1379 475h2v4h-2zM1383 475h2v4h-2zM1362 486h2v4h-2zM1367 486h2v4h-2zM1356 476h3v4h-3zM1361 476h3v4h-3zM1349 478h2v3h-2zM1349 488h3v2h-3zM1382 489h2v3h-2zM1396 500h3v4h-3zM1401 500h3v4h-3zM1409 499h3v4h-3zM1414 499h3v4h-3zM1377 499h3v4h-3zM1382 499h3v4h-3zM1431 496h4v2h-4zM1431 501h4v2h-4zM1387 494h4v3h-4zM1437 490h2v4h-2zM1351 497h4v2h-4zM1419 497h2v4h-2zM1356 498h2v3h-2zM1438 498h3v4h-3zM1443 498h3v4h-3zM1371 497h3v2h-3zM1371 502h3v2h-3zM1366 498h4v2h-4zM1366 502h4v2h-4zM1405 496h3v2h-3zM1405 500h3v2h-3zM1392 496h2v3h-2zM1361 517h3v4h-3zM1367 517h3v4h-3zM1406 547h2v4h-2zM1410 547h2v4h-2zM1385 547h3v4h-3zM1391 547h3v4h-3zM1380 518h2v3h-2zM1385 518h2v3h-2zM1393 552h4v3h-4zM1393 557h4v3h-4zM1369 556h4v3h-4zM1369 561h4v3h-4zM1413 558h2v3h-2zM1418 558h2v3h-2zM1436 513h2v3h-2zM1440 513h2v3h-2zM1398 545h3v2h-3zM1380 525h2v4h-2zM1385 525h2v4h-2zM1434 525h2v4h-2zM1438 525h2v4h-2zM1436 545h4v3h-4zM1436 550h4v3h-4zM1424 554h4v2h-4zM1435 554h3v4h-3zM1440 554h3v4h-3zM1381 512h2v3h-2zM1385 512h2v3h-2zM1430 533h2v3h-2zM1384 535h3v4h-3zM1390 535h3v4h-3zM1389 520h3v4h-3zM1394 520h3v4h-3zM1417 514h3v4h-3zM1373 514h2v3h-2zM1377 514h2v3h-2zM1422 521h4v3h-4zM1422 526h4v3h-4zM1390 511h3v2h-3zM1390 516h3v2h-3zM1430 559h2v4h-2zM1435 559h2v4h-2zM1428 521h2v3h-2zM1432 521h2v3h-2zM1365 523h2v3h-2zM1369 523h2v3h-2zM1409 556h3v2h-3zM1356 526h2v4h-2zM1379 552h3v4h-3zM1385 552h3v4h-3zM1413 545h3v4h-3zM1418 545h3v4h-3zM1395 514h2v4h-2zM1399 514h2v4h-2zM1398 519h4v2h-4zM1398 523h4v2h-4zM1378 533h3v2h-3zM1378 537h3v2h-3zM1437 520h2v4h-2zM1441 520h2v4h-2zM1376 558h3v4h-3zM1426 545h3v4h-3zM1431 545h3v4h-3zM1373 527h4v3h-4zM1373 533h4v3h-4zM1363 527h4v3h-4zM1363 532h4v3h-4zM1377 544h3v2h-3zM1377 549h3v2h-3zM1358 557h2v3h-2zM1363 557h2v3h-2zM1401 556h2v4h-2zM1405 556h2v4h-2zM1403 511h3v4h-3zM1408 511h3v4h-3zM1413 551h3v4h-3zM1419 551h3v4h-3zM1397 526h4v2h-4zM1397 530h4v2h-4zM1429 539h2v4h-2zM1433 539h2v4h-2zM1428 511h4v3h-4zM1428 516h4v3h-4zM1412 515h4v3h-4zM1412 520h4v3h-4zM1386 540h3v4h-3zM1430 550h4v3h-4zM1430 555h4v3h-4zM1426 532h3v2h-3zM1406 518h3v2h-3zM1406 522h3v2h-3zM1357 515h3v2h-3zM1422 539h2v3h-2zM1426 539h2v3h-2zM1438 533h4v3h-4zM1438 538h4v3h-4zM1355 548h3v2h-3zM1365 511h2v4h-2zM1369 511h2v4h-2zM1396 535h4v2h-4zM1396 539h4v2h-4zM1368 532h4v3h-4zM1383 531h2v3h-2zM1388 531h2v3h-2zM1371 518h3v4h-3zM1376 518h3v4h-3zM1355 537h3v2h-3zM1402 548h3v2h-3zM1402 553h3v2h-3zM1364 561h2v3h-2z"/><path fill="#808080" d="M1145 479h3v4h-3zM1335 536h4v3h-4zM1504 500h3v3h-3zM1504 506h3v3h-3zM1056 559h2v3h-2zM1030 526h4v2h-4zM1035 497h3v2h-3zM1061 571h3v4h-3zM1043 537h4v2h-4zM1058 486h2v4h-2zM1038 506h4v3h-4zM1021 528h3v2h-3zM1044 516h4v2h-4zM1008 575h2v4h-2zM1055 518h4v2h-4zM1026 489h4v2h-4zM1002 591h3v2h-3zM1004 484h2v3h-2zM1053 490h2v3h-2zM1026 519h3v4h-3zM1002 538h3v2h-3zM1065 537h2v3h-2zM1017 529h2v3h-2zM1052 579h2v3h-2zM1055 546h2v4h-2zM1087 578h3v2h-3zM1116 563h2v3h-2zM1100 499h2v3h-2zM1149 516h2v4h-2zM1110 512h3v4h-3zM1106 588h2v3h-2zM1080 490h3v2h-3zM1085 571h4v2h-4zM1105 518h3v4h-3zM1101 494h4v3h-4zM1131 536h3v2h-3zM1124 518h2v3h-2zM1100 554h2v4h-2zM1081 526h4v2h-4zM1080 510h4v2h-4zM1147 547h2v4h-2zM1212 493h4v2h-4zM1159 452h2v4h-2zM1293 462h2v4h-2zM1248 435h3v2h-3zM1278 468h2v3h-2zM1260 473h3v2h-3zM1239 566h2v3h-2zM1232 567h3v4h-3zM1292 524h2v3h-2zM1262 510h2v3h-2zM1306 563h2v3h-2zM1332 567h4v3h-4zM1315 566h3v2h-3zM1324 523h2v4h-2zM1250 453h2v3h-2zM1183 477h3v2h-3zM1217 443h2v3h-2zM1218 446h2v3h-2zM1328 424h2v3h-2zM1264 457h2v3h-2zM1309 476h4v2h-4zM1256 457h2v3h-2zM1290 492h2v3h-2zM1229 551h3v2h-3zM1247 567h2v3h-2zM1165 547h4v2h-4zM1200 581h4v2h-4zM1285 504h4v2h-4zM1309 540h3v2h-3zM1281 531h2v3h-2zM1290 538h3v2h-3zM1322 584h2v3h-2zM1038 498h3v2h-3zM1036 588h3v2h-3zM1057 530h3v2h-3zM1030 528h2v3h-2zM1065 498h2v3h-2zM1064 573h3v2h-3zM1099 488h2v3h-2zM1114 558h2v4h-2zM1102 585h2v3h-2zM1144 513h3v2h-3zM1398 440h2v4h-2zM1395 433h4v3h-4zM1393 480h3v4h-3zM1398 488h3v2h-3zM1437 455h3v2h-3zM1436 458h2v4h-2zM1443 459h4v3h-4zM1442 445h3v4h-3zM1361 493h2v3h-2zM1389 488h3v2h-3zM1361 481h3v4h-3zM1353 478h2v3h-2zM1349 492h3v2h-3zM1386 489h2v3h-2zM1387 499h4v3h-4zM1441 490h2v4h-2zM1351 502h4v2h-4zM1423 497h2v4h-2zM1360 498h2v3h-2zM1397 496h2v3h-2zM1398 549h3v2h-3zM1424 559h4v2h-4zM1435 533h2v3h-2zM1423 514h3v4h-3zM1409 560h3v2h-3zM1360 526h2v4h-2zM1382 558h3v4h-3zM1392 540h3v4h-3zM1426 536h3v2h-3zM1357 511h3v2h-3zM1355 553h3v2h-3zM1368 527h4v3h-4zM1355 542h3v2h-3zM1359 561h2v3h-2z"/><g shape-rendering="geometricPrecision"><path fill="#008284" d="M1012.9 381.7L1012.5 382.2L1012.5 382.8L1011.8 382.9L1011.3 383.3L1010.8 382.9L1010.2 382.8L1010.1 382.2L1009.7 381.7L1010.1 381.2L1010.2 380.5L1010.8 380.5L1011.3 380.1L1011.8 380.5L1012.5 380.5L1012.5 381.2zM1388.9 350.4L1388.5 350.8L1388.5 351.4L1387.9 351.4L1387.5 351.8L1387 351.4L1386.5 351.4L1386.4 350.8L1386.1 350.4L1386.4 349.9L1386.5 349.4L1387 349.3L1387.5 348.9L1387.9 349.3L1388.5 349.4L1388.5 349.9zM1448 350.4L1447.7 350.7L1447.6 351.2L1447.1 351.3L1446.8 351.6L1446.4 351.3L1445.9 351.2L1445.9 350.7L1445.6 350.4L1445.9 350L1445.9 349.5L1446.4 349.4L1446.8 349.1L1447.1 349.4L1447.6 349.5L1447.7 350z"/><path fill="#ffd83a" d="M1194.8 377.4a6.2 6.2 0 1 0 12.3 0a6.2 6.2 0 1 0 -12.3 0zM1033.9 435.4a2.6 2.6 0 1 0 5.2 0a2.6 2.6 0 1 0 -5.2 0zM1039 472.7L1038.1 473.8L1037.9 475.2L1036.5 475.4L1035.4 476.3L1034.2 475.4L1032.8 475.2L1032.6 473.8L1031.7 472.7L1032.6 471.5L1032.8 470.1L1034.2 469.9L1035.4 469L1036.5 469.9L1037.9 470.1L1038.1 471.5zM1282.3 409.3L1281.1 410.8L1280.9 412.7L1279 412.9L1277.5 414.1L1276 412.9L1274.1 412.7L1273.9 410.8L1272.7 409.3L1273.9 407.8L1274.1 405.8L1276 405.6L1277.5 404.4L1279 405.6L1280.9 405.8L1281.1 407.8zM1295.4 409.3L1294.2 410.8L1294 412.7L1292 412.9L1290.5 414.1L1289 412.9L1287.1 412.7L1286.9 410.8L1285.7 409.3L1286.9 407.8L1287.1 405.8L1289 405.6L1290.5 404.4L1292 405.6L1294 405.8L1294.2 407.8zM1495 474L1494.7 474.3L1494.6 474.8L1494.1 474.9L1493.7 475.2L1493.4 474.9L1492.9 474.8L1492.8 474.3L1492.5 474L1492.8 473.6L1492.9 473.1L1493.4 473L1493.7 472.7L1494.1 473L1494.6 473.1L1494.7 473.6zM1493.1 479.5L1492.8 479.9L1492.7 480.4L1492.3 480.5L1491.9 480.8L1491.5 480.5L1491 480.4L1491 479.9L1490.7 479.5L1491 479.2L1491 478.7L1491.5 478.6L1491.9 478.3L1492.3 478.6L1492.7 478.7L1492.8 479.2zM1495.9 484.2L1495.6 484.6L1495.5 485.1L1495.1 485.1L1494.7 485.4L1494.3 485.1L1493.8 485.1L1493.8 484.6L1493.5 484.2L1493.8 483.8L1493.8 483.4L1494.3 483.3L1494.7 483L1495.1 483.3L1495.5 483.4L1495.6 483.8zM1494 487.9L1493.7 488.3L1493.7 488.8L1493.2 488.8L1492.8 489.1L1492.4 488.8L1492 488.8L1491.9 488.3L1491.6 487.9L1491.9 487.6L1492 487.1L1492.4 487L1492.8 486.7L1493.2 487L1493.7 487.1L1493.7 487.6zM1007 605.4L1005.9 606.8L1005.6 608.6L1003.9 608.8L1002.4 609.9L1001 608.8L999.2 608.6L999 606.8L997.9 605.4L999 604L999.2 602.2L1001 602L1002.4 600.9L1003.9 602L1005.6 602.2L1005.9 604zM1020.2 605.4L1019.1 606.8L1018.9 608.6L1017.1 608.8L1015.7 609.9L1014.2 608.8L1012.5 608.6L1012.2 606.8L1011.1 605.4L1012.2 604L1012.5 602.2L1014.2 602L1015.7 600.9L1017.1 602L1018.9 602.2L1019.1 604zM1128.8 636.2L1127.7 637.7L1127.5 639.5L1125.7 639.7L1124.3 640.8L1122.9 639.7L1121.1 639.5L1120.9 637.7L1119.8 636.2L1120.9 634.8L1121.1 633L1122.9 632.8L1124.3 631.7L1125.7 632.8L1127.5 633L1127.7 634.8zM1143.9 636.2L1142.8 637.7L1142.6 639.5L1140.8 639.7L1139.4 640.8L1138 639.7L1136.2 639.5L1136 637.7L1134.9 636.2L1136 634.8L1136.2 633L1138 632.8L1139.4 631.7L1140.8 632.8L1142.6 633L1142.8 634.8zM1156.9 635.6L1155.8 637L1155.6 638.8L1153.8 639L1152.4 640.2L1151 639L1149.2 638.8L1149 637L1147.9 635.6L1149 634.2L1149.2 632.4L1151 632.2L1152.4 631.1L1153.8 632.2L1155.6 632.4L1155.8 634.2zM1169.7 635.6L1168.6 637L1168.4 638.8L1166.6 639L1165.2 640.2L1163.8 639L1162 638.8L1161.8 637L1160.7 635.6L1161.8 634.2L1162 632.4L1163.8 632.2L1165.2 631.1L1166.6 632.2L1168.4 632.4L1168.6 634.2zM1183.8 635.6L1182.7 637L1182.4 638.8L1180.7 639L1179.2 640.2L1177.8 639L1176 638.8L1175.8 637L1174.7 635.6L1175.8 634.2L1176 632.4L1177.8 632.2L1179.2 631.1L1180.7 632.2L1182.4 632.4L1182.7 634.2zM1214.2 607.3L1213.1 608.7L1212.9 610.5L1211.1 610.7L1209.7 611.8L1208.2 610.7L1206.5 610.5L1206.2 608.7L1205.1 607.3L1206.2 605.9L1206.5 604.1L1208.2 603.9L1209.7 602.8L1211.1 603.9L1212.9 604.1L1213.1 605.9zM1066.7 603.3L1065.8 604.4L1065.7 605.7L1064.3 605.9L1063.3 606.7L1062.2 605.9L1060.9 605.7L1060.7 604.4L1059.9 603.3L1060.7 602.3L1060.9 600.9L1062.2 600.8L1063.3 599.9L1064.3 600.8L1065.7 600.9L1065.8 602.3zM1079.9 603.3L1079 604.4L1078.9 605.7L1077.5 605.9L1076.5 606.7L1075.4 605.9L1074.1 605.7L1073.9 604.4L1073.1 603.3L1073.9 602.3L1074.1 600.9L1075.4 600.8L1076.5 599.9L1077.5 600.8L1078.9 600.9L1079 602.3zM1113 603.3L1112.2 604.4L1112 605.7L1110.7 605.9L1109.6 606.7L1108.6 605.9L1107.2 605.7L1107.1 604.4L1106.2 603.3L1107.1 602.3L1107.2 600.9L1108.6 600.8L1109.6 599.9L1110.7 600.8L1112 600.9L1112.2 602.3zM1122.9 603.3L1122 604.4L1121.9 605.7L1120.5 605.9L1119.5 606.7L1118.4 605.9L1117.1 605.7L1116.9 604.4L1116.1 603.3L1116.9 602.3L1117.1 600.9L1118.4 600.8L1119.5 599.9L1120.5 600.8L1121.9 600.9L1122 602.3zM1063.7 633.7L1062.9 634.8L1062.7 636.1L1061.4 636.3L1060.3 637.1L1059.3 636.3L1057.9 636.1L1057.8 634.8L1056.9 633.7L1057.8 632.7L1057.9 631.3L1059.3 631.2L1060.3 630.3L1061.4 631.2L1062.7 631.3L1062.9 632.7zM1074.6 633.7L1073.8 634.8L1073.6 636.1L1072.3 636.3L1071.2 637.1L1070.2 636.3L1068.8 636.1L1068.7 634.8L1067.8 633.7L1068.7 632.7L1068.8 631.3L1070.2 631.2L1071.2 630.3L1072.3 631.2L1073.6 631.3L1073.8 632.7zM1084.7 633.7L1083.9 634.8L1083.7 636.1L1082.4 636.3L1081.3 637.1L1080.2 636.3L1078.9 636.1L1078.7 634.8L1077.9 633.7L1078.7 632.7L1078.9 631.3L1080.2 631.2L1081.3 630.3L1082.4 631.2L1083.7 631.3L1083.9 632.7zM1095 633.7L1094.1 634.8L1094 636.1L1092.6 636.3L1091.6 637.1L1090.5 636.3L1089.2 636.1L1089 634.8L1088.2 633.7L1089 632.7L1089.2 631.3L1090.5 631.2L1091.6 630.3L1092.6 631.2L1094 631.3L1094.1 632.7zM1105.7 633.7L1104.8 634.8L1104.7 636.1L1103.3 636.3L1102.3 637.1L1101.2 636.3L1099.9 636.1L1099.7 634.8L1098.9 633.7L1099.7 632.7L1099.9 631.3L1101.2 631.2L1102.3 630.3L1103.3 631.2L1104.7 631.3L1104.8 632.7zM1319.9 635.2L1318.8 636.6L1318.6 638.4L1316.8 638.6L1315.4 639.7L1313.9 638.6L1312.2 638.4L1311.9 636.6L1310.8 635.2L1311.9 633.8L1312.2 632L1313.9 631.8L1315.4 630.7L1316.8 631.8L1318.6 632L1318.8 633.8zM1494 519.4L1492.8 520.8L1492.6 522.6L1490.8 522.8L1489.4 524L1488 522.8L1486.2 522.6L1486 520.8L1484.9 519.4L1486 518L1486.2 516.2L1488 516L1489.4 514.9L1490.8 516L1492.6 516.2L1492.8 518zM1507 519.4L1505.8 520.8L1505.6 522.6L1503.9 522.8L1502.4 524L1501 522.8L1499.2 522.6L1499 520.8L1497.9 519.4L1499 518L1499.2 516.2L1501 516L1502.4 514.9L1503.9 516L1505.6 516.2L1505.8 518zM1493.7 486.7L1493.4 487.1L1493.4 487.5L1492.9 487.6L1492.6 487.8L1492.2 487.6L1491.8 487.5L1491.7 487.1L1491.4 486.7L1491.7 486.4L1491.8 485.9L1492.2 485.9L1492.6 485.6L1492.9 485.9L1493.4 485.9L1493.4 486.4zM1495.8 484.2L1495.5 484.5L1495.5 485L1495 485L1494.7 485.3L1494.3 485L1493.9 485L1493.8 484.5L1493.5 484.2L1493.8 483.8L1493.9 483.4L1494.3 483.3L1494.7 483.1L1495 483.3L1495.5 483.4L1495.5 483.8z"/><path fill="#808080" d="M1081.8 434.4L1080.5 436.1L1080.2 438.3L1078.1 438.5L1076.4 439.9L1074.7 438.5L1072.5 438.3L1072.3 436.1L1070.9 434.4L1072.3 432.7L1072.5 430.6L1074.7 430.3L1076.4 429L1078.1 430.3L1080.2 430.6L1080.5 432.7zM1003.8 619.1L1002.7 620.5L1002.5 622.3L1000.7 622.5L999.3 623.6L997.9 622.5L996.1 622.3L995.9 620.5L994.8 619.1L995.9 617.6L996.1 615.8L997.9 615.6L999.3 614.5L1000.7 615.6L1002.5 615.8L1002.7 617.6zM1003.8 632.1L1002.7 633.5L1002.5 635.3L1000.7 635.5L999.3 636.6L997.9 635.5L996.1 635.3L995.9 633.5L994.8 632.1L995.9 630.6L996.1 628.9L997.9 628.6L999.3 627.5L1000.7 628.6L1002.5 628.9L1002.7 630.6zM1411.6 594.3L1410.3 596L1410 598.1L1407.9 598.4L1406.2 599.7L1404.5 598.4L1402.3 598.1L1402.1 596L1400.7 594.3L1402.1 592.6L1402.3 590.5L1404.5 590.2L1406.2 588.9L1407.9 590.2L1410 590.5L1410.3 592.6z"/><path fill="#0000ff" d="M1290.7 445.1a1.1 1.1 0 1 0 2.2 0a1.1 1.1 0 1 0 -2.2 0zM1180.5 627.2a1.3 1.3 0 1 0 2.5 0a1.3 1.3 0 1 0 -2.5 0zM1133.3 547.7a1.5 1.5 0 1 0 2.9 0a1.5 1.5 0 1 0 -2.9 0zM1120.5 529.9a1.5 1.5 0 1 0 2.9 0a1.5 1.5 0 1 0 -2.9 0zM1212 496.1a1.3 1.3 0 1 0 2.5 0a1.3 1.3 0 1 0 -2.5 0z"/></g><text x="1371.1" y="454.9" text-anchor="middle" font-family="Liberation Sans, sans-serif" font-size="6.5" fill="#2222cc" style="shape-rendering:auto">3457</text></g></svg></div>
<div id="rstrip" class="abs"><svg class="abs" style="left:0;top:323px" width="10" height="116" viewBox="1513 429 10 116"><path d="M1523.500 431L1514 443.500V527.500L1523.500 542" fill="#dcecff" stroke="#9cccff" stroke-width="1"/><path d="M1520 485L1516.500 488.500L1520 492" fill="none" stroke="#5aa0f0" stroke-width="1"/></svg></div>
<div id="status" class="abs"><div class="t">XZZ Schematics https://www.xzztools.com</div></div></body></html>
